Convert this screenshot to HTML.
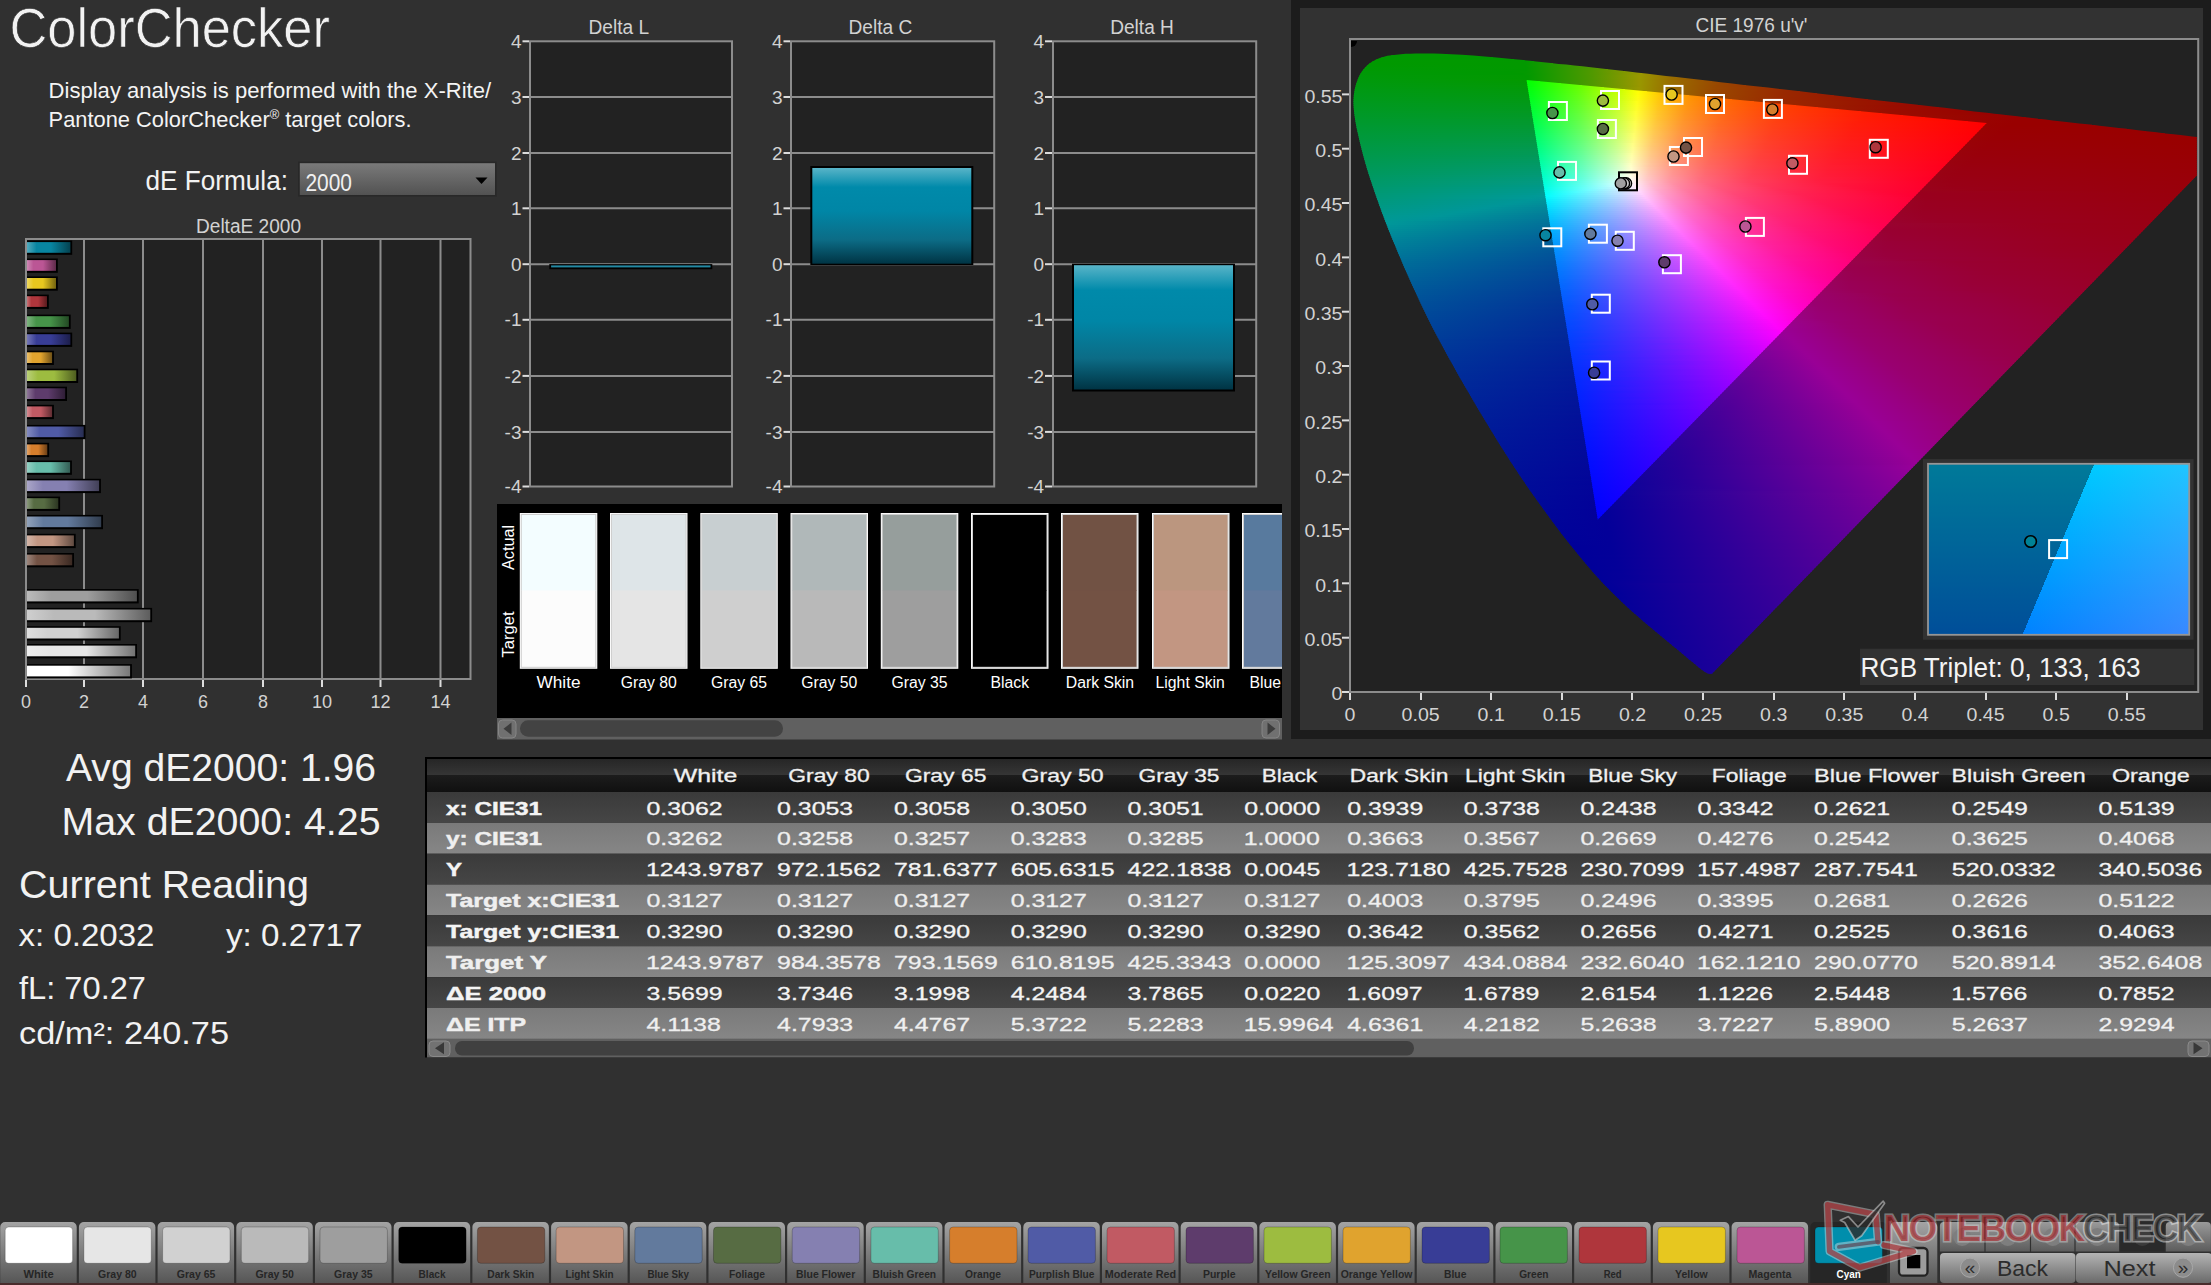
<!DOCTYPE html>
<html lang="en"><head><meta charset="utf-8"><title>ColorChecker</title>
<style>
html,body{margin:0;padding:0;background:#303030;overflow:hidden}
svg{display:block;font-family:"Liberation Sans",sans-serif}
text{white-space:pre}
</style></head><body>
<svg width="2211" height="1285" viewBox="0 0 2211 1285">
<defs>
<linearGradient id="cb" x1="0" y1="0" x2="0" y2="1"><stop offset="0" stop-color="#7a7a7a"/><stop offset="1" stop-color="#525252"/></linearGradient>
<linearGradient id="db0"><stop offset="0" stop-color="#52aabd"/><stop offset="0.22" stop-color="#0885a1"/><stop offset="0.55" stop-color="#0885a1"/><stop offset="1" stop-color="#044250"/></linearGradient>
<linearGradient id="db1"><stop offset="0" stop-color="#cf89b5"/><stop offset="0.22" stop-color="#bb5695"/><stop offset="0.55" stop-color="#bb5695"/><stop offset="1" stop-color="#5e2b4a"/></linearGradient>
<linearGradient id="db2"><stop offset="0" stop-color="#eed862"/><stop offset="0.22" stop-color="#e7c71f"/><stop offset="0.55" stop-color="#e7c71f"/><stop offset="1" stop-color="#746410"/></linearGradient>
<linearGradient id="db3"><stop offset="0" stop-color="#c77276"/><stop offset="0.22" stop-color="#af363c"/><stop offset="0.55" stop-color="#af363c"/><stop offset="1" stop-color="#581b1e"/></linearGradient>
<linearGradient id="db4"><stop offset="0" stop-color="#7eb480"/><stop offset="0.22" stop-color="#469449"/><stop offset="0.55" stop-color="#469449"/><stop offset="1" stop-color="#234a24"/></linearGradient>
<linearGradient id="db5"><stop offset="0" stop-color="#7477b6"/><stop offset="0.22" stop-color="#383d96"/><stop offset="0.55" stop-color="#383d96"/><stop offset="1" stop-color="#1c1e4b"/></linearGradient>
<linearGradient id="db6"><stop offset="0" stop-color="#e9bf6d"/><stop offset="0.22" stop-color="#e0a32e"/><stop offset="0.55" stop-color="#e0a32e"/><stop offset="1" stop-color="#705217"/></linearGradient>
<linearGradient id="db7"><stop offset="0" stop-color="#bad079"/><stop offset="0.22" stop-color="#9dbc40"/><stop offset="0.55" stop-color="#9dbc40"/><stop offset="1" stop-color="#4e5e20"/></linearGradient>
<linearGradient id="db8"><stop offset="0" stop-color="#8e7698"/><stop offset="0.22" stop-color="#5e3c6c"/><stop offset="0.55" stop-color="#5e3c6c"/><stop offset="1" stop-color="#2f1e36"/></linearGradient>
<linearGradient id="db9"><stop offset="0" stop-color="#d48c92"/><stop offset="0.22" stop-color="#c15a63"/><stop offset="0.55" stop-color="#c15a63"/><stop offset="1" stop-color="#602d32"/></linearGradient>
<linearGradient id="db10"><stop offset="0" stop-color="#848cc1"/><stop offset="0.22" stop-color="#505ba6"/><stop offset="0.55" stop-color="#505ba6"/><stop offset="1" stop-color="#282e53"/></linearGradient>
<linearGradient id="db11"><stop offset="0" stop-color="#e2a56b"/><stop offset="0.22" stop-color="#d67e2c"/><stop offset="0.55" stop-color="#d67e2c"/><stop offset="1" stop-color="#6b3f16"/></linearGradient>
<linearGradient id="db12"><stop offset="0" stop-color="#95d1c4"/><stop offset="0.22" stop-color="#67bdaa"/><stop offset="0.55" stop-color="#67bdaa"/><stop offset="1" stop-color="#345e55"/></linearGradient>
<linearGradient id="db13"><stop offset="0" stop-color="#aaa6c8"/><stop offset="0.22" stop-color="#8580b1"/><stop offset="0.55" stop-color="#8580b1"/><stop offset="1" stop-color="#424058"/></linearGradient>
<linearGradient id="db14"><stop offset="0" stop-color="#89987b"/><stop offset="0.22" stop-color="#576c43"/><stop offset="0.55" stop-color="#576c43"/><stop offset="1" stop-color="#2c3622"/></linearGradient>
<linearGradient id="db15"><stop offset="0" stop-color="#91a2ba"/><stop offset="0.22" stop-color="#627a9d"/><stop offset="0.55" stop-color="#627a9d"/><stop offset="1" stop-color="#313d4e"/></linearGradient>
<linearGradient id="db16"><stop offset="0" stop-color="#d4b6a8"/><stop offset="0.22" stop-color="#c29682"/><stop offset="0.55" stop-color="#c29682"/><stop offset="1" stop-color="#614b41"/></linearGradient>
<linearGradient id="db17"><stop offset="0" stop-color="#9d867c"/><stop offset="0.22" stop-color="#735244"/><stop offset="0.55" stop-color="#735244"/><stop offset="1" stop-color="#3a2922"/></linearGradient>
<linearGradient id="db19"><stop offset="0" stop-color="#bbbbbb"/><stop offset="0.22" stop-color="#9e9e9e"/><stop offset="0.55" stop-color="#9e9e9e"/><stop offset="1" stop-color="#4f4f4f"/></linearGradient>
<linearGradient id="db20"><stop offset="0" stop-color="#cfcfcf"/><stop offset="0.22" stop-color="#bababa"/><stop offset="0.55" stop-color="#bababa"/><stop offset="1" stop-color="#5d5d5d"/></linearGradient>
<linearGradient id="db21"><stop offset="0" stop-color="#dfdfdf"/><stop offset="0.22" stop-color="#d1d1d1"/><stop offset="0.55" stop-color="#d1d1d1"/><stop offset="1" stop-color="#686868"/></linearGradient>
<linearGradient id="db22"><stop offset="0" stop-color="#eeeeee"/><stop offset="0.22" stop-color="#e6e6e6"/><stop offset="0.55" stop-color="#e6e6e6"/><stop offset="1" stop-color="#737373"/></linearGradient>
<linearGradient id="db23"><stop offset="0" stop-color="#ffffff"/><stop offset="0.4" stop-color="#ffffff"/><stop offset="1" stop-color="#787878"/></linearGradient>
<linearGradient id="cy" x1="0" y1="0" x2="0" y2="1"><stop offset="0" stop-color="#58b4c8"/><stop offset=".2" stop-color="#008aaa"/><stop offset=".45" stop-color="#0086a6"/><stop offset=".75" stop-color="#0c6c86"/><stop offset="1" stop-color="#003444"/></linearGradient>
<clipPath id="swc"><rect x="497" y="504" width="785" height="236"/></clipPath>
<linearGradient id="inV" x1="0" y1="0" x2="0" y2="1"><stop offset="0" stop-color="#00cbff"/><stop offset="1" stop-color="#0082ff"/></linearGradient>
<linearGradient id="inS" gradientUnits="userSpaceOnUse" x1="1874.1" y1="471.6" x2="2242.9" y2="626.4"><stop offset="0" stop-color="#000" stop-opacity=".4"/><stop offset=".5" stop-color="#000" stop-opacity=".4"/><stop offset=".5" stop-color="#ffa0ff" stop-opacity="0"/><stop offset="1" stop-color="#ffa0ff" stop-opacity=".29"/></linearGradient>
<linearGradient id="th" x1="0" y1="0" x2="0" y2="1"><stop offset="0" stop-color="#262626"/><stop offset=".5" stop-color="#363636"/><stop offset=".5" stop-color="#1c1c1c"/><stop offset="1" stop-color="#101010"/></linearGradient>
<linearGradient id="rd" x1="0" y1="0" x2="0" y2="1"><stop offset="0" stop-color="#3a3a3a"/><stop offset="1" stop-color="#464646"/></linearGradient>
<linearGradient id="rl" x1="0" y1="0" x2="0" y2="1"><stop offset="0" stop-color="#7a7a7a"/><stop offset="1" stop-color="#868686"/></linearGradient>
<clipPath id="tbc"><rect x="427" y="759" width="1784" height="300"/></clipPath>
<linearGradient id="bt" x1="0" y1="0" x2="0" y2="1"><stop offset="0" stop-color="#a4a4a4"/><stop offset="1" stop-color="#565656"/></linearGradient>
<linearGradient id="nv" x1="0" y1="0" x2="0" y2="1"><stop offset="0" stop-color="#b4b4b4"/><stop offset="1" stop-color="#6a6a6a"/></linearGradient>
<linearGradient id="sm" x1="0" y1="0" x2="0" y2="1"><stop offset="0" stop-color="#9a9a9a"/><stop offset="1" stop-color="#5c5c5c"/></linearGradient>
</defs>
<rect width="2211" height="1285" fill="#303030"/>
<text x="9.4" y="46.5" font-size="56" fill="#f2f2f2" textLength="320.5" lengthAdjust="spacingAndGlyphs" stroke="#303030" stroke-width=".7">ColorChecker</text>
<text x="48.6" y="98.0" font-size="21.2" fill="#f4f4f4" textLength="442.5" lengthAdjust="spacingAndGlyphs">Display analysis is performed with the X-Rite/</text>
<text x="48.6" y="126.9" font-size="21.2" fill="#f4f4f4" textLength="363" lengthAdjust="spacingAndGlyphs">Pantone ColorChecker<tspan font-size="12.5" dy="-7.5">®</tspan><tspan dy="7.5"> target colors.</tspan></text>
<text x="145.5" y="190.0" font-size="28" fill="#f2f2f2" textLength="142.5" lengthAdjust="spacingAndGlyphs">dE Formula:</text>
<rect x="298" y="161.6" width="198.7" height="35" fill="#282828"/>
<rect x="299.8" y="163.2" width="195.2" height="31.8" fill="url(#cb)"/>
<text x="305.5" y="190.6" font-size="23.5" fill="#f0f0f0" textLength="46.5" lengthAdjust="spacingAndGlyphs">2000</text>
<path d="M475.5 177.5h12l-6 6.5z" fill="#000"/>
<text x="196.0" y="233.0" font-size="19.5" fill="#d2d2d2" textLength="105.0" lengthAdjust="spacingAndGlyphs">DeltaE 2000</text>
<rect x="26" y="239" width="444.5" height="440" fill="#222222" stroke="#8c8c8c" stroke-width="2"/>
<line x1="84" y1="240" x2="84" y2="678" stroke="#8c8c8c" stroke-width="2"/>
<line x1="143" y1="240" x2="143" y2="678" stroke="#8c8c8c" stroke-width="2"/>
<line x1="203" y1="240" x2="203" y2="678" stroke="#8c8c8c" stroke-width="2"/>
<line x1="263" y1="240" x2="263" y2="678" stroke="#8c8c8c" stroke-width="2"/>
<line x1="322" y1="240" x2="322" y2="678" stroke="#8c8c8c" stroke-width="2"/>
<line x1="380.5" y1="240" x2="380.5" y2="678" stroke="#8c8c8c" stroke-width="2"/>
<line x1="440.5" y1="240" x2="440.5" y2="678" stroke="#8c8c8c" stroke-width="2"/>
<line x1="26" y1="680" x2="26" y2="687" stroke="#dcdcdc" stroke-width="2"/>
<text x="21.0" y="708.0" font-size="19" fill="#d2d2d2" textLength="10.0" lengthAdjust="spacingAndGlyphs">0</text>
<line x1="84" y1="680" x2="84" y2="687" stroke="#dcdcdc" stroke-width="2"/>
<text x="79.0" y="708.0" font-size="19" fill="#d2d2d2" textLength="10.0" lengthAdjust="spacingAndGlyphs">2</text>
<line x1="143" y1="680" x2="143" y2="687" stroke="#dcdcdc" stroke-width="2"/>
<text x="138.0" y="708.0" font-size="19" fill="#d2d2d2" textLength="10.0" lengthAdjust="spacingAndGlyphs">4</text>
<line x1="203" y1="680" x2="203" y2="687" stroke="#dcdcdc" stroke-width="2"/>
<text x="198.0" y="708.0" font-size="19" fill="#d2d2d2" textLength="10.0" lengthAdjust="spacingAndGlyphs">6</text>
<line x1="263" y1="680" x2="263" y2="687" stroke="#dcdcdc" stroke-width="2"/>
<text x="258.0" y="708.0" font-size="19" fill="#d2d2d2" textLength="10.0" lengthAdjust="spacingAndGlyphs">8</text>
<line x1="322" y1="680" x2="322" y2="687" stroke="#dcdcdc" stroke-width="2"/>
<text x="312.0" y="708.0" font-size="19" fill="#d2d2d2" textLength="20.1" lengthAdjust="spacingAndGlyphs">10</text>
<line x1="380.5" y1="680" x2="380.5" y2="687" stroke="#dcdcdc" stroke-width="2"/>
<text x="370.5" y="708.0" font-size="19" fill="#d2d2d2" textLength="20.1" lengthAdjust="spacingAndGlyphs">12</text>
<line x1="440.5" y1="680" x2="440.5" y2="687" stroke="#dcdcdc" stroke-width="2"/>
<text x="430.5" y="708.0" font-size="19" fill="#d2d2d2" textLength="20.1" lengthAdjust="spacingAndGlyphs">14</text>
<rect x="27" y="240.5" width="45.2" height="14.3" fill="#000"/>
<rect x="27" y="242.1" width="43.4" height="10.7" fill="url(#db0)"/>
<rect x="27" y="258.5" width="30.8" height="14.3" fill="#000"/>
<rect x="27" y="260.1" width="29" height="10.7" fill="url(#db1)"/>
<rect x="27" y="276.4" width="30.8" height="14.3" fill="#000"/>
<rect x="27" y="278" width="29" height="10.7" fill="url(#db2)"/>
<rect x="27" y="294.6" width="21.8" height="14.3" fill="#000"/>
<rect x="27" y="296.2" width="20" height="10.7" fill="url(#db3)"/>
<rect x="27" y="314.6" width="43.7" height="14.3" fill="#000"/>
<rect x="27" y="316.2" width="41.9" height="10.7" fill="url(#db4)"/>
<rect x="27" y="332.6" width="45.2" height="14.3" fill="#000"/>
<rect x="27" y="334.2" width="43.4" height="10.7" fill="url(#db5)"/>
<rect x="27" y="350.7" width="26.9" height="14.3" fill="#000"/>
<rect x="27" y="352.3" width="25.1" height="10.7" fill="url(#db6)"/>
<rect x="27" y="368.7" width="51.1" height="14.3" fill="#000"/>
<rect x="27" y="370.3" width="49.3" height="10.7" fill="url(#db7)"/>
<rect x="27" y="386.7" width="40" height="14.3" fill="#000"/>
<rect x="27" y="388.3" width="38.2" height="10.7" fill="url(#db8)"/>
<rect x="27" y="404.8" width="26.9" height="14.3" fill="#000"/>
<rect x="27" y="406.4" width="25.1" height="10.7" fill="url(#db9)"/>
<rect x="27" y="424.9" width="58.5" height="14.3" fill="#000"/>
<rect x="27" y="426.5" width="56.7" height="10.7" fill="url(#db10)"/>
<rect x="27" y="442.8" width="22.1" height="14.3" fill="#000"/>
<rect x="27" y="444.4" width="20.3" height="10.7" fill="url(#db11)"/>
<rect x="27" y="460.5" width="44.9" height="14.3" fill="#000"/>
<rect x="27" y="462.1" width="43.1" height="10.7" fill="url(#db12)"/>
<rect x="27" y="478.8" width="73.9" height="14.3" fill="#000"/>
<rect x="27" y="480.4" width="72.1" height="10.7" fill="url(#db13)"/>
<rect x="27" y="496.6" width="33.1" height="14.3" fill="#000"/>
<rect x="27" y="498.2" width="31.3" height="10.7" fill="url(#db14)"/>
<rect x="27" y="514.9" width="76" height="14.3" fill="#000"/>
<rect x="27" y="516.5" width="74.2" height="10.7" fill="url(#db15)"/>
<rect x="27" y="533.8" width="48.7" height="14.3" fill="#000"/>
<rect x="27" y="535.4" width="46.9" height="10.7" fill="url(#db16)"/>
<rect x="27" y="553" width="47" height="14.3" fill="#000"/>
<rect x="27" y="554.6" width="45.2" height="10.7" fill="url(#db17)"/>
<rect x="27" y="589.1" width="111.7" height="14.3" fill="#000"/>
<rect x="27" y="590.7" width="109.9" height="10.7" fill="url(#db19)"/>
<rect x="27" y="607.9" width="125.1" height="14.3" fill="#000"/>
<rect x="27" y="609.5" width="123.3" height="10.7" fill="url(#db20)"/>
<rect x="27" y="626.2" width="93.7" height="14.3" fill="#000"/>
<rect x="27" y="627.8" width="91.9" height="10.7" fill="url(#db21)"/>
<rect x="27" y="644" width="110" height="14.3" fill="#000"/>
<rect x="27" y="645.6" width="108.2" height="10.7" fill="url(#db22)"/>
<rect x="27" y="664.1" width="104.9" height="14.3" fill="#000"/>
<rect x="27" y="665.7" width="103.1" height="10.7" fill="url(#db23)"/>
<text x="66.0" y="780.6" font-size="38" fill="#f2f2f2" textLength="310.0" lengthAdjust="spacingAndGlyphs">Avg dE2000: 1.96</text>
<text x="61.5" y="835.0" font-size="38" fill="#f2f2f2" textLength="319.0" lengthAdjust="spacingAndGlyphs">Max dE2000: 4.25</text>
<text x="19.0" y="898.0" font-size="38" fill="#f2f2f2" textLength="290.0" lengthAdjust="spacingAndGlyphs">Current Reading</text>
<text x="18.5" y="945.5" font-size="31" fill="#f2f2f2" textLength="136.0" lengthAdjust="spacingAndGlyphs">x: 0.2032</text>
<text x="226.0" y="945.5" font-size="31" fill="#f2f2f2" textLength="136.5" lengthAdjust="spacingAndGlyphs">y: 0.2717</text>
<text x="19.0" y="999.4" font-size="31" fill="#f2f2f2" textLength="127.0" lengthAdjust="spacingAndGlyphs">fL: 70.27</text>
<text x="19.0" y="1044.4" font-size="31" fill="#f2f2f2" textLength="210.0" lengthAdjust="spacingAndGlyphs">cd/m²: 240.75</text>
<text x="588.5" y="33.8" font-size="19.5" fill="#d2d2d2" textLength="60.6" lengthAdjust="spacingAndGlyphs">Delta L</text>
<rect x="530" y="41.3" width="202" height="445.2" fill="#222222" stroke="#8c8c8c" stroke-width="2"/>
<line x1="522.5" y1="41.3" x2="529" y2="41.3" stroke="#dcdcdc" stroke-width="2"/>
<text x="510.9" y="47.9" font-size="19" fill="#d2d2d2">4</text>
<line x1="530" y1="97" x2="732" y2="97" stroke="#8c8c8c" stroke-width="2"/>
<line x1="522.5" y1="97" x2="529" y2="97" stroke="#dcdcdc" stroke-width="2"/>
<text x="510.9" y="103.6" font-size="19" fill="#d2d2d2">3</text>
<line x1="530" y1="153" x2="732" y2="153" stroke="#8c8c8c" stroke-width="2"/>
<line x1="522.5" y1="153" x2="529" y2="153" stroke="#dcdcdc" stroke-width="2"/>
<text x="510.9" y="159.6" font-size="19" fill="#d2d2d2">2</text>
<line x1="530" y1="208.3" x2="732" y2="208.3" stroke="#8c8c8c" stroke-width="2"/>
<line x1="522.5" y1="208.3" x2="529" y2="208.3" stroke="#dcdcdc" stroke-width="2"/>
<text x="510.9" y="214.9" font-size="19" fill="#d2d2d2">1</text>
<line x1="530" y1="264.2" x2="732" y2="264.2" stroke="#8c8c8c" stroke-width="2"/>
<line x1="522.5" y1="264.2" x2="529" y2="264.2" stroke="#dcdcdc" stroke-width="2"/>
<text x="510.9" y="270.8" font-size="19" fill="#d2d2d2">0</text>
<line x1="530" y1="319.8" x2="732" y2="319.8" stroke="#8c8c8c" stroke-width="2"/>
<line x1="522.5" y1="319.8" x2="529" y2="319.8" stroke="#dcdcdc" stroke-width="2"/>
<text x="504.6" y="326.4" font-size="19" fill="#d2d2d2">-1</text>
<line x1="530" y1="375.9" x2="732" y2="375.9" stroke="#8c8c8c" stroke-width="2"/>
<line x1="522.5" y1="375.9" x2="529" y2="375.9" stroke="#dcdcdc" stroke-width="2"/>
<text x="504.6" y="382.5" font-size="19" fill="#d2d2d2">-2</text>
<line x1="530" y1="431.9" x2="732" y2="431.9" stroke="#8c8c8c" stroke-width="2"/>
<line x1="522.5" y1="431.9" x2="529" y2="431.9" stroke="#dcdcdc" stroke-width="2"/>
<text x="504.6" y="438.5" font-size="19" fill="#d2d2d2">-3</text>
<line x1="522.5" y1="486.5" x2="529" y2="486.5" stroke="#dcdcdc" stroke-width="2"/>
<text x="504.6" y="493.1" font-size="19" fill="#d2d2d2">-4</text>
<rect x="549.3" y="264.1" width="163" height="5.1" fill="#000"/>
<rect x="551.1" y="265.4" width="159.4" height="2" fill="#2389a3"/>
<text x="848.5" y="33.8" font-size="19.5" fill="#d2d2d2" textLength="63.7" lengthAdjust="spacingAndGlyphs">Delta C</text>
<rect x="791" y="41.3" width="203.2" height="445.2" fill="#222222" stroke="#8c8c8c" stroke-width="2"/>
<line x1="783.5" y1="41.3" x2="790" y2="41.3" stroke="#dcdcdc" stroke-width="2"/>
<text x="771.9" y="47.9" font-size="19" fill="#d2d2d2">4</text>
<line x1="791" y1="97" x2="994.2" y2="97" stroke="#8c8c8c" stroke-width="2"/>
<line x1="783.5" y1="97" x2="790" y2="97" stroke="#dcdcdc" stroke-width="2"/>
<text x="771.9" y="103.6" font-size="19" fill="#d2d2d2">3</text>
<line x1="791" y1="153" x2="994.2" y2="153" stroke="#8c8c8c" stroke-width="2"/>
<line x1="783.5" y1="153" x2="790" y2="153" stroke="#dcdcdc" stroke-width="2"/>
<text x="771.9" y="159.6" font-size="19" fill="#d2d2d2">2</text>
<line x1="791" y1="208.3" x2="994.2" y2="208.3" stroke="#8c8c8c" stroke-width="2"/>
<line x1="783.5" y1="208.3" x2="790" y2="208.3" stroke="#dcdcdc" stroke-width="2"/>
<text x="771.9" y="214.9" font-size="19" fill="#d2d2d2">1</text>
<line x1="791" y1="264.2" x2="994.2" y2="264.2" stroke="#8c8c8c" stroke-width="2"/>
<line x1="783.5" y1="264.2" x2="790" y2="264.2" stroke="#dcdcdc" stroke-width="2"/>
<text x="771.9" y="270.8" font-size="19" fill="#d2d2d2">0</text>
<line x1="791" y1="319.8" x2="994.2" y2="319.8" stroke="#8c8c8c" stroke-width="2"/>
<line x1="783.5" y1="319.8" x2="790" y2="319.8" stroke="#dcdcdc" stroke-width="2"/>
<text x="765.6" y="326.4" font-size="19" fill="#d2d2d2">-1</text>
<line x1="791" y1="375.9" x2="994.2" y2="375.9" stroke="#8c8c8c" stroke-width="2"/>
<line x1="783.5" y1="375.9" x2="790" y2="375.9" stroke="#dcdcdc" stroke-width="2"/>
<text x="765.6" y="382.5" font-size="19" fill="#d2d2d2">-2</text>
<line x1="791" y1="431.9" x2="994.2" y2="431.9" stroke="#8c8c8c" stroke-width="2"/>
<line x1="783.5" y1="431.9" x2="790" y2="431.9" stroke="#dcdcdc" stroke-width="2"/>
<text x="765.6" y="438.5" font-size="19" fill="#d2d2d2">-3</text>
<line x1="783.5" y1="486.5" x2="790" y2="486.5" stroke="#dcdcdc" stroke-width="2"/>
<text x="765.6" y="493.1" font-size="19" fill="#d2d2d2">-4</text>
<rect x="810.3" y="166" width="163" height="99" fill="#000"/>
<rect x="812.3" y="168" width="159" height="95.7" fill="url(#cy)"/>
<text x="1110.2" y="33.8" font-size="19.5" fill="#d2d2d2" textLength="63.7" lengthAdjust="spacingAndGlyphs">Delta H</text>
<rect x="1053" y="41.3" width="203.2" height="445.2" fill="#222222" stroke="#8c8c8c" stroke-width="2"/>
<line x1="1045" y1="41.3" x2="1052" y2="41.3" stroke="#dcdcdc" stroke-width="2"/>
<text x="1033.6" y="47.9" font-size="19" fill="#d2d2d2">4</text>
<line x1="1053" y1="97" x2="1256" y2="97" stroke="#8c8c8c" stroke-width="2"/>
<line x1="1045" y1="97" x2="1052" y2="97" stroke="#dcdcdc" stroke-width="2"/>
<text x="1033.6" y="103.6" font-size="19" fill="#d2d2d2">3</text>
<line x1="1053" y1="153" x2="1256" y2="153" stroke="#8c8c8c" stroke-width="2"/>
<line x1="1045" y1="153" x2="1052" y2="153" stroke="#dcdcdc" stroke-width="2"/>
<text x="1033.6" y="159.6" font-size="19" fill="#d2d2d2">2</text>
<line x1="1053" y1="208.3" x2="1256" y2="208.3" stroke="#8c8c8c" stroke-width="2"/>
<line x1="1045" y1="208.3" x2="1052" y2="208.3" stroke="#dcdcdc" stroke-width="2"/>
<text x="1033.6" y="214.9" font-size="19" fill="#d2d2d2">1</text>
<line x1="1053" y1="264.2" x2="1256" y2="264.2" stroke="#8c8c8c" stroke-width="2"/>
<line x1="1045" y1="264.2" x2="1052" y2="264.2" stroke="#dcdcdc" stroke-width="2"/>
<text x="1033.6" y="270.8" font-size="19" fill="#d2d2d2">0</text>
<line x1="1053" y1="319.8" x2="1256" y2="319.8" stroke="#8c8c8c" stroke-width="2"/>
<line x1="1045" y1="319.8" x2="1052" y2="319.8" stroke="#dcdcdc" stroke-width="2"/>
<text x="1027.3" y="326.4" font-size="19" fill="#d2d2d2">-1</text>
<line x1="1053" y1="375.9" x2="1256" y2="375.9" stroke="#8c8c8c" stroke-width="2"/>
<line x1="1045" y1="375.9" x2="1052" y2="375.9" stroke="#dcdcdc" stroke-width="2"/>
<text x="1027.3" y="382.5" font-size="19" fill="#d2d2d2">-2</text>
<line x1="1053" y1="431.9" x2="1256" y2="431.9" stroke="#8c8c8c" stroke-width="2"/>
<line x1="1045" y1="431.9" x2="1052" y2="431.9" stroke="#dcdcdc" stroke-width="2"/>
<text x="1027.3" y="438.5" font-size="19" fill="#d2d2d2">-3</text>
<line x1="1045" y1="486.5" x2="1052" y2="486.5" stroke="#dcdcdc" stroke-width="2"/>
<text x="1027.3" y="493.1" font-size="19" fill="#d2d2d2">-4</text>
<rect x="1072" y="263.7" width="163" height="127.8" fill="#000"/>
<rect x="1074" y="265.2" width="159" height="124.3" fill="url(#cy)"/>
<rect x="497" y="504" width="785" height="214" fill="#000"/>
<g clip-path="url(#swc)"><rect x="519.8" y="513" width="77.5" height="155.8" fill="#fafafa"/><rect x="520.8" y="514" width="75.5" height="153.8" fill="#cfcfcf"/><rect x="521.8" y="515" width="73.5" height="76" fill="#f3fdff"/><rect x="521.8" y="590.4" width="73.5" height="76.4" fill="#fcfcfc"/><text x="536.5" y="687.6" font-size="16" fill="#fff" textLength="44.0" lengthAdjust="spacingAndGlyphs">White</text><rect x="610" y="513" width="77.5" height="155.8" fill="#fafafa"/><rect x="611" y="514" width="75.5" height="153.8" fill="#cfcfcf"/><rect x="612" y="515" width="73.5" height="76" fill="#dee5e8"/><rect x="612" y="590.4" width="73.5" height="76.4" fill="#e5e5e5"/><text x="620.7" y="687.6" font-size="16" fill="#fff" textLength="56.1" lengthAdjust="spacingAndGlyphs">Gray 80</text><rect x="700.3" y="513" width="77.5" height="155.8" fill="#fafafa"/><rect x="701.3" y="514" width="75.5" height="153.8" fill="#cfcfcf"/><rect x="702.3" y="515" width="73.5" height="76" fill="#c8cfd1"/><rect x="702.3" y="590.4" width="73.5" height="76.4" fill="#cfcfcf"/><text x="711.0" y="687.6" font-size="16" fill="#fff" textLength="56.1" lengthAdjust="spacingAndGlyphs">Gray 65</text><rect x="790.5" y="513" width="77.5" height="155.8" fill="#fafafa"/><rect x="791.5" y="514" width="75.5" height="153.8" fill="#cfcfcf"/><rect x="792.5" y="515" width="73.5" height="76" fill="#b0b8b9"/><rect x="792.5" y="590.4" width="73.5" height="76.4" fill="#b9b9b9"/><text x="801.2" y="687.6" font-size="16" fill="#fff" textLength="56.1" lengthAdjust="spacingAndGlyphs">Gray 50</text><rect x="880.8" y="513" width="77.5" height="155.8" fill="#fafafa"/><rect x="881.8" y="514" width="75.5" height="153.8" fill="#cfcfcf"/><rect x="882.8" y="515" width="73.5" height="76" fill="#969e9c"/><rect x="882.8" y="590.4" width="73.5" height="76.4" fill="#9e9e9e"/><text x="891.5" y="687.6" font-size="16" fill="#fff" textLength="56.1" lengthAdjust="spacingAndGlyphs">Gray 35</text><rect x="971" y="513" width="77.5" height="155.8" fill="#fafafa"/><rect x="972" y="514" width="75.5" height="153.8" fill="#cfcfcf"/><rect x="973" y="515" width="73.5" height="76" fill="#000000"/><rect x="973" y="590.4" width="73.5" height="76.4" fill="#000000"/><text x="990.5" y="687.6" font-size="16" fill="#fff" textLength="38.5" lengthAdjust="spacingAndGlyphs">Black</text><rect x="1061" y="513" width="77.5" height="155.8" fill="#fafafa"/><rect x="1062" y="514" width="75.5" height="153.8" fill="#cfcfcf"/><rect x="1063" y="515" width="73.5" height="76" fill="#715244"/><rect x="1063" y="590.4" width="73.5" height="76.4" fill="#735244"/><text x="1065.8" y="687.6" font-size="16" fill="#fff" textLength="68.3" lengthAdjust="spacingAndGlyphs">Dark Skin</text><rect x="1152" y="513" width="77.5" height="155.8" fill="#fafafa"/><rect x="1153" y="514" width="75.5" height="153.8" fill="#cfcfcf"/><rect x="1154" y="515" width="73.5" height="76" fill="#bb967f"/><rect x="1154" y="590.4" width="73.5" height="76.4" fill="#c29682"/><text x="1155.6" y="687.6" font-size="16" fill="#fff" textLength="69.2" lengthAdjust="spacingAndGlyphs">Light Skin</text><rect x="1242" y="513" width="77.5" height="155.8" fill="#fafafa"/><rect x="1243" y="514" width="75.5" height="153.8" fill="#cfcfcf"/><rect x="1244" y="515" width="73.5" height="76" fill="#587a9e"/><rect x="1244" y="590.4" width="73.5" height="76.4" fill="#627a9d"/><text x="1249.4" y="687.6" font-size="16" fill="#fff" textLength="62.2" lengthAdjust="spacingAndGlyphs">Blue Sky</text></g>
<text transform="translate(514.3,570) rotate(-90)" font-size="16" fill="#fff" textLength="45" lengthAdjust="spacingAndGlyphs">Actual</text>
<text transform="translate(514.3,657.5) rotate(-90)" font-size="16" fill="#fff" textLength="46" lengthAdjust="spacingAndGlyphs">Target</text>
<rect x="497" y="718" width="785" height="21.5" fill="#606060"/>
<rect x="520" y="720.3" width="263" height="16.4" fill="#434343" rx="8"/>
<rect x="498.5" y="720" width="17.5" height="18" fill="#707070" rx="4" stroke="#858585" stroke-width="1"/>
<path d="M511.5 722.5v12.5l-8-6.2z" fill="#3c3c3c"/>
<rect x="1262" y="720" width="17.5" height="18" fill="#707070" rx="4" stroke="#858585" stroke-width="1"/>
<path d="M1267.5 722.5v12.5l8-6.2z" fill="#3c3c3c"/>
<rect x="1291" y="0" width="920" height="739" fill="#1c1c1c"/>
<rect x="1300" y="8" width="903" height="722" fill="#323232"/>
<text x="1695.5" y="32.2" font-size="19.5" fill="#d2d2d2" textLength="112.0" lengthAdjust="spacingAndGlyphs">CIE 1976 u'v'</text>
<rect x="1350" y="40" width="848" height="652" fill="#222222"/>
<defs>
<clipPath id="cpl"><rect x="1351" y="41" width="845.8" height="650"/></clipPath>
<clipPath id="clo" clip-path="url(#cpl)"><path d="M1712.7 673.0C1712.5 673.1 1712.3 673.7 1711.2 673.7C1710.1 673.6 1708.5 673.9 1706.2 672.7C1704.0 671.4 1700.3 668.4 1697.6 666.4C1695.0 664.4 1693.2 662.9 1690.5 660.6C1687.8 658.4 1684.9 655.8 1681.5 653.0C1678.1 650.1 1674.5 647.2 1670.1 643.5C1665.7 639.9 1660.6 635.9 1655.2 631.3C1649.8 626.8 1644.2 622.1 1637.7 616.3C1631.2 610.5 1624.0 604.2 1616.2 596.4C1608.3 588.5 1600.6 581.0 1590.7 569.4C1580.7 557.8 1569.0 543.7 1556.5 527.0C1544.0 510.2 1529.8 490.7 1515.5 469.0C1501.2 447.3 1485.5 421.8 1471.0 396.8C1456.4 371.7 1440.9 344.2 1428.1 318.7C1415.4 293.2 1403.8 266.8 1394.3 243.8C1384.7 220.8 1376.9 199.0 1370.8 180.6C1364.7 162.2 1360.8 146.9 1357.9 133.6C1355.0 120.4 1353.5 110.1 1353.5 100.9C1353.6 91.8 1355.6 84.6 1358.1 78.5C1360.5 72.4 1364.2 67.8 1368.4 64.2C1372.5 60.6 1377.7 58.6 1383.2 56.9C1388.6 55.3 1394.6 54.8 1400.9 54.3C1407.1 53.7 1414.0 53.7 1420.7 53.6C1427.4 53.5 1434.0 53.6 1440.9 53.8C1447.7 54.0 1454.6 54.4 1461.9 54.8C1469.2 55.3 1476.7 55.8 1484.6 56.5C1492.4 57.1 1500.6 57.9 1509.2 58.7C1517.8 59.5 1526.7 60.4 1536.2 61.4C1545.8 62.4 1555.7 63.5 1566.3 64.6C1576.8 65.8 1587.8 67.0 1599.4 68.3C1611.1 69.6 1623.3 71.0 1636.2 72.5C1649.0 73.9 1662.5 75.5 1676.5 77.1C1690.6 78.7 1705.3 80.4 1720.6 82.2C1735.8 83.9 1751.8 85.8 1768.0 87.6C1784.3 89.5 1801.3 91.4 1818.3 93.4C1835.3 95.3 1852.9 97.4 1869.9 99.4C1886.8 101.3 1903.5 103.2 1919.9 105.1C1936.4 107.0 1953.1 108.9 1968.6 110.7C1984.1 112.5 1993.3 113.5 2012.7 115.7C2032.1 117.9 2064.3 121.7 2084.9 124.0C2105.4 126.4 2121.3 128.2 2136.1 129.9C2150.8 131.6 2163.2 133.1 2173.5 134.2C2183.9 135.4 2191.6 136.3 2198.2 137.1C2204.8 137.8 2207.5 138.1 2212.9 138.7C2218.3 139.4 2227.6 140.4 2230.5 140.8Z"/></clipPath>
<clipPath id="ctr"><path d="M1986.6 123.0L1526.6 79.9L1597.8 519.5Z"/></clipPath>
<linearGradient id="a0" gradientUnits="userSpaceOnUse" x1="1391" x2="1466"><stop offset="0" stop-color="#090"/><stop offset="1" stop-color="#090"/></linearGradient>
<linearGradient id="a1" gradientUnits="userSpaceOnUse" x1="1381" x2="1493"><stop offset="0" stop-color="#090"/><stop offset="1" stop-color="#090"/></linearGradient>
<linearGradient id="a2" gradientUnits="userSpaceOnUse" x1="1375" x2="1514"><stop offset="0" stop-color="#090"/><stop offset="1" stop-color="#090"/></linearGradient>
<linearGradient id="a3" gradientUnits="userSpaceOnUse" x1="1372" x2="1534"><stop offset="0" stop-color="#090"/><stop offset=".944" stop-color="#029900"/><stop offset="1" stop-color="#0b9900"/></linearGradient>
<linearGradient id="a4" gradientUnits="userSpaceOnUse" x1="1368" x2="1553"><stop offset="0" stop-color="#090"/><stop offset=".854" stop-color="#029900"/><stop offset="1" stop-color="#209900"/></linearGradient>
<linearGradient id="a5" gradientUnits="userSpaceOnUse" x1="1366" x2="1571"><stop offset="0" stop-color="#090"/><stop offset=".78" stop-color="#029900"/><stop offset="1" stop-color="#359900"/></linearGradient>
<linearGradient id="a6" gradientUnits="userSpaceOnUse" x1="1364" x2="1588"><stop offset="0" stop-color="#009901"/><stop offset=".723" stop-color="#029900"/><stop offset="1" stop-color="#4a9900"/></linearGradient>
<linearGradient id="a7" gradientUnits="userSpaceOnUse" x1="1362" x2="1608"><stop offset="0" stop-color="#009903"/><stop offset=".671" stop-color="#029900"/><stop offset=".931" stop-color="#4e9900"/><stop offset="1" stop-color="#690"/></linearGradient>
<linearGradient id="a8" gradientUnits="userSpaceOnUse" x1="1360" x2="1623"><stop offset="0" stop-color="#009904"/><stop offset=".631" stop-color="#019900"/><stop offset=".875" stop-color="#4d9900"/><stop offset="1" stop-color="#7d9900"/></linearGradient>
<linearGradient id="a9" gradientUnits="userSpaceOnUse" x1="1358" x2="1642"><stop offset="0" stop-color="#009906"/><stop offset=".542" stop-color="#090"/><stop offset=".599" stop-color="#039900"/><stop offset=".824" stop-color="#509900"/><stop offset=".996" stop-color="#999700"/><stop offset="1" stop-color="#999500"/></linearGradient>
<linearGradient id="a10" gradientUnits="userSpaceOnUse" x1="1358" x2="1658"><stop offset="0" stop-color="#009907"/><stop offset=".547" stop-color="#090"/><stop offset=".587" stop-color="#099900"/><stop offset=".793" stop-color="#590"/><stop offset=".943" stop-color="#999700"/><stop offset="1" stop-color="#997e00"/></linearGradient>
<linearGradient id="a11" gradientUnits="userSpaceOnUse" x1="1356" x2="1676"><stop offset="0" stop-color="#009909"/><stop offset=".537" stop-color="#029900"/><stop offset=".734" stop-color="#4e9900"/><stop offset=".887" stop-color="#999800"/><stop offset=".984" stop-color="#996e00"/><stop offset="1" stop-color="#996900"/></linearGradient>
<linearGradient id="a12" gradientUnits="userSpaceOnUse" x1="1356" x2="1693"><stop offset="0" stop-color="#00990a"/><stop offset=".51" stop-color="#029900"/><stop offset=".697" stop-color="#4e9900"/><stop offset=".843" stop-color="#999800"/><stop offset=".935" stop-color="#996e00"/><stop offset="1" stop-color="#995900"/></linearGradient>
<linearGradient id="a13" gradientUnits="userSpaceOnUse" x1="1355" x2="1712"><stop offset="0" stop-color="#00990c"/><stop offset=".487" stop-color="#039900"/><stop offset=".664" stop-color="#4f9900"/><stop offset=".798" stop-color="#999700"/><stop offset=".885" stop-color="#996d00"/><stop offset="1" stop-color="#994b00"/></linearGradient>
<linearGradient id="a14" gradientUnits="userSpaceOnUse" x1="1354" x2="1727"><stop offset="0" stop-color="#00990d"/><stop offset=".469" stop-color="#029902"/><stop offset=".635" stop-color="#4e9900"/><stop offset=".767" stop-color="#999700"/><stop offset=".85" stop-color="#996d00"/><stop offset=".973" stop-color="#994800"/><stop offset="1" stop-color="#994200"/></linearGradient>
<linearGradient id="a15" gradientUnits="userSpaceOnUse" x1="1353" x2="1746"><stop offset="0" stop-color="#00990f"/><stop offset=".448" stop-color="#029904"/><stop offset=".606" stop-color="#4e9900"/><stop offset=".73" stop-color="#999700"/><stop offset=".809" stop-color="#996d00"/><stop offset=".926" stop-color="#994800"/><stop offset="1" stop-color="#993800"/></linearGradient>
<linearGradient id="a16" gradientUnits="userSpaceOnUse" x1="1353" x2="1762"><stop offset="0" stop-color="#009910"/><stop offset=".433" stop-color="#039906"/><stop offset=".584" stop-color="#4f9900"/><stop offset=".702" stop-color="#999600"/><stop offset=".778" stop-color="#996c00"/><stop offset=".89" stop-color="#994700"/><stop offset="1" stop-color="#993100"/></linearGradient>
<linearGradient id="a17" gradientUnits="userSpaceOnUse" x1="1352" x2="1779"><stop offset="0" stop-color="#009912"/><stop offset=".417" stop-color="#029908"/><stop offset=".562" stop-color="#4f9902"/><stop offset=".672" stop-color="#999800"/><stop offset=".742" stop-color="#996e00"/><stop offset=".848" stop-color="#994900"/><stop offset="1" stop-color="#992b00"/></linearGradient>
<linearGradient id="a18" gradientUnits="userSpaceOnUse" x1="1352" x2="1800"><stop offset="0" stop-color="#009914"/><stop offset=".397" stop-color="#02990a"/><stop offset=".533" stop-color="#4e9905"/><stop offset=".641" stop-color="#999700"/><stop offset=".708" stop-color="#996e00"/><stop offset=".808" stop-color="#994800"/><stop offset=".964" stop-color="#992900"/><stop offset="1" stop-color="#992400"/></linearGradient>
<linearGradient id="a19" gradientUnits="userSpaceOnUse" x1="1352" x2="1817"><stop offset="0" stop-color="#009915"/><stop offset=".383" stop-color="#02990c"/><stop offset=".514" stop-color="#4e9907"/><stop offset=".617" stop-color="#999702"/><stop offset=".682" stop-color="#996d00"/><stop offset=".778" stop-color="#994800"/><stop offset=".929" stop-color="#992800"/><stop offset="1" stop-color="#991f00"/></linearGradient>
<linearGradient id="a20" gradientUnits="userSpaceOnUse" x1="1351" x2="1834"><stop offset="0" stop-color="#009917"/><stop offset=".373" stop-color="#02990e"/><stop offset=".499" stop-color="#4f9909"/><stop offset=".596" stop-color="#999705"/><stop offset=".658" stop-color="#996d01"/><stop offset=".752" stop-color="#994800"/><stop offset=".896" stop-color="#992800"/><stop offset="1" stop-color="#991a00"/></linearGradient>
<linearGradient id="a21" gradientUnits="userSpaceOnUse" x1="1351" x2="1851"><stop offset="0" stop-color="#009918"/><stop offset=".36" stop-color="#029910"/><stop offset=".48" stop-color="#4e990c"/><stop offset=".576" stop-color="#999607"/><stop offset=".636" stop-color="#996d03"/><stop offset=".726" stop-color="#994700"/><stop offset=".866" stop-color="#992800"/><stop offset="1" stop-color="#991600"/></linearGradient>
<linearGradient id="a22" gradientUnits="userSpaceOnUse" x1="1351" x2="1868"><stop offset="0" stop-color="#00991a"/><stop offset=".348" stop-color="#029912"/><stop offset=".464" stop-color="#4e990e"/><stop offset=".555" stop-color="#99980a"/><stop offset=".613" stop-color="#996d05"/><stop offset=".698" stop-color="#994801"/><stop offset=".832" stop-color="#992800"/><stop offset="1" stop-color="#991300"/></linearGradient>
<linearGradient id="a23" gradientUnits="userSpaceOnUse" x1="1351" x2="1885"><stop offset="0" stop-color="#00991b"/><stop offset=".339" stop-color="#029914"/><stop offset=".451" stop-color="#4f9911"/><stop offset=".537" stop-color="#99970d"/><stop offset=".594" stop-color="#996d07"/><stop offset=".676" stop-color="#994802"/><stop offset=".805" stop-color="#992800"/><stop offset="1" stop-color="#990f00"/></linearGradient>
<linearGradient id="a24" gradientUnits="userSpaceOnUse" x1="1351" x2="1902"><stop offset="0" stop-color="#00991d"/><stop offset=".328" stop-color="#029916"/><stop offset=".437" stop-color="#4f9913"/><stop offset=".521" stop-color="#99970f"/><stop offset=".574" stop-color="#996e09"/><stop offset=".652" stop-color="#994904"/><stop offset=".775" stop-color="#992900"/><stop offset=".985" stop-color="#990e00"/><stop offset="1" stop-color="#990c00"/></linearGradient>
<linearGradient id="a25" gradientUnits="userSpaceOnUse" x1="1351" x2="1918"><stop offset="0" stop-color="#00991f"/><stop offset=".319" stop-color="#029919"/><stop offset=".423" stop-color="#4d9915"/><stop offset=".506" stop-color="#999712"/><stop offset=".557" stop-color="#996d0b"/><stop offset=".633" stop-color="#994905"/><stop offset=".753" stop-color="#992900"/><stop offset=".958" stop-color="#990e00"/><stop offset="1" stop-color="#990a00"/></linearGradient>
<linearGradient id="a26" gradientUnits="userSpaceOnUse" x1="1351" x2="1939"><stop offset="0" stop-color="#009920"/><stop offset=".31" stop-color="#02991b"/><stop offset=".41" stop-color="#4f9918"/><stop offset=".488" stop-color="#999615"/><stop offset=".537" stop-color="#996d0e"/><stop offset=".611" stop-color="#994807"/><stop offset=".726" stop-color="#992801"/><stop offset=".923" stop-color="#990d00"/><stop offset="1" stop-color="#990700"/></linearGradient>
<linearGradient id="a27" gradientUnits="userSpaceOnUse" x1="1351" x2="1955"><stop offset="0" stop-color="#092"/><stop offset=".301" stop-color="#02991d"/><stop offset=".399" stop-color="#4f991a"/><stop offset=".474" stop-color="#999818"/><stop offset=".522" stop-color="#996e10"/><stop offset=".593" stop-color="#994909"/><stop offset=".704" stop-color="#992903"/><stop offset=".894" stop-color="#990e00"/><stop offset="1" stop-color="#990500"/></linearGradient>
<linearGradient id="a28" gradientUnits="userSpaceOnUse" x1="1352" x2="1971"><stop offset="0" stop-color="#009923"/><stop offset=".292" stop-color="#02991f"/><stop offset=".386" stop-color="#4d991d"/><stop offset=".46" stop-color="#99981b"/><stop offset=".507" stop-color="#996d12"/><stop offset=".577" stop-color="#99480a"/><stop offset=".685" stop-color="#992804"/><stop offset=".871" stop-color="#990d00"/><stop offset="1" stop-color="#990300"/></linearGradient>
<linearGradient id="a29" gradientUnits="userSpaceOnUse" x1="1352" x2="1988"><stop offset="0" stop-color="#009925"/><stop offset=".286" stop-color="#039921"/><stop offset=".377" stop-color="#4f9920"/><stop offset=".448" stop-color="#99971d"/><stop offset=".494" stop-color="#996d14"/><stop offset=".561" stop-color="#99480c"/><stop offset=".667" stop-color="#992805"/><stop offset=".847" stop-color="#990d00"/><stop offset="1" stop-color="#990100"/></linearGradient>
<linearGradient id="a30" gradientUnits="userSpaceOnUse" x1="1352" x2="2006"><stop offset="0" stop-color="#009927"/><stop offset=".278" stop-color="#029924"/><stop offset=".367" stop-color="#4f9922"/><stop offset=".436" stop-color="#999720"/><stop offset=".48" stop-color="#996d16"/><stop offset=".546" stop-color="#99470e"/><stop offset=".648" stop-color="#992806"/><stop offset=".824" stop-color="#990d00"/><stop offset="1" stop-color="#900"/></linearGradient>
<linearGradient id="a31" gradientUnits="userSpaceOnUse" x1="1352" x2="2026"><stop offset="0" stop-color="#009928"/><stop offset=".27" stop-color="#029926"/><stop offset=".356" stop-color="#4f9925"/><stop offset=".423" stop-color="#999623"/><stop offset=".466" stop-color="#996c19"/><stop offset=".53" stop-color="#99470f"/><stop offset=".629" stop-color="#992707"/><stop offset=".8" stop-color="#990d01"/><stop offset=".99" stop-color="#900"/><stop offset="1" stop-color="#900"/></linearGradient>
<linearGradient id="a32" gradientUnits="userSpaceOnUse" x1="1353" x2="2038"><stop offset="0" stop-color="#00992a"/><stop offset=".266" stop-color="#039928"/><stop offset=".349" stop-color="#4f9927"/><stop offset=".413" stop-color="#999826"/><stop offset=".454" stop-color="#996e1b"/><stop offset=".515" stop-color="#994911"/><stop offset=".612" stop-color="#992909"/><stop offset=".775" stop-color="#990e02"/><stop offset=".968" stop-color="#900"/><stop offset="1" stop-color="#900"/></linearGradient>
<linearGradient id="a33" gradientUnits="userSpaceOnUse" x1="1353" x2="2057"><stop offset="0" stop-color="#00992c"/><stop offset=".259" stop-color="#02992b"/><stop offset=".339" stop-color="#4f992a"/><stop offset=".402" stop-color="#999829"/><stop offset=".442" stop-color="#996e1e"/><stop offset=".501" stop-color="#994813"/><stop offset=".595" stop-color="#99280a"/><stop offset=".754" stop-color="#990d03"/><stop offset=".939" stop-color="#900"/><stop offset="1" stop-color="#900"/></linearGradient>
<linearGradient id="a34" gradientUnits="userSpaceOnUse" x1="1353" x2="2076"><stop offset="0" stop-color="#00992d"/><stop offset=".252" stop-color="#02992d"/><stop offset=".331" stop-color="#4f992d"/><stop offset=".391" stop-color="#99972c"/><stop offset=".43" stop-color="#996d20"/><stop offset=".488" stop-color="#994815"/><stop offset=".58" stop-color="#99280b"/><stop offset=".734" stop-color="#990d04"/><stop offset=".913" stop-color="#900"/><stop offset="1" stop-color="#900"/></linearGradient>
<linearGradient id="a35" gradientUnits="userSpaceOnUse" x1="1354" x2="2092"><stop offset="0" stop-color="#00992f"/><stop offset=".245" stop-color="#02992f"/><stop offset=".321" stop-color="#4d9930"/><stop offset=".382" stop-color="#99972f"/><stop offset=".42" stop-color="#996d22"/><stop offset=".476" stop-color="#994817"/><stop offset=".564" stop-color="#99280d"/><stop offset=".714" stop-color="#990d04"/><stop offset=".889" stop-color="#900"/><stop offset="1" stop-color="#900"/></linearGradient>
<linearGradient id="a36" gradientUnits="userSpaceOnUse" x1="1354" x2="2111"><stop offset="0" stop-color="#009931"/><stop offset=".24" stop-color="#029932"/><stop offset=".314" stop-color="#4e9932"/><stop offset=".373" stop-color="#999732"/><stop offset=".41" stop-color="#996d24"/><stop offset=".464" stop-color="#994818"/><stop offset=".55" stop-color="#99280e"/><stop offset=".696" stop-color="#990d05"/><stop offset=".864" stop-color="#900"/><stop offset="1" stop-color="#900"/></linearGradient>
<linearGradient id="a37" gradientUnits="userSpaceOnUse" x1="1354" x2="2127"><stop offset="0" stop-color="#093"/><stop offset=".235" stop-color="#029934"/><stop offset=".308" stop-color="#4e9935"/><stop offset=".364" stop-color="#999836"/><stop offset=".398" stop-color="#996f28"/><stop offset=".45" stop-color="#994a1b"/><stop offset=".532" stop-color="#992910"/><stop offset=".67" stop-color="#990e07"/><stop offset=".841" stop-color="#990001"/><stop offset="1" stop-color="#900"/></linearGradient>
<linearGradient id="a38" gradientUnits="userSpaceOnUse" x1="1355" x2="2146"><stop offset="0" stop-color="#009934"/><stop offset=".229" stop-color="#029937"/><stop offset=".3" stop-color="#4e9938"/><stop offset=".354" stop-color="#999839"/><stop offset=".388" stop-color="#996e2a"/><stop offset=".439" stop-color="#99491d"/><stop offset=".518" stop-color="#992911"/><stop offset=".654" stop-color="#990e07"/><stop offset=".819" stop-color="#990002"/><stop offset="1" stop-color="#900"/></linearGradient>
<linearGradient id="a39" gradientUnits="userSpaceOnUse" x1="1355" x2="2165"><stop offset="0" stop-color="#009936"/><stop offset=".225" stop-color="#029939"/><stop offset=".293" stop-color="#4e993b"/><stop offset=".346" stop-color="#99973c"/><stop offset=".379" stop-color="#996e2c"/><stop offset=".428" stop-color="#99491e"/><stop offset=".506" stop-color="#992912"/><stop offset=".638" stop-color="#990e08"/><stop offset=".798" stop-color="#990002"/><stop offset="1" stop-color="#900"/></linearGradient>
<linearGradient id="a40" gradientUnits="userSpaceOnUse" x1="1355" x2="2181"><stop offset="0" stop-color="#009938"/><stop offset=".22" stop-color="#02993c"/><stop offset=".287" stop-color="#4e993e"/><stop offset=".339" stop-color="#99973f"/><stop offset=".372" stop-color="#996d2f"/><stop offset=".42" stop-color="#994920"/><stop offset=".496" stop-color="#992914"/><stop offset=".626" stop-color="#990e09"/><stop offset=".78" stop-color="#990003"/><stop offset="1" stop-color="#900"/></linearGradient>
<linearGradient id="a41" gradientUnits="userSpaceOnUse" x1="1356" x2="2198"><stop offset="0" stop-color="#00993a"/><stop offset=".215" stop-color="#02993e"/><stop offset=".28" stop-color="#4e9941"/><stop offset=".331" stop-color="#999742"/><stop offset=".363" stop-color="#996d31"/><stop offset=".411" stop-color="#994822"/><stop offset=".486" stop-color="#992815"/><stop offset=".614" stop-color="#990d0a"/><stop offset=".762" stop-color="#990004"/><stop offset="1" stop-color="#900"/></linearGradient>
<linearGradient id="a42" gradientUnits="userSpaceOnUse" x1="1356" x2="2198"><stop offset="0" stop-color="#00993b"/><stop offset=".216" stop-color="#029941"/><stop offset=".28" stop-color="#4e9944"/><stop offset=".33" stop-color="#999846"/><stop offset=".362" stop-color="#996e34"/><stop offset=".41" stop-color="#994824"/><stop offset=".485" stop-color="#992816"/><stop offset=".612" stop-color="#990d0b"/><stop offset=".76" stop-color="#990004"/><stop offset="1" stop-color="#900"/></linearGradient>
<linearGradient id="a43" gradientUnits="userSpaceOnUse" x1="1357" x2="2198"><stop offset="0" stop-color="#00993d"/><stop offset=".215" stop-color="#029943"/><stop offset=".279" stop-color="#4e9946"/><stop offset=".329" stop-color="#999849"/><stop offset=".361" stop-color="#996d36"/><stop offset=".409" stop-color="#994826"/><stop offset=".484" stop-color="#992818"/><stop offset=".611" stop-color="#990d0c"/><stop offset=".757" stop-color="#990005"/><stop offset="1" stop-color="#900"/></linearGradient>
<linearGradient id="a44" gradientUnits="userSpaceOnUse" x1="1357" x2="2198"><stop offset="0" stop-color="#00993f"/><stop offset=".215" stop-color="#029946"/><stop offset=".279" stop-color="#4e9949"/><stop offset=".329" stop-color="#99974c"/><stop offset=".361" stop-color="#996d39"/><stop offset=".409" stop-color="#994828"/><stop offset=".484" stop-color="#992819"/><stop offset=".611" stop-color="#990d0d"/><stop offset=".755" stop-color="#990006"/><stop offset="1" stop-color="#900"/></linearGradient>
<linearGradient id="a45" gradientUnits="userSpaceOnUse" x1="1358" x2="2198"><stop offset="0" stop-color="#009941"/><stop offset=".215" stop-color="#039949"/><stop offset=".279" stop-color="#4e994c"/><stop offset=".329" stop-color="#99974f"/><stop offset=".36" stop-color="#996e3c"/><stop offset=".406" stop-color="#99492a"/><stop offset=".479" stop-color="#99291b"/><stop offset=".602" stop-color="#990e0e"/><stop offset=".751" stop-color="#990007"/><stop offset="1" stop-color="#900"/></linearGradient>
<linearGradient id="a46" gradientUnits="userSpaceOnUse" x1="1359" x2="2198"><stop offset="0" stop-color="#009943"/><stop offset=".215" stop-color="#02994b"/><stop offset=".278" stop-color="#4e9950"/><stop offset=".328" stop-color="#999753"/><stop offset=".359" stop-color="#996d3e"/><stop offset=".405" stop-color="#99482c"/><stop offset=".478" stop-color="#99281c"/><stop offset=".602" stop-color="#990e0f"/><stop offset=".749" stop-color="#990007"/><stop offset="1" stop-color="#990001"/></linearGradient>
<linearGradient id="a47" gradientUnits="userSpaceOnUse" x1="1359" x2="2198"><stop offset="0" stop-color="#009945"/><stop offset=".215" stop-color="#02994e"/><stop offset=".278" stop-color="#4e9953"/><stop offset=".327" stop-color="#999857"/><stop offset=".358" stop-color="#996e41"/><stop offset=".403" stop-color="#99492f"/><stop offset=".474" stop-color="#99291e"/><stop offset=".596" stop-color="#990e10"/><stop offset=".745" stop-color="#990008"/><stop offset="1" stop-color="#990001"/></linearGradient>
<linearGradient id="a48" gradientUnits="userSpaceOnUse" x1="1360" x2="2198"><stop offset="0" stop-color="#009946"/><stop offset=".215" stop-color="#039951"/><stop offset=".278" stop-color="#509956"/><stop offset=".326" stop-color="#99985a"/><stop offset=".357" stop-color="#996e44"/><stop offset=".402" stop-color="#994930"/><stop offset=".474" stop-color="#992920"/><stop offset=".595" stop-color="#990e11"/><stop offset=".742" stop-color="#990009"/><stop offset="1" stop-color="#990002"/></linearGradient>
<linearGradient id="a49" gradientUnits="userSpaceOnUse" x1="1360" x2="2198"><stop offset="0" stop-color="#009948"/><stop offset=".215" stop-color="#029954"/><stop offset=".277" stop-color="#4e9959"/><stop offset=".326" stop-color="#99985d"/><stop offset=".357" stop-color="#996d46"/><stop offset=".402" stop-color="#994932"/><stop offset=".474" stop-color="#992921"/><stop offset=".595" stop-color="#990e12"/><stop offset=".741" stop-color="#99000a"/><stop offset="1" stop-color="#990002"/></linearGradient>
<linearGradient id="a50" gradientUnits="userSpaceOnUse" x1="1361" x2="2198"><stop offset="0" stop-color="#00994a"/><stop offset=".214" stop-color="#029956"/><stop offset=".276" stop-color="#4e995c"/><stop offset=".325" stop-color="#999761"/><stop offset=".356" stop-color="#996d49"/><stop offset=".401" stop-color="#994834"/><stop offset=".473" stop-color="#992822"/><stop offset=".595" stop-color="#990d13"/><stop offset=".738" stop-color="#99000a"/><stop offset="1" stop-color="#990002"/></linearGradient>
<linearGradient id="a51" gradientUnits="userSpaceOnUse" x1="1361" x2="2198"><stop offset="0" stop-color="#00994c"/><stop offset=".214" stop-color="#019959"/><stop offset=".276" stop-color="#4e995f"/><stop offset=".325" stop-color="#999764"/><stop offset=".356" stop-color="#996d4c"/><stop offset=".401" stop-color="#994836"/><stop offset=".473" stop-color="#992824"/><stop offset=".596" stop-color="#990d14"/><stop offset=".736" stop-color="#99000b"/><stop offset="1" stop-color="#990003"/></linearGradient>
<linearGradient id="a52" gradientUnits="userSpaceOnUse" x1="1362" x2="2198"><stop offset="0" stop-color="#00994e"/><stop offset=".214" stop-color="#02995c"/><stop offset=".275" stop-color="#4e9963"/><stop offset=".324" stop-color="#999667"/><stop offset=".355" stop-color="#996c4e"/><stop offset=".401" stop-color="#994738"/><stop offset=".472" stop-color="#992825"/><stop offset=".596" stop-color="#990d15"/><stop offset=".733" stop-color="#99000c"/><stop offset="1" stop-color="#990003"/></linearGradient>
<linearGradient id="a53" gradientUnits="userSpaceOnUse" x1="1362" x2="2198"><stop offset="0" stop-color="#009950"/><stop offset=".214" stop-color="#02995f"/><stop offset=".275" stop-color="#4e9966"/><stop offset=".323" stop-color="#99986c"/><stop offset=".353" stop-color="#996e52"/><stop offset=".397" stop-color="#99493b"/><stop offset=".467" stop-color="#992928"/><stop offset=".585" stop-color="#990e17"/><stop offset=".73" stop-color="#99000d"/><stop offset="1" stop-color="#990004"/></linearGradient>
<linearGradient id="a54" gradientUnits="userSpaceOnUse" x1="1363" x2="2198"><stop offset="0" stop-color="#009952"/><stop offset=".213" stop-color="#019962"/><stop offset=".274" stop-color="#4e9969"/><stop offset=".322" stop-color="#999870"/><stop offset=".352" stop-color="#996e55"/><stop offset=".396" stop-color="#99493d"/><stop offset=".466" stop-color="#992929"/><stop offset=".584" stop-color="#990e18"/><stop offset=".727" stop-color="#99000d"/><stop offset="1" stop-color="#990004"/></linearGradient>
<linearGradient id="a55" gradientUnits="userSpaceOnUse" x1="1363" x2="2198"><stop offset="0" stop-color="#009954"/><stop offset=".214" stop-color="#029965"/><stop offset=".275" stop-color="#4f996d"/><stop offset=".322" stop-color="#999773"/><stop offset=".352" stop-color="#996d58"/><stop offset=".396" stop-color="#99483f"/><stop offset=".466" stop-color="#99292a"/><stop offset=".584" stop-color="#990e19"/><stop offset=".725" stop-color="#99000e"/><stop offset="1" stop-color="#990005"/></linearGradient>
<linearGradient id="a56" gradientUnits="userSpaceOnUse" x1="1364" x2="2198"><stop offset="0" stop-color="#009956"/><stop offset=".213" stop-color="#029968"/><stop offset=".273" stop-color="#4d9970"/><stop offset=".321" stop-color="#999777"/><stop offset=".351" stop-color="#996d5a"/><stop offset=".396" stop-color="#994841"/><stop offset=".465" stop-color="#99282c"/><stop offset=".584" stop-color="#990d1a"/><stop offset=".722" stop-color="#99000f"/><stop offset="1" stop-color="#990005"/></linearGradient>
<linearGradient id="a57" gradientUnits="userSpaceOnUse" x1="1364" x2="2198"><stop offset="0" stop-color="#009958"/><stop offset=".213" stop-color="#02996b"/><stop offset=".273" stop-color="#4d9973"/><stop offset=".321" stop-color="#99967a"/><stop offset=".351" stop-color="#996d5d"/><stop offset=".396" stop-color="#994843"/><stop offset=".465" stop-color="#99282d"/><stop offset=".584" stop-color="#990d1b"/><stop offset=".721" stop-color="#990010"/><stop offset="1" stop-color="#990005"/></linearGradient>
<linearGradient id="a58" gradientUnits="userSpaceOnUse" x1="1365" x2="2198"><stop offset="0" stop-color="#00995a"/><stop offset=".214" stop-color="#02996e"/><stop offset=".274" stop-color="#4f9977"/><stop offset=".319" stop-color="#99987f"/><stop offset=".348" stop-color="#996f62"/><stop offset=".391" stop-color="#994a47"/><stop offset=".459" stop-color="#992a30"/><stop offset=".574" stop-color="#990e1d"/><stop offset=".715" stop-color="#901"/><stop offset="1" stop-color="#990006"/></linearGradient>
<linearGradient id="a59" gradientUnits="userSpaceOnUse" x1="1365" x2="2198"><stop offset="0" stop-color="#00995c"/><stop offset=".214" stop-color="#029971"/><stop offset=".273" stop-color="#4d997a"/><stop offset=".319" stop-color="#999883"/><stop offset=".348" stop-color="#996e64"/><stop offset=".391" stop-color="#994949"/><stop offset=".459" stop-color="#992932"/><stop offset=".574" stop-color="#990e1e"/><stop offset=".713" stop-color="#990012"/><stop offset="1" stop-color="#990006"/></linearGradient>
<linearGradient id="a60" gradientUnits="userSpaceOnUse" x1="1366" x2="2198"><stop offset="0" stop-color="#00995e"/><stop offset=".213" stop-color="#029974"/><stop offset=".272" stop-color="#4d997e"/><stop offset=".319" stop-color="#999787"/><stop offset=".347" stop-color="#996e67"/><stop offset=".391" stop-color="#99494b"/><stop offset=".458" stop-color="#992933"/><stop offset=".573" stop-color="#990e1e"/><stop offset=".71" stop-color="#990012"/><stop offset="1" stop-color="#990007"/></linearGradient>
<linearGradient id="a61" gradientUnits="userSpaceOnUse" x1="1367" x2="2198"><stop offset="0" stop-color="#009961"/><stop offset=".213" stop-color="#039977"/><stop offset=".272" stop-color="#4f9982"/><stop offset=".318" stop-color="#99978a"/><stop offset=".347" stop-color="#996d6a"/><stop offset=".39" stop-color="#99484d"/><stop offset=".457" stop-color="#992834"/><stop offset=".573" stop-color="#990d1f"/><stop offset=".709" stop-color="#990013"/><stop offset="1" stop-color="#990007"/></linearGradient>
<linearGradient id="a62" gradientUnits="userSpaceOnUse" x1="1367" x2="2197"><stop offset="0" stop-color="#009963"/><stop offset=".213" stop-color="#02997b"/><stop offset=".272" stop-color="#4f9986"/><stop offset=".318" stop-color="#99968e"/><stop offset=".347" stop-color="#996d6d"/><stop offset=".39" stop-color="#99484f"/><stop offset=".458" stop-color="#992836"/><stop offset=".573" stop-color="#990d20"/><stop offset=".707" stop-color="#990014"/><stop offset="1" stop-color="#990008"/></linearGradient>
<linearGradient id="a63" gradientUnits="userSpaceOnUse" x1="1368" x2="2195"><stop offset="0" stop-color="#009965"/><stop offset=".213" stop-color="#02997e"/><stop offset=".271" stop-color="#4d9989"/><stop offset=".317" stop-color="#999894"/><stop offset=".346" stop-color="#996e71"/><stop offset=".388" stop-color="#994953"/><stop offset=".455" stop-color="#992938"/><stop offset=".568" stop-color="#990e22"/><stop offset=".705" stop-color="#990015"/><stop offset="1" stop-color="#990008"/></linearGradient>
<linearGradient id="a64" gradientUnits="userSpaceOnUse" x1="1368" x2="2193"><stop offset="0" stop-color="#009967"/><stop offset=".215" stop-color="#039981"/><stop offset=".273" stop-color="#4f998d"/><stop offset=".318" stop-color="#999898"/><stop offset=".347" stop-color="#996d74"/><stop offset=".389" stop-color="#994955"/><stop offset=".456" stop-color="#99293a"/><stop offset=".57" stop-color="#990e23"/><stop offset=".704" stop-color="#990016"/><stop offset="1" stop-color="#990009"/></linearGradient>
<linearGradient id="a65" gradientUnits="userSpaceOnUse" x1="1369" x2="2191"><stop offset="0" stop-color="#009969"/><stop offset=".214" stop-color="#029984"/><stop offset=".273" stop-color="#4f9991"/><stop offset=".316" stop-color="#959599"/><stop offset=".325" stop-color="#998b90"/><stop offset=".356" stop-color="#99636e"/><stop offset=".404" stop-color="#993f4f"/><stop offset=".481" stop-color="#992135"/><stop offset=".614" stop-color="#99071f"/><stop offset=".715" stop-color="#990016"/><stop offset="1" stop-color="#990009"/></linearGradient>
<linearGradient id="a66" gradientUnits="userSpaceOnUse" x1="1370" x2="2189"><stop offset="0" stop-color="#00996b"/><stop offset=".211" stop-color="#009987"/><stop offset=".264" stop-color="#429992"/><stop offset=".304" stop-color="#7f9599"/><stop offset=".322" stop-color="#998e98"/><stop offset=".353" stop-color="#996674"/><stop offset=".399" stop-color="#994254"/><stop offset=".473" stop-color="#992338"/><stop offset=".601" stop-color="#990921"/><stop offset=".709" stop-color="#990017"/><stop offset="1" stop-color="#99000a"/></linearGradient>
<linearGradient id="a67" gradientUnits="userSpaceOnUse" x1="1370" x2="2187"><stop offset="0" stop-color="#00996e"/><stop offset=".208" stop-color="#00998a"/><stop offset=".217" stop-color="#04998b"/><stop offset=".274" stop-color="#509999"/><stop offset=".326" stop-color="#998a98"/><stop offset=".357" stop-color="#996273"/><stop offset=".405" stop-color="#993e53"/><stop offset=".482" stop-color="#992038"/><stop offset=".618" stop-color="#990620"/><stop offset=".716" stop-color="#990018"/><stop offset="1" stop-color="#99000a"/></linearGradient>
<linearGradient id="a68" gradientUnits="userSpaceOnUse" x1="1371" x2="2185"><stop offset="0" stop-color="#009970"/><stop offset=".205" stop-color="#00998d"/><stop offset=".216" stop-color="#04998f"/><stop offset=".273" stop-color="#4d9699"/><stop offset=".328" stop-color="#998598"/><stop offset=".361" stop-color="#995e73"/><stop offset=".412" stop-color="#993b52"/><stop offset=".493" stop-color="#991d37"/><stop offset=".638" stop-color="#99041f"/><stop offset=".748" stop-color="#990016"/><stop offset="1" stop-color="#99000b"/></linearGradient>
<linearGradient id="a69" gradientUnits="userSpaceOnUse" x1="1372" x2="2183"><stop offset="0" stop-color="#009972"/><stop offset=".202" stop-color="#00998f"/><stop offset=".216" stop-color="#039992"/><stop offset=".261" stop-color="#3c9599"/><stop offset=".33" stop-color="#998198"/><stop offset=".365" stop-color="#995a72"/><stop offset=".418" stop-color="#993751"/><stop offset=".504" stop-color="#991a35"/><stop offset=".66" stop-color="#99011e"/><stop offset=".995" stop-color="#99000b"/><stop offset="1" stop-color="#99000b"/></linearGradient>
<linearGradient id="a70" gradientUnits="userSpaceOnUse" x1="1373" x2="2181"><stop offset="0" stop-color="#009975"/><stop offset=".199" stop-color="#009992"/><stop offset=".215" stop-color="#039996"/><stop offset=".271" stop-color="#478f99"/><stop offset=".333" stop-color="#997d98"/><stop offset=".369" stop-color="#995672"/><stop offset=".423" stop-color="#993451"/><stop offset=".514" stop-color="#991735"/><stop offset=".675" stop-color="#99001e"/><stop offset="1" stop-color="#99000c"/></linearGradient>
<linearGradient id="a71" gradientUnits="userSpaceOnUse" x1="1373" x2="2179"><stop offset="0" stop-color="#097"/><stop offset=".196" stop-color="#009995"/><stop offset=".216" stop-color="#029999"/><stop offset=".325" stop-color="#8b7d99"/><stop offset=".337" stop-color="#997896"/><stop offset=".375" stop-color="#995270"/><stop offset=".433" stop-color="#99304f"/><stop offset=".53" stop-color="#991433"/><stop offset=".684" stop-color="#99001e"/><stop offset="1" stop-color="#99000c"/></linearGradient>
<linearGradient id="a72" gradientUnits="userSpaceOnUse" x1="1374" x2="2177"><stop offset="0" stop-color="#009979"/><stop offset=".193" stop-color="#009997"/><stop offset=".215" stop-color="#029599"/><stop offset=".328" stop-color="#8b7999"/><stop offset=".34" stop-color="#997496"/><stop offset=".379" stop-color="#994e70"/><stop offset=".438" stop-color="#992e4f"/><stop offset=".538" stop-color="#991232"/><stop offset=".686" stop-color="#99001e"/><stop offset="1" stop-color="#99000d"/></linearGradient>
<linearGradient id="a73" gradientUnits="userSpaceOnUse" x1="1375" x2="2176"><stop offset="0" stop-color="#00997c"/><stop offset=".196" stop-color="#009699"/><stop offset=".216" stop-color="#039299"/><stop offset=".33" stop-color="#8b7699"/><stop offset=".342" stop-color="#997096"/><stop offset=".381" stop-color="#994c70"/><stop offset=".441" stop-color="#992c4f"/><stop offset=".541" stop-color="#913"/><stop offset=".687" stop-color="#99001f"/><stop offset="1" stop-color="#99000d"/></linearGradient>
<linearGradient id="a74" gradientUnits="userSpaceOnUse" x1="1375" x2="2174"><stop offset="0" stop-color="#00997e"/><stop offset=".181" stop-color="#009699"/><stop offset=".217" stop-color="#028f99"/><stop offset=".333" stop-color="#8c7299"/><stop offset=".345" stop-color="#996d96"/><stop offset=".385" stop-color="#994970"/><stop offset=".447" stop-color="#992a4f"/><stop offset=".549" stop-color="#991033"/><stop offset=".69" stop-color="#990020"/><stop offset="1" stop-color="#99000e"/></linearGradient>
<linearGradient id="a75" gradientUnits="userSpaceOnUse" x1="1376" x2="2172"><stop offset="0" stop-color="#009980"/><stop offset=".167" stop-color="#009699"/><stop offset=".216" stop-color="#028c99"/><stop offset=".334" stop-color="#8a6f99"/><stop offset=".348" stop-color="#996a96"/><stop offset=".388" stop-color="#994771"/><stop offset=".451" stop-color="#99284f"/><stop offset=".555" stop-color="#990f33"/><stop offset=".69" stop-color="#990021"/><stop offset="1" stop-color="#99000f"/></linearGradient>
<linearGradient id="a76" gradientUnits="userSpaceOnUse" x1="1377" x2="2170"><stop offset="0" stop-color="#009983"/><stop offset=".151" stop-color="#009699"/><stop offset=".217" stop-color="#038899"/><stop offset=".338" stop-color="#8c6b99"/><stop offset=".351" stop-color="#996696"/><stop offset=".392" stop-color="#994470"/><stop offset=".456" stop-color="#99264f"/><stop offset=".564" stop-color="#990d33"/><stop offset=".691" stop-color="#990021"/><stop offset="1" stop-color="#99000f"/></linearGradient>
<linearGradient id="a77" gradientUnits="userSpaceOnUse" x1="1378" x2="2168"><stop offset="0" stop-color="#009985"/><stop offset=".135" stop-color="#009699"/><stop offset=".216" stop-color="#028599"/><stop offset=".339" stop-color="#8b6899"/><stop offset=".353" stop-color="#996397"/><stop offset=".395" stop-color="#994271"/><stop offset=".459" stop-color="#99254f"/><stop offset=".567" stop-color="#990c33"/><stop offset=".691" stop-color="#902"/><stop offset="1" stop-color="#990010"/></linearGradient>
<linearGradient id="a78" gradientUnits="userSpaceOnUse" x1="1379" x2="2166"><stop offset="0" stop-color="#098"/><stop offset=".121" stop-color="#009699"/><stop offset=".216" stop-color="#028399"/><stop offset=".342" stop-color="#8b6599"/><stop offset=".356" stop-color="#996097"/><stop offset=".399" stop-color="#993f70"/><stop offset=".465" stop-color="#99234f"/><stop offset=".576" stop-color="#990b33"/><stop offset=".691" stop-color="#990023"/><stop offset="1" stop-color="#990010"/></linearGradient>
<linearGradient id="a79" gradientUnits="userSpaceOnUse" x1="1379" x2="2164"><stop offset="0" stop-color="#00998a"/><stop offset=".106" stop-color="#009699"/><stop offset=".218" stop-color="#038099"/><stop offset=".345" stop-color="#8b6299"/><stop offset=".359" stop-color="#995d97"/><stop offset=".403" stop-color="#993d71"/><stop offset=".47" stop-color="#99214f"/><stop offset=".582" stop-color="#990a33"/><stop offset=".692" stop-color="#990024"/><stop offset="1" stop-color="#901"/></linearGradient>
<linearGradient id="a80" gradientUnits="userSpaceOnUse" x1="1380" x2="2162"><stop offset="0" stop-color="#00998d"/><stop offset=".091" stop-color="#009699"/><stop offset=".217" stop-color="#027d99"/><stop offset=".348" stop-color="#8b5f99"/><stop offset=".362" stop-color="#995a97"/><stop offset=".407" stop-color="#993b70"/><stop offset=".476" stop-color="#99204f"/><stop offset=".591" stop-color="#990833"/><stop offset=".693" stop-color="#990025"/><stop offset="1" stop-color="#901"/></linearGradient>
<linearGradient id="a81" gradientUnits="userSpaceOnUse" x1="1381" x2="2160"><stop offset="0" stop-color="#009990"/><stop offset=".077" stop-color="#009699"/><stop offset=".217" stop-color="#027a99"/><stop offset=".35" stop-color="#8b5c99"/><stop offset=".365" stop-color="#995797"/><stop offset=".409" stop-color="#993971"/><stop offset=".48" stop-color="#991e4f"/><stop offset=".597" stop-color="#990733"/><stop offset=".694" stop-color="#990026"/><stop offset="1" stop-color="#990012"/></linearGradient>
<linearGradient id="a82" gradientUnits="userSpaceOnUse" x1="1382" x2="2158"><stop offset="0" stop-color="#009992"/><stop offset=".064" stop-color="#009599"/><stop offset=".218" stop-color="#027899"/><stop offset=".353" stop-color="#8c5999"/><stop offset=".367" stop-color="#995597"/><stop offset=".414" stop-color="#993770"/><stop offset=".486" stop-color="#991c4f"/><stop offset=".606" stop-color="#990633"/><stop offset=".7" stop-color="#990026"/><stop offset="1" stop-color="#990012"/></linearGradient>
<linearGradient id="a83" gradientUnits="userSpaceOnUse" x1="1382" x2="2156"><stop offset="0" stop-color="#009995"/><stop offset=".062" stop-color="#009399"/><stop offset=".218" stop-color="#027599"/><stop offset=".357" stop-color="#8c5799"/><stop offset=".371" stop-color="#995297"/><stop offset=".417" stop-color="#993571"/><stop offset=".49" stop-color="#991b50"/><stop offset=".61" stop-color="#990533"/><stop offset=".703" stop-color="#990027"/><stop offset="1" stop-color="#990013"/></linearGradient>
<linearGradient id="a84" gradientUnits="userSpaceOnUse" x1="1383" x2="2154"><stop offset="0" stop-color="#009998"/><stop offset=".218" stop-color="#027399"/><stop offset=".358" stop-color="#8b5499"/><stop offset=".374" stop-color="#994f97"/><stop offset=".422" stop-color="#993371"/><stop offset=".495" stop-color="#991a4f"/><stop offset=".619" stop-color="#990433"/><stop offset=".72" stop-color="#990026"/><stop offset="1" stop-color="#990014"/></linearGradient>
<linearGradient id="a85" gradientUnits="userSpaceOnUse" x1="1384" x2="2152"><stop offset="0" stop-color="#009899"/><stop offset=".219" stop-color="#027099"/><stop offset=".362" stop-color="#8c5199"/><stop offset=".378" stop-color="#994c96"/><stop offset=".427" stop-color="#99306f"/><stop offset=".504" stop-color="#99174e"/><stop offset=".632" stop-color="#990332"/><stop offset=".868" stop-color="#99001b"/><stop offset="1" stop-color="#990014"/></linearGradient>
<linearGradient id="a86" gradientUnits="userSpaceOnUse" x1="1385" x2="2150"><stop offset="0" stop-color="#009599"/><stop offset=".218" stop-color="#026e99"/><stop offset=".363" stop-color="#8b4f99"/><stop offset=".379" stop-color="#994b97"/><stop offset=".429" stop-color="#992f71"/><stop offset=".506" stop-color="#99174f"/><stop offset=".634" stop-color="#990233"/><stop offset=".871" stop-color="#99001c"/><stop offset="1" stop-color="#990015"/></linearGradient>
<linearGradient id="a87" gradientUnits="userSpaceOnUse" x1="1385" x2="2148"><stop offset="0" stop-color="#009399"/><stop offset=".219" stop-color="#026c99"/><stop offset=".367" stop-color="#8b4d99"/><stop offset=".384" stop-color="#994796"/><stop offset=".435" stop-color="#992c70"/><stop offset=".514" stop-color="#99154e"/><stop offset=".645" stop-color="#990132"/><stop offset=".889" stop-color="#99001b"/><stop offset="1" stop-color="#990015"/></linearGradient>
<linearGradient id="a88" gradientUnits="userSpaceOnUse" x1="1386" x2="2146"><stop offset="0" stop-color="#009099"/><stop offset=".22" stop-color="#026a99"/><stop offset=".37" stop-color="#8b4a99"/><stop offset=".387" stop-color="#994596"/><stop offset=".439" stop-color="#992a6f"/><stop offset=".52" stop-color="#99134e"/><stop offset=".654" stop-color="#990032"/><stop offset=".904" stop-color="#99001b"/><stop offset="1" stop-color="#990016"/></linearGradient>
<linearGradient id="a89" gradientUnits="userSpaceOnUse" x1="1387" x2="2144"><stop offset="0" stop-color="#008d99"/><stop offset=".219" stop-color="#026899"/><stop offset=".373" stop-color="#8b4899"/><stop offset=".39" stop-color="#994396"/><stop offset=".443" stop-color="#992970"/><stop offset=".524" stop-color="#99124e"/><stop offset=".661" stop-color="#990032"/><stop offset=".913" stop-color="#99001b"/><stop offset="1" stop-color="#990017"/></linearGradient>
<linearGradient id="a90" gradientUnits="userSpaceOnUse" x1="1387" x2="2142"><stop offset="0" stop-color="#008b99"/><stop offset=".22" stop-color="#026699"/><stop offset=".375" stop-color="#8a4699"/><stop offset=".393" stop-color="#994196"/><stop offset=".448" stop-color="#99276f"/><stop offset=".531" stop-color="#99114e"/><stop offset=".668" stop-color="#990032"/><stop offset=".923" stop-color="#99001b"/><stop offset="1" stop-color="#990017"/></linearGradient>
<linearGradient id="a91" gradientUnits="userSpaceOnUse" x1="1388" x2="2140"><stop offset="0" stop-color="#008999"/><stop offset=".221" stop-color="#026399"/><stop offset=".379" stop-color="#8c4499"/><stop offset=".396" stop-color="#993e96"/><stop offset=".451" stop-color="#992670"/><stop offset=".536" stop-color="#99104e"/><stop offset=".668" stop-color="#903"/><stop offset=".92" stop-color="#99001c"/><stop offset="1" stop-color="#990018"/></linearGradient>
<linearGradient id="a92" gradientUnits="userSpaceOnUse" x1="1389" x2="2139"><stop offset="0" stop-color="#008699"/><stop offset=".22" stop-color="#026299"/><stop offset=".38" stop-color="#8b4299"/><stop offset=".399" stop-color="#993c96"/><stop offset=".455" stop-color="#99246f"/><stop offset=".541" stop-color="#990e4e"/><stop offset=".668" stop-color="#990034"/><stop offset=".919" stop-color="#99001d"/><stop offset="1" stop-color="#990018"/></linearGradient>
<linearGradient id="a93" gradientUnits="userSpaceOnUse" x1="1390" x2="2137"><stop offset="0" stop-color="#008499"/><stop offset=".221" stop-color="#035f99"/><stop offset=".384" stop-color="#8c3f99"/><stop offset=".402" stop-color="#993a96"/><stop offset=".458" stop-color="#992270"/><stop offset=".545" stop-color="#990e4f"/><stop offset=".668" stop-color="#990035"/><stop offset=".916" stop-color="#99001e"/><stop offset="1" stop-color="#990019"/></linearGradient>
<linearGradient id="a94" gradientUnits="userSpaceOnUse" x1="1391" x2="2135"><stop offset="0" stop-color="#008299"/><stop offset=".22" stop-color="#025e99"/><stop offset=".386" stop-color="#8b3e99"/><stop offset=".405" stop-color="#993896"/><stop offset=".462" stop-color="#992170"/><stop offset=".551" stop-color="#990c4e"/><stop offset=".668" stop-color="#990037"/><stop offset=".914" stop-color="#99001f"/><stop offset="1" stop-color="#99001a"/></linearGradient>
<linearGradient id="a95" gradientUnits="userSpaceOnUse" x1="1392" x2="2133"><stop offset="0" stop-color="#008099"/><stop offset=".22" stop-color="#025c99"/><stop offset=".389" stop-color="#8b3c99"/><stop offset=".408" stop-color="#993796"/><stop offset=".466" stop-color="#991f70"/><stop offset=".556" stop-color="#990b4e"/><stop offset=".668" stop-color="#990038"/><stop offset=".911" stop-color="#99001f"/><stop offset="1" stop-color="#99001a"/></linearGradient>
<linearGradient id="a96" gradientUnits="userSpaceOnUse" x1="1393" x2="2131"><stop offset="0" stop-color="#007e99"/><stop offset=".221" stop-color="#035a99"/><stop offset=".392" stop-color="#8b3a99"/><stop offset=".411" stop-color="#993596"/><stop offset=".47" stop-color="#991e70"/><stop offset=".562" stop-color="#990a4e"/><stop offset=".668" stop-color="#990039"/><stop offset=".908" stop-color="#990020"/><stop offset="1" stop-color="#99001b"/></linearGradient>
<linearGradient id="a97" gradientUnits="userSpaceOnUse" x1="1393" x2="2129"><stop offset="0" stop-color="#007c99"/><stop offset=".221" stop-color="#025899"/><stop offset=".395" stop-color="#8b3899"/><stop offset=".414" stop-color="#993396"/><stop offset=".474" stop-color="#991d70"/><stop offset=".567" stop-color="#99094f"/><stop offset=".667" stop-color="#99003a"/><stop offset=".904" stop-color="#990021"/><stop offset="1" stop-color="#99001c"/></linearGradient>
<linearGradient id="a98" gradientUnits="userSpaceOnUse" x1="1394" x2="2127"><stop offset="0" stop-color="#007a99"/><stop offset=".221" stop-color="#025799"/><stop offset=".398" stop-color="#8c3699"/><stop offset=".417" stop-color="#993196"/><stop offset=".479" stop-color="#991b70"/><stop offset=".573" stop-color="#99084f"/><stop offset=".668" stop-color="#99003b"/><stop offset=".903" stop-color="#902"/><stop offset="1" stop-color="#99001c"/></linearGradient>
<linearGradient id="a99" gradientUnits="userSpaceOnUse" x1="1395" x2="2125"><stop offset="0" stop-color="#007899"/><stop offset=".222" stop-color="#025599"/><stop offset=".401" stop-color="#8c3499"/><stop offset=".421" stop-color="#992f96"/><stop offset=".482" stop-color="#991a70"/><stop offset=".578" stop-color="#99074f"/><stop offset=".67" stop-color="#99003c"/><stop offset=".903" stop-color="#990023"/><stop offset="1" stop-color="#99001d"/></linearGradient>
<linearGradient id="a100" gradientUnits="userSpaceOnUse" x1="1396" x2="2123"><stop offset="0" stop-color="#007699"/><stop offset=".221" stop-color="#025399"/><stop offset=".404" stop-color="#8c3299"/><stop offset=".424" stop-color="#992e96"/><stop offset=".487" stop-color="#991870"/><stop offset=".585" stop-color="#99064e"/><stop offset=".673" stop-color="#99003d"/><stop offset=".905" stop-color="#990024"/><stop offset="1" stop-color="#99001e"/></linearGradient>
<linearGradient id="a101" gradientUnits="userSpaceOnUse" x1="1397" x2="2121"><stop offset="0" stop-color="#007499"/><stop offset=".221" stop-color="#025299"/><stop offset=".406" stop-color="#8b3199"/><stop offset=".427" stop-color="#992c96"/><stop offset=".49" stop-color="#991770"/><stop offset=".588" stop-color="#99054f"/><stop offset=".675" stop-color="#99003d"/><stop offset=".909" stop-color="#990024"/><stop offset="1" stop-color="#99001e"/></linearGradient>
<linearGradient id="a102" gradientUnits="userSpaceOnUse" x1="1398" x2="2119"><stop offset="0" stop-color="#007299"/><stop offset=".222" stop-color="#025099"/><stop offset=".411" stop-color="#8c2f99"/><stop offset=".43" stop-color="#992a96"/><stop offset=".495" stop-color="#991670"/><stop offset=".595" stop-color="#99044f"/><stop offset=".687" stop-color="#99003d"/><stop offset=".926" stop-color="#990024"/><stop offset="1" stop-color="#99001f"/></linearGradient>
<linearGradient id="a103" gradientUnits="userSpaceOnUse" x1="1398" x2="2117"><stop offset="0" stop-color="#007099"/><stop offset=".223" stop-color="#024f99"/><stop offset=".413" stop-color="#8b2d99"/><stop offset=".434" stop-color="#992996"/><stop offset=".499" stop-color="#991570"/><stop offset=".601" stop-color="#99044f"/><stop offset=".716" stop-color="#990039"/><stop offset=".979" stop-color="#990021"/><stop offset="1" stop-color="#990020"/></linearGradient>
<linearGradient id="a104" gradientUnits="userSpaceOnUse" x1="1399" x2="2115"><stop offset="0" stop-color="#006e99"/><stop offset=".222" stop-color="#024d99"/><stop offset=".416" stop-color="#8b2c99"/><stop offset=".437" stop-color="#992797"/><stop offset=".504" stop-color="#991470"/><stop offset=".608" stop-color="#99034f"/><stop offset=".779" stop-color="#990032"/><stop offset="1" stop-color="#990020"/></linearGradient>
<linearGradient id="a105" gradientUnits="userSpaceOnUse" x1="1400" x2="2113"><stop offset="0" stop-color="#006c99"/><stop offset=".223" stop-color="#024c99"/><stop offset=".419" stop-color="#8c2a99"/><stop offset=".44" stop-color="#992697"/><stop offset=".508" stop-color="#991370"/><stop offset=".612" stop-color="#99024f"/><stop offset=".785" stop-color="#903"/><stop offset="1" stop-color="#990021"/></linearGradient>
<linearGradient id="a106" gradientUnits="userSpaceOnUse" x1="1401" x2="2111"><stop offset="0" stop-color="#006b99"/><stop offset=".223" stop-color="#024a99"/><stop offset=".423" stop-color="#8c2999"/><stop offset=".445" stop-color="#992496"/><stop offset=".514" stop-color="#99116f"/><stop offset=".621" stop-color="#99014e"/><stop offset=".8" stop-color="#990032"/><stop offset="1" stop-color="#902"/></linearGradient>
<linearGradient id="a107" gradientUnits="userSpaceOnUse" x1="1402" x2="2109"><stop offset="0" stop-color="#006999"/><stop offset=".223" stop-color="#034999"/><stop offset=".426" stop-color="#8c2799"/><stop offset=".448" stop-color="#992296"/><stop offset=".519" stop-color="#99106f"/><stop offset=".628" stop-color="#99004e"/><stop offset=".81" stop-color="#990032"/><stop offset="1" stop-color="#902"/></linearGradient>
<linearGradient id="a108" gradientUnits="userSpaceOnUse" x1="1403" x2="2107"><stop offset="0" stop-color="#006799"/><stop offset=".223" stop-color="#024899"/><stop offset=".429" stop-color="#8c2699"/><stop offset=".452" stop-color="#992196"/><stop offset=".523" stop-color="#990f70"/><stop offset=".634" stop-color="#99004e"/><stop offset=".818" stop-color="#990032"/><stop offset="1" stop-color="#990023"/></linearGradient>
<linearGradient id="a109" gradientUnits="userSpaceOnUse" x1="1404" x2="2105"><stop offset="0" stop-color="#069"/><stop offset=".223" stop-color="#024699"/><stop offset=".431" stop-color="#8b2499"/><stop offset=".455" stop-color="#991f96"/><stop offset=".528" stop-color="#990e6f"/><stop offset=".641" stop-color="#99004e"/><stop offset=".829" stop-color="#990032"/><stop offset="1" stop-color="#990024"/></linearGradient>
<linearGradient id="a110" gradientUnits="userSpaceOnUse" x1="1405" x2="2103"><stop offset="0" stop-color="#006499"/><stop offset=".223" stop-color="#034599"/><stop offset=".436" stop-color="#8c2399"/><stop offset=".458" stop-color="#991e96"/><stop offset=".532" stop-color="#990d70"/><stop offset=".643" stop-color="#99004f"/><stop offset=".831" stop-color="#990032"/><stop offset="1" stop-color="#990025"/></linearGradient>
<linearGradient id="a111" gradientUnits="userSpaceOnUse" x1="1405" x2="2102"><stop offset="0" stop-color="#006399"/><stop offset=".224" stop-color="#024499"/><stop offset=".438" stop-color="#8b2299"/><stop offset=".462" stop-color="#991d96"/><stop offset=".537" stop-color="#990c6f"/><stop offset=".643" stop-color="#990050"/><stop offset=".828" stop-color="#990034"/><stop offset="1" stop-color="#990025"/></linearGradient>
<linearGradient id="a112" gradientUnits="userSpaceOnUse" x1="1406" x2="2100"><stop offset="0" stop-color="#006199"/><stop offset=".223" stop-color="#024399"/><stop offset=".441" stop-color="#8b2099"/><stop offset=".465" stop-color="#991b96"/><stop offset=".54" stop-color="#990b70"/><stop offset=".641" stop-color="#990052"/><stop offset=".824" stop-color="#990035"/><stop offset="1" stop-color="#990026"/></linearGradient>
<linearGradient id="a113" gradientUnits="userSpaceOnUse" x1="1407" x2="2098"><stop offset="0" stop-color="#006099"/><stop offset=".224" stop-color="#034199"/><stop offset=".444" stop-color="#8c1f99"/><stop offset=".469" stop-color="#991a96"/><stop offset=".546" stop-color="#990a6f"/><stop offset=".641" stop-color="#990053"/><stop offset=".822" stop-color="#990036"/><stop offset="1" stop-color="#990027"/></linearGradient>
<linearGradient id="a114" gradientUnits="userSpaceOnUse" x1="1408" x2="2096"><stop offset="0" stop-color="#005e99"/><stop offset=".224" stop-color="#024099"/><stop offset=".448" stop-color="#8c1d99"/><stop offset=".472" stop-color="#991996"/><stop offset=".549" stop-color="#990970"/><stop offset=".641" stop-color="#905"/><stop offset=".82" stop-color="#990037"/><stop offset="1" stop-color="#990028"/></linearGradient>
<linearGradient id="a115" gradientUnits="userSpaceOnUse" x1="1409" x2="2094"><stop offset="0" stop-color="#005d99"/><stop offset=".223" stop-color="#023f99"/><stop offset=".451" stop-color="#8c1c99"/><stop offset=".476" stop-color="#991896"/><stop offset=".555" stop-color="#990870"/><stop offset=".642" stop-color="#990056"/><stop offset=".82" stop-color="#990038"/><stop offset="1" stop-color="#990028"/></linearGradient>
<linearGradient id="a116" gradientUnits="userSpaceOnUse" x1="1410" x2="2092"><stop offset="0" stop-color="#005b99"/><stop offset=".224" stop-color="#023e99"/><stop offset=".455" stop-color="#8c1b99"/><stop offset=".479" stop-color="#991696"/><stop offset=".559" stop-color="#990770"/><stop offset=".644" stop-color="#990057"/><stop offset=".821" stop-color="#990039"/><stop offset="1" stop-color="#990029"/></linearGradient>
<linearGradient id="a117" gradientUnits="userSpaceOnUse" x1="1410" x2="2090"><stop offset="0" stop-color="#005a99"/><stop offset=".225" stop-color="#023d99"/><stop offset=".459" stop-color="#8c1a99"/><stop offset=".484" stop-color="#991596"/><stop offset=".565" stop-color="#990670"/><stop offset=".647" stop-color="#990057"/><stop offset=".825" stop-color="#99003a"/><stop offset="1" stop-color="#99002a"/></linearGradient>
<linearGradient id="a118" gradientUnits="userSpaceOnUse" x1="1411" x2="2088"><stop offset="0" stop-color="#005899"/><stop offset=".225" stop-color="#023c99"/><stop offset=".461" stop-color="#8b1999"/><stop offset=".487" stop-color="#991496"/><stop offset=".569" stop-color="#990570"/><stop offset=".65" stop-color="#990058"/><stop offset=".829" stop-color="#99003a"/><stop offset="1" stop-color="#99002b"/></linearGradient>
<linearGradient id="a119" gradientUnits="userSpaceOnUse" x1="1412" x2="2086"><stop offset="0" stop-color="#005799"/><stop offset=".226" stop-color="#023a99"/><stop offset=".466" stop-color="#8c1799"/><stop offset=".491" stop-color="#991396"/><stop offset=".574" stop-color="#990470"/><stop offset=".665" stop-color="#990056"/><stop offset=".852" stop-color="#990039"/><stop offset="1" stop-color="#99002b"/></linearGradient>
<linearGradient id="a120" gradientUnits="userSpaceOnUse" x1="1413" x2="2084"><stop offset="0" stop-color="#005699"/><stop offset=".225" stop-color="#023999"/><stop offset=".468" stop-color="#8b1699"/><stop offset=".495" stop-color="#991296"/><stop offset=".578" stop-color="#990370"/><stop offset=".705" stop-color="#99004f"/><stop offset=".918" stop-color="#903"/><stop offset="1" stop-color="#99002c"/></linearGradient>
<linearGradient id="a121" gradientUnits="userSpaceOnUse" x1="1414" x2="2082"><stop offset="0" stop-color="#005499"/><stop offset=".226" stop-color="#033899"/><stop offset=".473" stop-color="#8c1599"/><stop offset=".499" stop-color="#991196"/><stop offset=".584" stop-color="#990270"/><stop offset=".716" stop-color="#99004e"/><stop offset=".936" stop-color="#990032"/><stop offset="1" stop-color="#99002d"/></linearGradient>
<linearGradient id="a122" gradientUnits="userSpaceOnUse" x1="1415" x2="2080"><stop offset="0" stop-color="#005399"/><stop offset=".226" stop-color="#023799"/><stop offset=".475" stop-color="#8c1499"/><stop offset=".502" stop-color="#991096"/><stop offset=".588" stop-color="#990270"/><stop offset=".722" stop-color="#99004f"/><stop offset=".944" stop-color="#990032"/><stop offset="1" stop-color="#99002e"/></linearGradient>
<linearGradient id="a123" gradientUnits="userSpaceOnUse" x1="1416" x2="2078"><stop offset="0" stop-color="#005299"/><stop offset=".225" stop-color="#023699"/><stop offset=".479" stop-color="#8c1399"/><stop offset=".506" stop-color="#990f96"/><stop offset=".594" stop-color="#990170"/><stop offset=".73" stop-color="#99004e"/><stop offset=".956" stop-color="#990032"/><stop offset="1" stop-color="#99002f"/></linearGradient>
<linearGradient id="a124" gradientUnits="userSpaceOnUse" x1="1417" x2="2076"><stop offset="0" stop-color="#005099"/><stop offset=".226" stop-color="#033599"/><stop offset=".483" stop-color="#8c1299"/><stop offset=".51" stop-color="#990d96"/><stop offset=".598" stop-color="#990070"/><stop offset=".734" stop-color="#99004f"/><stop offset=".962" stop-color="#990032"/><stop offset="1" stop-color="#99002f"/></linearGradient>
<linearGradient id="a125" gradientUnits="userSpaceOnUse" x1="1418" x2="2074"><stop offset="0" stop-color="#004f99"/><stop offset=".226" stop-color="#023499"/><stop offset=".486" stop-color="#8c1199"/><stop offset=".514" stop-color="#990c96"/><stop offset=".604" stop-color="#990070"/><stop offset=".742" stop-color="#99004f"/><stop offset=".974" stop-color="#990032"/><stop offset="1" stop-color="#990030"/></linearGradient>
<linearGradient id="a126" gradientUnits="userSpaceOnUse" x1="1419" x2="2072"><stop offset="0" stop-color="#004e99"/><stop offset=".225" stop-color="#023399"/><stop offset=".489" stop-color="#8b1099"/><stop offset=".518" stop-color="#990b96"/><stop offset=".608" stop-color="#990070"/><stop offset=".749" stop-color="#99004f"/><stop offset=".983" stop-color="#990032"/><stop offset="1" stop-color="#990031"/></linearGradient>
<linearGradient id="a127" gradientUnits="userSpaceOnUse" x1="1420" x2="2070"><stop offset="0" stop-color="#004d99"/><stop offset=".226" stop-color="#033299"/><stop offset=".494" stop-color="#8c0f99"/><stop offset=".522" stop-color="#990a96"/><stop offset=".614" stop-color="#990070"/><stop offset=".757" stop-color="#99004f"/><stop offset=".995" stop-color="#990032"/><stop offset="1" stop-color="#990032"/></linearGradient>
<linearGradient id="a128" gradientUnits="userSpaceOnUse" x1="1421" x2="2068"><stop offset="0" stop-color="#004c99"/><stop offset=".226" stop-color="#023199"/><stop offset=".496" stop-color="#8b0e99"/><stop offset=".526" stop-color="#990996"/><stop offset=".615" stop-color="#990071"/><stop offset=".757" stop-color="#990050"/><stop offset=".994" stop-color="#903"/><stop offset="1" stop-color="#903"/></linearGradient>
<linearGradient id="a129" gradientUnits="userSpaceOnUse" x1="1422" x2="2066"><stop offset="0" stop-color="#004a99"/><stop offset=".225" stop-color="#023199"/><stop offset=".5" stop-color="#8c0d99"/><stop offset=".53" stop-color="#990896"/><stop offset=".615" stop-color="#990073"/><stop offset=".756" stop-color="#990051"/><stop offset=".989" stop-color="#990034"/><stop offset="1" stop-color="#990034"/></linearGradient>
<linearGradient id="a130" gradientUnits="userSpaceOnUse" x1="1423" x2="2065"><stop offset="0" stop-color="#004999"/><stop offset=".226" stop-color="#023099"/><stop offset=".503" stop-color="#8c0c99"/><stop offset=".533" stop-color="#990896"/><stop offset=".614" stop-color="#990075"/><stop offset=".752" stop-color="#990053"/><stop offset=".981" stop-color="#990036"/><stop offset="1" stop-color="#990034"/></linearGradient>
<linearGradient id="a131" gradientUnits="userSpaceOnUse" x1="1424" x2="2063"><stop offset="0" stop-color="#004899"/><stop offset=".225" stop-color="#022f99"/><stop offset=".507" stop-color="#8c0b99"/><stop offset=".537" stop-color="#990797"/><stop offset=".615" stop-color="#990076"/><stop offset=".754" stop-color="#990054"/><stop offset=".983" stop-color="#990037"/><stop offset="1" stop-color="#990035"/></linearGradient>
<linearGradient id="a132" gradientUnits="userSpaceOnUse" x1="1425" x2="2061"><stop offset="0" stop-color="#004799"/><stop offset=".225" stop-color="#022e99"/><stop offset=".509" stop-color="#8b0a99"/><stop offset=".541" stop-color="#990697"/><stop offset=".616" stop-color="#907"/><stop offset=".755" stop-color="#905"/><stop offset=".981" stop-color="#990038"/><stop offset="1" stop-color="#990036"/></linearGradient>
<linearGradient id="a133" gradientUnits="userSpaceOnUse" x1="1426" x2="2059"><stop offset="0" stop-color="#004699"/><stop offset=".226" stop-color="#022d99"/><stop offset=".515" stop-color="#8c0999"/><stop offset=".547" stop-color="#990596"/><stop offset=".626" stop-color="#990076"/><stop offset=".768" stop-color="#990054"/><stop offset="1" stop-color="#990037"/></linearGradient>
<linearGradient id="a134" gradientUnits="userSpaceOnUse" x1="1427" x2="2057"><stop offset="0" stop-color="#004599"/><stop offset=".225" stop-color="#022c99"/><stop offset=".519" stop-color="#8c0899"/><stop offset=".551" stop-color="#990496"/><stop offset=".646" stop-color="#990071"/><stop offset=".8" stop-color="#990050"/><stop offset="1" stop-color="#990038"/></linearGradient>
<linearGradient id="a135" gradientUnits="userSpaceOnUse" x1="1428" x2="2055"><stop offset="0" stop-color="#049"/><stop offset=".226" stop-color="#032b99"/><stop offset=".523" stop-color="#8c0799"/><stop offset=".555" stop-color="#990396"/><stop offset=".659" stop-color="#99006f"/><stop offset=".818" stop-color="#99004e"/><stop offset="1" stop-color="#990039"/></linearGradient>
<linearGradient id="a136" gradientUnits="userSpaceOnUse" x1="1429" x2="2053"><stop offset="0" stop-color="#004399"/><stop offset=".226" stop-color="#022b99"/><stop offset=".527" stop-color="#8c0699"/><stop offset=".559" stop-color="#990296"/><stop offset=".663" stop-color="#990070"/><stop offset=".825" stop-color="#99004e"/><stop offset="1" stop-color="#99003a"/></linearGradient>
<linearGradient id="a137" gradientUnits="userSpaceOnUse" x1="1430" x2="2051"><stop offset="0" stop-color="#004299"/><stop offset=".225" stop-color="#022a99"/><stop offset=".53" stop-color="#8c0699"/><stop offset=".564" stop-color="#990196"/><stop offset=".67" stop-color="#99006f"/><stop offset=".834" stop-color="#99004e"/><stop offset="1" stop-color="#99003b"/></linearGradient>
<linearGradient id="a138" gradientUnits="userSpaceOnUse" x1="1431" x2="2049"><stop offset="0" stop-color="#004199"/><stop offset=".227" stop-color="#032999"/><stop offset=".536" stop-color="#8c0499"/><stop offset=".568" stop-color="#990096"/><stop offset=".675" stop-color="#990070"/><stop offset=".84" stop-color="#99004e"/><stop offset="1" stop-color="#99003b"/></linearGradient>
<linearGradient id="a139" gradientUnits="userSpaceOnUse" x1="1432" x2="2047"><stop offset="0" stop-color="#004099"/><stop offset=".226" stop-color="#022899"/><stop offset=".538" stop-color="#8c0499"/><stop offset=".572" stop-color="#990096"/><stop offset=".681" stop-color="#99006f"/><stop offset=".849" stop-color="#99004e"/><stop offset="1" stop-color="#99003c"/></linearGradient>
<linearGradient id="a140" gradientUnits="userSpaceOnUse" x1="1433" x2="2045"><stop offset="0" stop-color="#003f99"/><stop offset=".225" stop-color="#022899"/><stop offset=".542" stop-color="#8c0399"/><stop offset=".577" stop-color="#990096"/><stop offset=".686" stop-color="#990070"/><stop offset=".856" stop-color="#99004e"/><stop offset="1" stop-color="#99003d"/></linearGradient>
<linearGradient id="a141" gradientUnits="userSpaceOnUse" x1="1434" x2="2043"><stop offset="0" stop-color="#003e99"/><stop offset=".227" stop-color="#032799"/><stop offset=".547" stop-color="#8c0299"/><stop offset=".581" stop-color="#990096"/><stop offset=".693" stop-color="#99006f"/><stop offset=".865" stop-color="#99004e"/><stop offset="1" stop-color="#99003e"/></linearGradient>
<linearGradient id="a142" gradientUnits="userSpaceOnUse" x1="1435" x2="2041"><stop offset="0" stop-color="#003d99"/><stop offset=".226" stop-color="#022699"/><stop offset=".551" stop-color="#8c0199"/><stop offset=".586" stop-color="#990096"/><stop offset=".698" stop-color="#990070"/><stop offset=".871" stop-color="#99004e"/><stop offset="1" stop-color="#99003f"/></linearGradient>
<linearGradient id="a143" gradientUnits="userSpaceOnUse" x1="1437" x2="2039"><stop offset="0" stop-color="#003b99"/><stop offset=".224" stop-color="#022599"/><stop offset=".553" stop-color="#8b0199"/><stop offset=".59" stop-color="#990096"/><stop offset=".704" stop-color="#990070"/><stop offset=".88" stop-color="#99004e"/><stop offset="1" stop-color="#990040"/></linearGradient>
<linearGradient id="a144" gradientUnits="userSpaceOnUse" x1="1438" x2="2037"><stop offset="0" stop-color="#003b99"/><stop offset=".225" stop-color="#032599"/><stop offset=".559" stop-color="#8c0099"/><stop offset=".594" stop-color="#990096"/><stop offset=".71" stop-color="#990070"/><stop offset=".888" stop-color="#99004e"/><stop offset="1" stop-color="#990041"/></linearGradient>
<linearGradient id="a145" gradientUnits="userSpaceOnUse" x1="1439" x2="2035"><stop offset="0" stop-color="#003a99"/><stop offset=".225" stop-color="#022499"/><stop offset=".562" stop-color="#8c0099"/><stop offset=".599" stop-color="#990096"/><stop offset=".716" stop-color="#990070"/><stop offset=".898" stop-color="#99004e"/><stop offset="1" stop-color="#990042"/></linearGradient>
<linearGradient id="a146" gradientUnits="userSpaceOnUse" x1="1440" x2="2033"><stop offset="0" stop-color="#003999"/><stop offset=".224" stop-color="#022399"/><stop offset=".567" stop-color="#8c0099"/><stop offset=".604" stop-color="#990096"/><stop offset=".722" stop-color="#990070"/><stop offset=".904" stop-color="#99004f"/><stop offset="1" stop-color="#990043"/></linearGradient>
<linearGradient id="a147" gradientUnits="userSpaceOnUse" x1="1441" x2="2031"><stop offset="0" stop-color="#003899"/><stop offset=".225" stop-color="#022399"/><stop offset=".571" stop-color="#8c0099"/><stop offset=".608" stop-color="#990096"/><stop offset=".729" stop-color="#990070"/><stop offset=".915" stop-color="#99004e"/><stop offset="1" stop-color="#904"/></linearGradient>
<linearGradient id="a148" gradientUnits="userSpaceOnUse" x1="1442" x2="2029"><stop offset="0" stop-color="#003799"/><stop offset=".225" stop-color="#022299"/><stop offset=".574" stop-color="#8b0099"/><stop offset=".613" stop-color="#990096"/><stop offset=".734" stop-color="#990070"/><stop offset=".922" stop-color="#99004f"/><stop offset="1" stop-color="#990045"/></linearGradient>
<linearGradient id="a149" gradientUnits="userSpaceOnUse" x1="1443" x2="2028"><stop offset="0" stop-color="#003699"/><stop offset=".226" stop-color="#032199"/><stop offset=".571" stop-color="#809"/><stop offset=".617" stop-color="#990096"/><stop offset=".74" stop-color="#990070"/><stop offset=".93" stop-color="#99004e"/><stop offset="1" stop-color="#990046"/></linearGradient>
<linearGradient id="a150" gradientUnits="userSpaceOnUse" x1="1444" x2="2026"><stop offset="0" stop-color="#003599"/><stop offset=".225" stop-color="#022199"/><stop offset=".57" stop-color="#860099"/><stop offset=".622" stop-color="#990096"/><stop offset=".746" stop-color="#990070"/><stop offset=".938" stop-color="#99004e"/><stop offset="1" stop-color="#990047"/></linearGradient>
<linearGradient id="a151" gradientUnits="userSpaceOnUse" x1="1445" x2="2024"><stop offset="0" stop-color="#003499"/><stop offset=".225" stop-color="#022099"/><stop offset=".568" stop-color="#840099"/><stop offset=".627" stop-color="#990096"/><stop offset=".753" stop-color="#990070"/><stop offset=".948" stop-color="#99004e"/><stop offset="1" stop-color="#990048"/></linearGradient>
<linearGradient id="a152" gradientUnits="userSpaceOnUse" x1="1446" x2="2022"><stop offset="0" stop-color="#039"/><stop offset=".226" stop-color="#031f99"/><stop offset=".566" stop-color="#810099"/><stop offset=".632" stop-color="#990096"/><stop offset=".759" stop-color="#990070"/><stop offset=".955" stop-color="#99004f"/><stop offset="1" stop-color="#990049"/></linearGradient>
<linearGradient id="a153" gradientUnits="userSpaceOnUse" x1="1447" x2="2020"><stop offset="0" stop-color="#039"/><stop offset=".225" stop-color="#021f99"/><stop offset=".564" stop-color="#7e0099"/><stop offset=".637" stop-color="#990096"/><stop offset=".766" stop-color="#990070"/><stop offset=".965" stop-color="#99004e"/><stop offset="1" stop-color="#99004a"/></linearGradient>
<linearGradient id="a154" gradientUnits="userSpaceOnUse" x1="1448" x2="2018"><stop offset="0" stop-color="#003299"/><stop offset=".225" stop-color="#021e99"/><stop offset=".561" stop-color="#7c0099"/><stop offset=".642" stop-color="#990096"/><stop offset=".772" stop-color="#990070"/><stop offset=".974" stop-color="#99004f"/><stop offset="1" stop-color="#99004b"/></linearGradient>
<linearGradient id="a155" gradientUnits="userSpaceOnUse" x1="1449" x2="2016"><stop offset="0" stop-color="#003199"/><stop offset=".226" stop-color="#031d99"/><stop offset=".561" stop-color="#7a0099"/><stop offset=".647" stop-color="#990096"/><stop offset=".78" stop-color="#990070"/><stop offset=".984" stop-color="#99004e"/><stop offset="1" stop-color="#99004d"/></linearGradient>
<linearGradient id="a156" gradientUnits="userSpaceOnUse" x1="1451" x2="2014"><stop offset="0" stop-color="#003099"/><stop offset=".224" stop-color="#021d99"/><stop offset=".558" stop-color="#780099"/><stop offset=".652" stop-color="#990096"/><stop offset=".785" stop-color="#990070"/><stop offset=".991" stop-color="#99004f"/><stop offset="1" stop-color="#99004e"/></linearGradient>
<linearGradient id="a157" gradientUnits="userSpaceOnUse" x1="1452" x2="2012"><stop offset="0" stop-color="#002f99"/><stop offset=".223" stop-color="#021c99"/><stop offset=".555" stop-color="#750099"/><stop offset=".657" stop-color="#990097"/><stop offset=".793" stop-color="#990070"/><stop offset="1" stop-color="#99004f"/></linearGradient>
<linearGradient id="a158" gradientUnits="userSpaceOnUse" x1="1453" x2="2010"><stop offset="0" stop-color="#002f99"/><stop offset=".224" stop-color="#031c99"/><stop offset=".553" stop-color="#730099"/><stop offset=".662" stop-color="#990097"/><stop offset=".799" stop-color="#990070"/><stop offset="1" stop-color="#990050"/></linearGradient>
<linearGradient id="a159" gradientUnits="userSpaceOnUse" x1="1454" x2="2008"><stop offset="0" stop-color="#002e99"/><stop offset=".224" stop-color="#021b99"/><stop offset=".551" stop-color="#700099"/><stop offset=".668" stop-color="#990097"/><stop offset=".807" stop-color="#990070"/><stop offset="1" stop-color="#990051"/></linearGradient>
<linearGradient id="a160" gradientUnits="userSpaceOnUse" x1="1455" x2="2006"><stop offset="0" stop-color="#002d99"/><stop offset=".223" stop-color="#021b99"/><stop offset=".55" stop-color="#6f0099"/><stop offset=".673" stop-color="#990097"/><stop offset=".813" stop-color="#990070"/><stop offset="1" stop-color="#990052"/></linearGradient>
<linearGradient id="a161" gradientUnits="userSpaceOnUse" x1="1456" x2="2004"><stop offset="0" stop-color="#002c99"/><stop offset=".224" stop-color="#031a99"/><stop offset=".547" stop-color="#6d0099"/><stop offset=".679" stop-color="#990097"/><stop offset=".821" stop-color="#990070"/><stop offset="1" stop-color="#990053"/></linearGradient>
<linearGradient id="a162" gradientUnits="userSpaceOnUse" x1="1457" x2="2002"><stop offset="0" stop-color="#002c99"/><stop offset=".224" stop-color="#021999"/><stop offset=".545" stop-color="#6a0099"/><stop offset=".684" stop-color="#990097"/><stop offset=".828" stop-color="#990070"/><stop offset="1" stop-color="#905"/></linearGradient>
<linearGradient id="a163" gradientUnits="userSpaceOnUse" x1="1458" x2="2000"><stop offset="0" stop-color="#002b99"/><stop offset=".225" stop-color="#031999"/><stop offset=".542" stop-color="#680099"/><stop offset=".69" stop-color="#990097"/><stop offset=".836" stop-color="#990070"/><stop offset="1" stop-color="#990056"/></linearGradient>
<linearGradient id="a164" gradientUnits="userSpaceOnUse" x1="1459" x2="1998"><stop offset="0" stop-color="#002a99"/><stop offset=".224" stop-color="#021899"/><stop offset=".54" stop-color="#609"/><stop offset=".696" stop-color="#990097"/><stop offset=".842" stop-color="#990070"/><stop offset="1" stop-color="#990057"/></linearGradient>
<linearGradient id="a165" gradientUnits="userSpaceOnUse" x1="1460" x2="1996"><stop offset="0" stop-color="#002999"/><stop offset=".224" stop-color="#021899"/><stop offset=".539" stop-color="#640099"/><stop offset=".701" stop-color="#990097"/><stop offset=".851" stop-color="#990070"/><stop offset="1" stop-color="#990058"/></linearGradient>
<linearGradient id="a166" gradientUnits="userSpaceOnUse" x1="1462" x2="1994"><stop offset="0" stop-color="#002999"/><stop offset=".224" stop-color="#031799"/><stop offset=".536" stop-color="#620099"/><stop offset=".707" stop-color="#990097"/><stop offset=".857" stop-color="#990070"/><stop offset="1" stop-color="#990059"/></linearGradient>
<linearGradient id="a167" gradientUnits="userSpaceOnUse" x1="1463" x2="1992"><stop offset="0" stop-color="#002899"/><stop offset=".223" stop-color="#021799"/><stop offset=".533" stop-color="#600099"/><stop offset=".713" stop-color="#990097"/><stop offset=".866" stop-color="#990070"/><stop offset="1" stop-color="#99005b"/></linearGradient>
<linearGradient id="a168" gradientUnits="userSpaceOnUse" x1="1464" x2="1991"><stop offset="0" stop-color="#002799"/><stop offset=".222" stop-color="#021699"/><stop offset=".529" stop-color="#5e0099"/><stop offset=".717" stop-color="#990097"/><stop offset=".871" stop-color="#990070"/><stop offset="1" stop-color="#99005c"/></linearGradient>
<linearGradient id="a169" gradientUnits="userSpaceOnUse" x1="1466" x2="1989"><stop offset="0" stop-color="#002699"/><stop offset=".222" stop-color="#031699"/><stop offset=".528" stop-color="#5d0099"/><stop offset=".723" stop-color="#990097"/><stop offset=".88" stop-color="#990070"/><stop offset="1" stop-color="#99005d"/></linearGradient>
<linearGradient id="a170" gradientUnits="userSpaceOnUse" x1="1467" x2="1987"><stop offset="0" stop-color="#002699"/><stop offset=".221" stop-color="#021599"/><stop offset=".525" stop-color="#5b0099"/><stop offset=".729" stop-color="#990097"/><stop offset=".887" stop-color="#990070"/><stop offset="1" stop-color="#99005e"/></linearGradient>
<linearGradient id="a171" gradientUnits="userSpaceOnUse" x1="1468" x2="1985"><stop offset="0" stop-color="#002599"/><stop offset=".221" stop-color="#021599"/><stop offset=".522" stop-color="#590099"/><stop offset=".735" stop-color="#990097"/><stop offset=".896" stop-color="#990070"/><stop offset="1" stop-color="#990060"/></linearGradient>
<linearGradient id="a172" gradientUnits="userSpaceOnUse" x1="1469" x2="1983"><stop offset="0" stop-color="#002499"/><stop offset=".222" stop-color="#031499"/><stop offset=".519" stop-color="#570099"/><stop offset=".741" stop-color="#990097"/><stop offset=".903" stop-color="#990070"/><stop offset="1" stop-color="#990061"/></linearGradient>
<linearGradient id="a173" gradientUnits="userSpaceOnUse" x1="1470" x2="1981"><stop offset="0" stop-color="#002499"/><stop offset=".221" stop-color="#021499"/><stop offset=".517" stop-color="#509"/><stop offset=".748" stop-color="#990097"/><stop offset=".912" stop-color="#990070"/><stop offset="1" stop-color="#990062"/></linearGradient>
<linearGradient id="a174" gradientUnits="userSpaceOnUse" x1="1471" x2="1979"><stop offset="0" stop-color="#002399"/><stop offset=".222" stop-color="#031399"/><stop offset=".516" stop-color="#540099"/><stop offset=".754" stop-color="#990097"/><stop offset=".919" stop-color="#990070"/><stop offset="1" stop-color="#990064"/></linearGradient>
<linearGradient id="a175" gradientUnits="userSpaceOnUse" x1="1472" x2="1977"><stop offset="0" stop-color="#029"/><stop offset=".222" stop-color="#031399"/><stop offset=".513" stop-color="#520099"/><stop offset=".762" stop-color="#990096"/><stop offset=".931" stop-color="#990070"/><stop offset="1" stop-color="#990065"/></linearGradient>
<linearGradient id="a176" gradientUnits="userSpaceOnUse" x1="1473" x2="1975"><stop offset="0" stop-color="#029"/><stop offset=".221" stop-color="#021299"/><stop offset=".51" stop-color="#500099"/><stop offset=".769" stop-color="#990096"/><stop offset=".94" stop-color="#990070"/><stop offset="1" stop-color="#906"/></linearGradient>
<linearGradient id="a177" gradientUnits="userSpaceOnUse" x1="1475" x2="1973"><stop offset="0" stop-color="#002199"/><stop offset=".221" stop-color="#031299"/><stop offset=".506" stop-color="#4e0099"/><stop offset=".775" stop-color="#990096"/><stop offset=".948" stop-color="#990070"/><stop offset="1" stop-color="#990068"/></linearGradient>
<linearGradient id="a178" gradientUnits="userSpaceOnUse" x1="1476" x2="1971"><stop offset="0" stop-color="#002099"/><stop offset=".22" stop-color="#021299"/><stop offset=".505" stop-color="#4d0099"/><stop offset=".782" stop-color="#990096"/><stop offset=".958" stop-color="#990070"/><stop offset="1" stop-color="#990069"/></linearGradient>
<linearGradient id="a179" gradientUnits="userSpaceOnUse" x1="1477" x2="1969"><stop offset="0" stop-color="#002099"/><stop offset=".22" stop-color="#021199"/><stop offset=".502" stop-color="#4b0099"/><stop offset=".789" stop-color="#990096"/><stop offset=".965" stop-color="#990070"/><stop offset="1" stop-color="#99006b"/></linearGradient>
<linearGradient id="a180" gradientUnits="userSpaceOnUse" x1="1479" x2="1967"><stop offset="0" stop-color="#001f99"/><stop offset=".219" stop-color="#031199"/><stop offset=".498" stop-color="#4a0099"/><stop offset=".795" stop-color="#990096"/><stop offset=".975" stop-color="#990070"/><stop offset="1" stop-color="#99006c"/></linearGradient>
<linearGradient id="a181" gradientUnits="userSpaceOnUse" x1="1480" x2="1965"><stop offset="0" stop-color="#001f99"/><stop offset=".219" stop-color="#021099"/><stop offset=".495" stop-color="#480099"/><stop offset=".802" stop-color="#990096"/><stop offset=".986" stop-color="#990070"/><stop offset="1" stop-color="#99006d"/></linearGradient>
<linearGradient id="a182" gradientUnits="userSpaceOnUse" x1="1481" x2="1963"><stop offset="0" stop-color="#001e99"/><stop offset=".218" stop-color="#021099"/><stop offset=".494" stop-color="#470099"/><stop offset=".809" stop-color="#990096"/><stop offset=".994" stop-color="#990070"/><stop offset="1" stop-color="#99006f"/></linearGradient>
<linearGradient id="a183" gradientUnits="userSpaceOnUse" x1="1482" x2="1961"><stop offset="0" stop-color="#001d99"/><stop offset=".219" stop-color="#030f99"/><stop offset=".491" stop-color="#450099"/><stop offset=".816" stop-color="#990096"/><stop offset="1" stop-color="#990070"/></linearGradient>
<linearGradient id="a184" gradientUnits="userSpaceOnUse" x1="1483" x2="1959"><stop offset="0" stop-color="#001d99"/><stop offset=".218" stop-color="#020f99"/><stop offset=".487" stop-color="#430099"/><stop offset=".824" stop-color="#990097"/><stop offset="1" stop-color="#990072"/></linearGradient>
<linearGradient id="a185" gradientUnits="userSpaceOnUse" x1="1484" x2="1957"><stop offset="0" stop-color="#001c99"/><stop offset=".22" stop-color="#030e99"/><stop offset=".486" stop-color="#420099"/><stop offset=".831" stop-color="#990097"/><stop offset="1" stop-color="#990074"/></linearGradient>
<linearGradient id="a186" gradientUnits="userSpaceOnUse" x1="1485" x2="1955"><stop offset="0" stop-color="#001c99"/><stop offset=".219" stop-color="#030e99"/><stop offset=".483" stop-color="#410099"/><stop offset=".838" stop-color="#990097"/><stop offset="1" stop-color="#990075"/></linearGradient>
<linearGradient id="a187" gradientUnits="userSpaceOnUse" x1="1486" x2="1954"><stop offset="0" stop-color="#001b99"/><stop offset=".218" stop-color="#020e99"/><stop offset=".479" stop-color="#3f0099"/><stop offset=".844" stop-color="#990097"/><stop offset="1" stop-color="#990076"/></linearGradient>
<linearGradient id="a188" gradientUnits="userSpaceOnUse" x1="1488" x2="1952"><stop offset="0" stop-color="#001a99"/><stop offset=".218" stop-color="#030d99"/><stop offset=".476" stop-color="#3e0099"/><stop offset=".851" stop-color="#990097"/><stop offset="1" stop-color="#990078"/></linearGradient>
<linearGradient id="a189" gradientUnits="userSpaceOnUse" x1="1489" x2="1950"><stop offset="0" stop-color="#001a99"/><stop offset=".217" stop-color="#030d99"/><stop offset=".473" stop-color="#3c0099"/><stop offset=".859" stop-color="#990097"/><stop offset="1" stop-color="#99007a"/></linearGradient>
<linearGradient id="a190" gradientUnits="userSpaceOnUse" x1="1490" x2="1948"><stop offset="0" stop-color="#001999"/><stop offset=".216" stop-color="#020d99"/><stop offset=".469" stop-color="#3b0099"/><stop offset=".867" stop-color="#990097"/><stop offset="1" stop-color="#99007b"/></linearGradient>
<linearGradient id="a191" gradientUnits="userSpaceOnUse" x1="1492" x2="1946"><stop offset="0" stop-color="#001999"/><stop offset=".216" stop-color="#030c99"/><stop offset=".467" stop-color="#3a0099"/><stop offset=".874" stop-color="#990097"/><stop offset="1" stop-color="#99007d"/></linearGradient>
<linearGradient id="a192" gradientUnits="userSpaceOnUse" x1="1493" x2="1944"><stop offset="0" stop-color="#001899"/><stop offset=".215" stop-color="#030c99"/><stop offset=".463" stop-color="#380099"/><stop offset=".882" stop-color="#990097"/><stop offset="1" stop-color="#99007e"/></linearGradient>
<linearGradient id="a193" gradientUnits="userSpaceOnUse" x1="1494" x2="1942"><stop offset="0" stop-color="#001899"/><stop offset=".214" stop-color="#020b99"/><stop offset=".462" stop-color="#370099"/><stop offset=".891" stop-color="#990097"/><stop offset="1" stop-color="#990080"/></linearGradient>
<linearGradient id="a194" gradientUnits="userSpaceOnUse" x1="1496" x2="1940"><stop offset="0" stop-color="#001799"/><stop offset=".214" stop-color="#030b99"/><stop offset=".457" stop-color="#360099"/><stop offset=".899" stop-color="#990097"/><stop offset="1" stop-color="#990082"/></linearGradient>
<linearGradient id="a195" gradientUnits="userSpaceOnUse" x1="1497" x2="1938"><stop offset="0" stop-color="#001799"/><stop offset=".213" stop-color="#020b99"/><stop offset=".454" stop-color="#350099"/><stop offset=".907" stop-color="#990097"/><stop offset="1" stop-color="#990084"/></linearGradient>
<linearGradient id="a196" gradientUnits="userSpaceOnUse" x1="1498" x2="1936"><stop offset="0" stop-color="#001699"/><stop offset=".215" stop-color="#030a99"/><stop offset=".452" stop-color="#340099"/><stop offset=".916" stop-color="#990097"/><stop offset="1" stop-color="#990085"/></linearGradient>
<linearGradient id="a197" gradientUnits="userSpaceOnUse" x1="1499" x2="1934"><stop offset="0" stop-color="#001699"/><stop offset=".214" stop-color="#030a99"/><stop offset=".448" stop-color="#320099"/><stop offset=".924" stop-color="#990097"/><stop offset="1" stop-color="#990087"/></linearGradient>
<linearGradient id="a198" gradientUnits="userSpaceOnUse" x1="1500" x2="1932"><stop offset="0" stop-color="#001599"/><stop offset=".213" stop-color="#020a99"/><stop offset=".447" stop-color="#310099"/><stop offset=".933" stop-color="#990097"/><stop offset="1" stop-color="#990089"/></linearGradient>
<linearGradient id="a199" gradientUnits="userSpaceOnUse" x1="1501" x2="1930"><stop offset="0" stop-color="#001599"/><stop offset=".214" stop-color="#030999"/><stop offset=".443" stop-color="#300099"/><stop offset=".942" stop-color="#990097"/><stop offset="1" stop-color="#99008b"/></linearGradient>
<linearGradient id="a200" gradientUnits="userSpaceOnUse" x1="1503" x2="1928"><stop offset="0" stop-color="#001499"/><stop offset=".212" stop-color="#030999"/><stop offset=".44" stop-color="#2f0099"/><stop offset=".951" stop-color="#990097"/><stop offset="1" stop-color="#99008d"/></linearGradient>
<linearGradient id="a201" gradientUnits="userSpaceOnUse" x1="1504" x2="1926"><stop offset="0" stop-color="#001499"/><stop offset=".211" stop-color="#020999"/><stop offset=".438" stop-color="#2e0099"/><stop offset=".96" stop-color="#990097"/><stop offset="1" stop-color="#99008f"/></linearGradient>
<linearGradient id="a202" gradientUnits="userSpaceOnUse" x1="1506" x2="1924"><stop offset="0" stop-color="#001399"/><stop offset=".211" stop-color="#030899"/><stop offset=".435" stop-color="#2d0099"/><stop offset=".971" stop-color="#990096"/><stop offset="1" stop-color="#990090"/></linearGradient>
<linearGradient id="a203" gradientUnits="userSpaceOnUse" x1="1507" x2="1922"><stop offset="0" stop-color="#001399"/><stop offset=".21" stop-color="#030899"/><stop offset=".431" stop-color="#2c0099"/><stop offset=".981" stop-color="#990096"/><stop offset="1" stop-color="#990092"/></linearGradient>
<linearGradient id="a204" gradientUnits="userSpaceOnUse" x1="1508" x2="1920"><stop offset="0" stop-color="#001299"/><stop offset=".209" stop-color="#020899"/><stop offset=".43" stop-color="#2b0099"/><stop offset=".99" stop-color="#990096"/><stop offset="1" stop-color="#990094"/></linearGradient>
<linearGradient id="a205" gradientUnits="userSpaceOnUse" x1="1509" x2="1918"><stop offset="0" stop-color="#001299"/><stop offset=".21" stop-color="#030799"/><stop offset=".428" stop-color="#2a0099"/><stop offset="1" stop-color="#990096"/></linearGradient>
<linearGradient id="a206" gradientUnits="userSpaceOnUse" x1="1511" x2="1917"><stop offset="0" stop-color="#019"/><stop offset=".207" stop-color="#030799"/><stop offset=".424" stop-color="#2a0099"/><stop offset="1" stop-color="#990098"/></linearGradient>
<linearGradient id="a207" gradientUnits="userSpaceOnUse" x1="1512" x2="1915"><stop offset="0" stop-color="#019"/><stop offset=".208" stop-color="#030699"/><stop offset=".424" stop-color="#290099"/><stop offset="1" stop-color="#980099"/></linearGradient>
<linearGradient id="a208" gradientUnits="userSpaceOnUse" x1="1514" x2="1913"><stop offset="0" stop-color="#001099"/><stop offset=".206" stop-color="#030699"/><stop offset=".421" stop-color="#280099"/><stop offset="1" stop-color="#960099"/></linearGradient>
<linearGradient id="a209" gradientUnits="userSpaceOnUse" x1="1515" x2="1911"><stop offset="0" stop-color="#001099"/><stop offset=".205" stop-color="#030699"/><stop offset=".422" stop-color="#280099"/><stop offset="1" stop-color="#940099"/></linearGradient>
<linearGradient id="a210" gradientUnits="userSpaceOnUse" x1="1516" x2="1909"><stop offset="0" stop-color="#000f99"/><stop offset=".206" stop-color="#030699"/><stop offset=".425" stop-color="#280099"/><stop offset="1" stop-color="#920099"/></linearGradient>
<linearGradient id="a211" gradientUnits="userSpaceOnUse" x1="1518" x2="1907"><stop offset="0" stop-color="#000f99"/><stop offset=".203" stop-color="#030599"/><stop offset=".424" stop-color="#280099"/><stop offset="1" stop-color="#900099"/></linearGradient>
<linearGradient id="a212" gradientUnits="userSpaceOnUse" x1="1519" x2="1905"><stop offset="0" stop-color="#000e99"/><stop offset=".202" stop-color="#020599"/><stop offset=".427" stop-color="#280099"/><stop offset="1" stop-color="#8e0099"/></linearGradient>
<linearGradient id="a213" gradientUnits="userSpaceOnUse" x1="1520" x2="1903"><stop offset="0" stop-color="#000e99"/><stop offset=".204" stop-color="#030599"/><stop offset=".433" stop-color="#280099"/><stop offset="1" stop-color="#8c0099"/></linearGradient>
<linearGradient id="a214" gradientUnits="userSpaceOnUse" x1="1522" x2="1901"><stop offset="0" stop-color="#000d99"/><stop offset=".201" stop-color="#030499"/><stop offset=".438" stop-color="#290099"/><stop offset="1" stop-color="#8a0099"/></linearGradient>
<linearGradient id="a215" gradientUnits="userSpaceOnUse" x1="1523" x2="1899"><stop offset="0" stop-color="#000d99"/><stop offset=".199" stop-color="#020499"/><stop offset=".449" stop-color="#2a0099"/><stop offset="1" stop-color="#890099"/></linearGradient>
<linearGradient id="a216" gradientUnits="userSpaceOnUse" x1="1525" x2="1897"><stop offset="0" stop-color="#000c99"/><stop offset=".199" stop-color="#030499"/><stop offset=".476" stop-color="#2e0099"/><stop offset="1" stop-color="#870099"/></linearGradient>
<linearGradient id="a217" gradientUnits="userSpaceOnUse" x1="1526" x2="1895"><stop offset="0" stop-color="#000c99"/><stop offset=".198" stop-color="#030499"/><stop offset=".512" stop-color="#309"/><stop offset="1" stop-color="#850099"/></linearGradient>
<linearGradient id="a218" gradientUnits="userSpaceOnUse" x1="1527" x2="1893"><stop offset="0" stop-color="#000c99"/><stop offset=".199" stop-color="#030399"/><stop offset=".626" stop-color="#450099"/><stop offset="1" stop-color="#830099"/></linearGradient>
<linearGradient id="a219" gradientUnits="userSpaceOnUse" x1="1529" x2="1891"><stop offset="0" stop-color="#000b99"/><stop offset=".196" stop-color="#030399"/><stop offset=".87" stop-color="#6c0099"/><stop offset="1" stop-color="#810099"/></linearGradient>
<linearGradient id="a220" gradientUnits="userSpaceOnUse" x1="1530" x2="1889"><stop offset="0" stop-color="#000b99"/><stop offset=".195" stop-color="#030399"/><stop offset="1" stop-color="#800099"/></linearGradient>
<linearGradient id="a221" gradientUnits="userSpaceOnUse" x1="1532" x2="1887"><stop offset="0" stop-color="#000a99"/><stop offset=".194" stop-color="#030299"/><stop offset="1" stop-color="#7e0099"/></linearGradient>
<linearGradient id="a222" gradientUnits="userSpaceOnUse" x1="1533" x2="1885"><stop offset="0" stop-color="#000a99"/><stop offset=".193" stop-color="#030299"/><stop offset="1" stop-color="#7c0099"/></linearGradient>
<linearGradient id="a223" gradientUnits="userSpaceOnUse" x1="1534" x2="1883"><stop offset="0" stop-color="#000999"/><stop offset=".195" stop-color="#030299"/><stop offset="1" stop-color="#7a0099"/></linearGradient>
<linearGradient id="a224" gradientUnits="userSpaceOnUse" x1="1536" x2="1881"><stop offset="0" stop-color="#000999"/><stop offset=".191" stop-color="#030199"/><stop offset="1" stop-color="#790099"/></linearGradient>
<linearGradient id="a225" gradientUnits="userSpaceOnUse" x1="1537" x2="1880"><stop offset="0" stop-color="#000999"/><stop offset=".19" stop-color="#030199"/><stop offset="1" stop-color="#780099"/></linearGradient>
<linearGradient id="a226" gradientUnits="userSpaceOnUse" x1="1539" x2="1878"><stop offset="0" stop-color="#000899"/><stop offset=".189" stop-color="#030199"/><stop offset="1" stop-color="#760099"/></linearGradient>
<linearGradient id="a227" gradientUnits="userSpaceOnUse" x1="1540" x2="1876"><stop offset="0" stop-color="#000899"/><stop offset=".188" stop-color="#030199"/><stop offset="1" stop-color="#740099"/></linearGradient>
<linearGradient id="a228" gradientUnits="userSpaceOnUse" x1="1541" x2="1874"><stop offset="0" stop-color="#000799"/><stop offset=".186" stop-color="#030099"/><stop offset="1" stop-color="#730099"/></linearGradient>
<linearGradient id="a229" gradientUnits="userSpaceOnUse" x1="1543" x2="1872"><stop offset="0" stop-color="#000799"/><stop offset=".185" stop-color="#030099"/><stop offset="1" stop-color="#710099"/></linearGradient>
<linearGradient id="a230" gradientUnits="userSpaceOnUse" x1="1544" x2="1870"><stop offset="0" stop-color="#000699"/><stop offset=".184" stop-color="#030099"/><stop offset="1" stop-color="#700099"/></linearGradient>
<linearGradient id="a231" gradientUnits="userSpaceOnUse" x1="1546" x2="1868"><stop offset="0" stop-color="#000699"/><stop offset=".183" stop-color="#030099"/><stop offset="1" stop-color="#6e0099"/></linearGradient>
<linearGradient id="a232" gradientUnits="userSpaceOnUse" x1="1547" x2="1866"><stop offset="0" stop-color="#000699"/><stop offset=".182" stop-color="#030099"/><stop offset="1" stop-color="#6d0099"/></linearGradient>
<linearGradient id="a233" gradientUnits="userSpaceOnUse" x1="1549" x2="1864"><stop offset="0" stop-color="#000599"/><stop offset=".178" stop-color="#030099"/><stop offset="1" stop-color="#6b0099"/></linearGradient>
<linearGradient id="a234" gradientUnits="userSpaceOnUse" x1="1550" x2="1862"><stop offset="0" stop-color="#000599"/><stop offset=".179" stop-color="#030099"/><stop offset="1" stop-color="#6a0099"/></linearGradient>
<linearGradient id="a235" gradientUnits="userSpaceOnUse" x1="1552" x2="1860"><stop offset="0" stop-color="#000499"/><stop offset=".175" stop-color="#030099"/><stop offset="1" stop-color="#680099"/></linearGradient>
<linearGradient id="a236" gradientUnits="userSpaceOnUse" x1="1553" x2="1858"><stop offset="0" stop-color="#000499"/><stop offset=".177" stop-color="#030099"/><stop offset="1" stop-color="#670099"/></linearGradient>
<linearGradient id="a237" gradientUnits="userSpaceOnUse" x1="1555" x2="1856"><stop offset="0" stop-color="#000499"/><stop offset=".173" stop-color="#030099"/><stop offset="1" stop-color="#650099"/></linearGradient>
<linearGradient id="a238" gradientUnits="userSpaceOnUse" x1="1556" x2="1854"><stop offset="0" stop-color="#000399"/><stop offset=".171" stop-color="#030099"/><stop offset="1" stop-color="#640099"/></linearGradient>
<linearGradient id="a239" gradientUnits="userSpaceOnUse" x1="1557" x2="1852"><stop offset="0" stop-color="#000399"/><stop offset=".173" stop-color="#030099"/><stop offset="1" stop-color="#620099"/></linearGradient>
<linearGradient id="a240" gradientUnits="userSpaceOnUse" x1="1559" x2="1850"><stop offset="0" stop-color="#000399"/><stop offset=".168" stop-color="#030099"/><stop offset="1" stop-color="#610099"/></linearGradient>
<linearGradient id="a241" gradientUnits="userSpaceOnUse" x1="1560" x2="1848"><stop offset="0" stop-color="#000299"/><stop offset=".17" stop-color="#030099"/><stop offset="1" stop-color="#5f0099"/></linearGradient>
<linearGradient id="a242" gradientUnits="userSpaceOnUse" x1="1562" x2="1846"><stop offset="0" stop-color="#000299"/><stop offset=".165" stop-color="#030099"/><stop offset="1" stop-color="#5e0099"/></linearGradient>
<linearGradient id="a243" gradientUnits="userSpaceOnUse" x1="1563" x2="1844"><stop offset="0" stop-color="#000299"/><stop offset=".164" stop-color="#030099"/><stop offset="1" stop-color="#5d0099"/></linearGradient>
<linearGradient id="a244" gradientUnits="userSpaceOnUse" x1="1565" x2="1843"><stop offset="0" stop-color="#000199"/><stop offset=".162" stop-color="#030099"/><stop offset="1" stop-color="#5c0099"/></linearGradient>
<linearGradient id="a245" gradientUnits="userSpaceOnUse" x1="1567" x2="1841"><stop offset="0" stop-color="#000199"/><stop offset=".161" stop-color="#030099"/><stop offset="1" stop-color="#5a0099"/></linearGradient>
<linearGradient id="a246" gradientUnits="userSpaceOnUse" x1="1568" x2="1839"><stop offset="0" stop-color="#009"/><stop offset=".159" stop-color="#030099"/><stop offset="1" stop-color="#590099"/></linearGradient>
<linearGradient id="a247" gradientUnits="userSpaceOnUse" x1="1570" x2="1837"><stop offset="0" stop-color="#009"/><stop offset=".154" stop-color="#030099"/><stop offset="1" stop-color="#580099"/></linearGradient>
<linearGradient id="a248" gradientUnits="userSpaceOnUse" x1="1571" x2="1835"><stop offset="0" stop-color="#009"/><stop offset=".155" stop-color="#030099"/><stop offset="1" stop-color="#560099"/></linearGradient>
<linearGradient id="a249" gradientUnits="userSpaceOnUse" x1="1573" x2="1833"><stop offset="0" stop-color="#009"/><stop offset=".15" stop-color="#030099"/><stop offset="1" stop-color="#509"/></linearGradient>
<linearGradient id="a250" gradientUnits="userSpaceOnUse" x1="1575" x2="1831"><stop offset="0" stop-color="#009"/><stop offset=".148" stop-color="#030099"/><stop offset="1" stop-color="#540099"/></linearGradient>
<linearGradient id="a251" gradientUnits="userSpaceOnUse" x1="1577" x2="1829"><stop offset="0" stop-color="#009"/><stop offset=".147" stop-color="#040099"/><stop offset="1" stop-color="#530099"/></linearGradient>
<linearGradient id="a252" gradientUnits="userSpaceOnUse" x1="1579" x2="1827"><stop offset="0" stop-color="#009"/><stop offset=".141" stop-color="#030099"/><stop offset="1" stop-color="#510099"/></linearGradient>
<linearGradient id="a253" gradientUnits="userSpaceOnUse" x1="1580" x2="1825"><stop offset="0" stop-color="#009"/><stop offset=".143" stop-color="#040099"/><stop offset="1" stop-color="#500099"/></linearGradient>
<linearGradient id="a254" gradientUnits="userSpaceOnUse" x1="1581" x2="1823"><stop offset="0" stop-color="#009"/><stop offset=".145" stop-color="#040099"/><stop offset="1" stop-color="#4f0099"/></linearGradient>
<linearGradient id="a255" gradientUnits="userSpaceOnUse" x1="1583" x2="1821"><stop offset="0" stop-color="#009"/><stop offset=".139" stop-color="#040099"/><stop offset="1" stop-color="#4e0099"/></linearGradient>
<linearGradient id="a256" gradientUnits="userSpaceOnUse" x1="1585" x2="1819"><stop offset="0" stop-color="#009"/><stop offset=".137" stop-color="#040099"/><stop offset="1" stop-color="#4d0099"/></linearGradient>
<linearGradient id="a257" gradientUnits="userSpaceOnUse" x1="1587" x2="1817"><stop offset="0" stop-color="#009"/><stop offset=".139" stop-color="#050099"/><stop offset="1" stop-color="#4b0099"/></linearGradient>
<linearGradient id="a258" gradientUnits="userSpaceOnUse" x1="1588" x2="1815"><stop offset="0" stop-color="#009"/><stop offset=".137" stop-color="#040099"/><stop offset="1" stop-color="#4a0099"/></linearGradient>
<linearGradient id="a259" gradientUnits="userSpaceOnUse" x1="1590" x2="1813"><stop offset="0" stop-color="#009"/><stop offset=".139" stop-color="#050099"/><stop offset="1" stop-color="#490099"/></linearGradient>
<linearGradient id="a260" gradientUnits="userSpaceOnUse" x1="1592" x2="1811"><stop offset="0" stop-color="#009"/><stop offset=".142" stop-color="#060099"/><stop offset="1" stop-color="#480099"/></linearGradient>
<linearGradient id="a261" gradientUnits="userSpaceOnUse" x1="1594" x2="1809"><stop offset="0" stop-color="#009"/><stop offset=".149" stop-color="#060099"/><stop offset="1" stop-color="#470099"/></linearGradient>
<linearGradient id="a262" gradientUnits="userSpaceOnUse" x1="1595" x2="1807"><stop offset="0" stop-color="#009"/><stop offset=".16" stop-color="#070099"/><stop offset="1" stop-color="#460099"/></linearGradient>
<linearGradient id="a263" gradientUnits="userSpaceOnUse" x1="1597" x2="1806"><stop offset="0" stop-color="#009"/><stop offset=".191" stop-color="#0a0099"/><stop offset="1" stop-color="#450099"/></linearGradient>
<linearGradient id="a264" gradientUnits="userSpaceOnUse" x1="1599" x2="1804"><stop offset="0" stop-color="#009"/><stop offset=".322" stop-color="#130099"/><stop offset="1" stop-color="#409"/></linearGradient>
<linearGradient id="a265" gradientUnits="userSpaceOnUse" x1="1601" x2="1802"><stop offset="0" stop-color="#009"/><stop offset="1" stop-color="#430099"/></linearGradient>
<linearGradient id="a266" gradientUnits="userSpaceOnUse" x1="1603" x2="1800"><stop offset="0" stop-color="#009"/><stop offset="1" stop-color="#410099"/></linearGradient>
<linearGradient id="a267" gradientUnits="userSpaceOnUse" x1="1605" x2="1798"><stop offset="0" stop-color="#009"/><stop offset="1" stop-color="#400099"/></linearGradient>
<linearGradient id="a268" gradientUnits="userSpaceOnUse" x1="1607" x2="1796"><stop offset="0" stop-color="#009"/><stop offset="1" stop-color="#3f0099"/></linearGradient>
<linearGradient id="a269" gradientUnits="userSpaceOnUse" x1="1609" x2="1794"><stop offset="0" stop-color="#009"/><stop offset="1" stop-color="#3e0099"/></linearGradient>
<linearGradient id="a270" gradientUnits="userSpaceOnUse" x1="1611" x2="1792"><stop offset="0" stop-color="#009"/><stop offset="1" stop-color="#3d0099"/></linearGradient>
<linearGradient id="a271" gradientUnits="userSpaceOnUse" x1="1613" x2="1790"><stop offset="0" stop-color="#010099"/><stop offset="1" stop-color="#3c0099"/></linearGradient>
<linearGradient id="a272" gradientUnits="userSpaceOnUse" x1="1615" x2="1788"><stop offset="0" stop-color="#010099"/><stop offset="1" stop-color="#3b0099"/></linearGradient>
<linearGradient id="a273" gradientUnits="userSpaceOnUse" x1="1617" x2="1786"><stop offset="0" stop-color="#020099"/><stop offset="1" stop-color="#3a0099"/></linearGradient>
<linearGradient id="a274" gradientUnits="userSpaceOnUse" x1="1619" x2="1784"><stop offset="0" stop-color="#030099"/><stop offset="1" stop-color="#390099"/></linearGradient>
<linearGradient id="a275" gradientUnits="userSpaceOnUse" x1="1621" x2="1782"><stop offset="0" stop-color="#030099"/><stop offset="1" stop-color="#380099"/></linearGradient>
<linearGradient id="a276" gradientUnits="userSpaceOnUse" x1="1623" x2="1780"><stop offset="0" stop-color="#040099"/><stop offset="1" stop-color="#370099"/></linearGradient>
<linearGradient id="a277" gradientUnits="userSpaceOnUse" x1="1625" x2="1778"><stop offset="0" stop-color="#040099"/><stop offset="1" stop-color="#360099"/></linearGradient>
<linearGradient id="a278" gradientUnits="userSpaceOnUse" x1="1628" x2="1776"><stop offset="0" stop-color="#050099"/><stop offset="1" stop-color="#350099"/></linearGradient>
<linearGradient id="a279" gradientUnits="userSpaceOnUse" x1="1630" x2="1774"><stop offset="0" stop-color="#050099"/><stop offset="1" stop-color="#340099"/></linearGradient>
<linearGradient id="a280" gradientUnits="userSpaceOnUse" x1="1632" x2="1772"><stop offset="0" stop-color="#060099"/><stop offset="1" stop-color="#309"/></linearGradient>
<linearGradient id="a281" gradientUnits="userSpaceOnUse" x1="1635" x2="1770"><stop offset="0" stop-color="#070099"/><stop offset="1" stop-color="#320099"/></linearGradient>
<linearGradient id="a282" gradientUnits="userSpaceOnUse" x1="1637" x2="1769"><stop offset="0" stop-color="#070099"/><stop offset="1" stop-color="#310099"/></linearGradient>
<linearGradient id="a283" gradientUnits="userSpaceOnUse" x1="1638" x2="1767"><stop offset="0" stop-color="#070099"/><stop offset="1" stop-color="#310099"/></linearGradient>
<linearGradient id="a284" gradientUnits="userSpaceOnUse" x1="1641" x2="1765"><stop offset="0" stop-color="#080099"/><stop offset="1" stop-color="#300099"/></linearGradient>
<linearGradient id="a285" gradientUnits="userSpaceOnUse" x1="1643" x2="1763"><stop offset="0" stop-color="#090099"/><stop offset="1" stop-color="#2f0099"/></linearGradient>
<linearGradient id="a286" gradientUnits="userSpaceOnUse" x1="1646" x2="1761"><stop offset="0" stop-color="#090099"/><stop offset="1" stop-color="#2e0099"/></linearGradient>
<linearGradient id="a287" gradientUnits="userSpaceOnUse" x1="1649" x2="1759"><stop offset="0" stop-color="#0a0099"/><stop offset="1" stop-color="#2d0099"/></linearGradient>
<linearGradient id="a288" gradientUnits="userSpaceOnUse" x1="1650" x2="1757"><stop offset="0" stop-color="#0a0099"/><stop offset="1" stop-color="#2c0099"/></linearGradient>
<linearGradient id="a289" gradientUnits="userSpaceOnUse" x1="1653" x2="1755"><stop offset="0" stop-color="#0b0099"/><stop offset="1" stop-color="#2b0099"/></linearGradient>
<linearGradient id="a290" gradientUnits="userSpaceOnUse" x1="1655" x2="1753"><stop offset="0" stop-color="#0c0099"/><stop offset="1" stop-color="#2a0099"/></linearGradient>
<linearGradient id="a291" gradientUnits="userSpaceOnUse" x1="1658" x2="1751"><stop offset="0" stop-color="#0c0099"/><stop offset="1" stop-color="#290099"/></linearGradient>
<linearGradient id="a292" gradientUnits="userSpaceOnUse" x1="1661" x2="1749"><stop offset="0" stop-color="#0d0099"/><stop offset="1" stop-color="#280099"/></linearGradient>
<linearGradient id="a293" gradientUnits="userSpaceOnUse" x1="1663" x2="1747"><stop offset="0" stop-color="#0e0099"/><stop offset="1" stop-color="#270099"/></linearGradient>
<linearGradient id="a294" gradientUnits="userSpaceOnUse" x1="1665" x2="1745"><stop offset="0" stop-color="#0e0099"/><stop offset="1" stop-color="#270099"/></linearGradient>
<linearGradient id="a295" gradientUnits="userSpaceOnUse" x1="1668" x2="1743"><stop offset="0" stop-color="#0f0099"/><stop offset="1" stop-color="#260099"/></linearGradient>
<linearGradient id="a296" gradientUnits="userSpaceOnUse" x1="1670" x2="1741"><stop offset="0" stop-color="#0f0099"/><stop offset="1" stop-color="#250099"/></linearGradient>
<linearGradient id="a297" gradientUnits="userSpaceOnUse" x1="1673" x2="1739"><stop offset="0" stop-color="#100099"/><stop offset="1" stop-color="#240099"/></linearGradient>
<linearGradient id="a298" gradientUnits="userSpaceOnUse" x1="1675" x2="1737"><stop offset="0" stop-color="#109"/><stop offset="1" stop-color="#230099"/></linearGradient>
<linearGradient id="a299" gradientUnits="userSpaceOnUse" x1="1677" x2="1735"><stop offset="0" stop-color="#109"/><stop offset="1" stop-color="#209"/></linearGradient>
<linearGradient id="a300" gradientUnits="userSpaceOnUse" x1="1680" x2="1733"><stop offset="0" stop-color="#120099"/><stop offset="1" stop-color="#209"/></linearGradient>
<linearGradient id="a301" gradientUnits="userSpaceOnUse" x1="1681" x2="1732"><stop offset="0" stop-color="#120099"/><stop offset="1" stop-color="#210099"/></linearGradient>
<linearGradient id="a302" gradientUnits="userSpaceOnUse" x1="1684" x2="1730"><stop offset="0" stop-color="#130099"/><stop offset="1" stop-color="#200099"/></linearGradient>
<linearGradient id="a303" gradientUnits="userSpaceOnUse" x1="1687" x2="1728"><stop offset="0" stop-color="#130099"/><stop offset="1" stop-color="#1f0099"/></linearGradient>
<linearGradient id="a304" gradientUnits="userSpaceOnUse" x1="1689" x2="1726"><stop offset="0" stop-color="#140099"/><stop offset="1" stop-color="#1f0099"/></linearGradient>
<linearGradient id="a305" gradientUnits="userSpaceOnUse" x1="1691" x2="1724"><stop offset="0" stop-color="#140099"/><stop offset="1" stop-color="#1e0099"/></linearGradient>
<linearGradient id="a306" gradientUnits="userSpaceOnUse" x1="1694" x2="1722"><stop offset="0" stop-color="#150099"/><stop offset="1" stop-color="#1d0099"/></linearGradient>
<linearGradient id="a307" gradientUnits="userSpaceOnUse" x1="1697" x2="1720"><stop offset="0" stop-color="#160099"/><stop offset="1" stop-color="#1c0099"/></linearGradient>
<linearGradient id="a308" gradientUnits="userSpaceOnUse" x1="1699" x2="1718"><stop offset="0" stop-color="#160099"/><stop offset="1" stop-color="#1c0099"/></linearGradient>
<linearGradient id="a309" gradientUnits="userSpaceOnUse" x1="1702" x2="1716"><stop offset="0" stop-color="#170099"/><stop offset="1" stop-color="#1b0099"/></linearGradient>
<linearGradient id="a310" gradientUnits="userSpaceOnUse" x1="1705" x2="1715"><stop offset="0" stop-color="#170099"/><stop offset="1" stop-color="#1a0099"/></linearGradient>
<linearGradient id="b0" gradientUnits="userSpaceOnUse" x1="1524" x2="1540"><stop offset="0" stop-color="#0f0"/><stop offset=".375" stop-color="#06ff00"/><stop offset="1" stop-color="#18ff00"/></linearGradient>
<linearGradient id="b1" gradientUnits="userSpaceOnUse" x1="1524" x2="1561"><stop offset="0" stop-color="#00ff04"/><stop offset=".162" stop-color="#06ff03"/><stop offset="1" stop-color="#41ff00"/></linearGradient>
<linearGradient id="b2" gradientUnits="userSpaceOnUse" x1="1525" x2="1582"><stop offset="0" stop-color="#00ff07"/><stop offset=".14" stop-color="#0aff06"/><stop offset="1" stop-color="#6dff00"/></linearGradient>
<linearGradient id="b3" gradientUnits="userSpaceOnUse" x1="1525" x2="1604"><stop offset="0" stop-color="#00ff0a"/><stop offset=".076" stop-color="#06ff09"/><stop offset=".696" stop-color="#69ff02"/><stop offset="1" stop-color="#a1ff00"/></linearGradient>
<linearGradient id="b4" gradientUnits="userSpaceOnUse" x1="1525" x2="1625"><stop offset="0" stop-color="#00ff0e"/><stop offset=".06" stop-color="#06ff0d"/><stop offset=".54" stop-color="#66ff06"/><stop offset=".96" stop-color="#ceff00"/><stop offset="1" stop-color="#d9ff00"/></linearGradient>
<linearGradient id="b5" gradientUnits="userSpaceOnUse" x1="1526" x2="1647"><stop offset="0" stop-color="#0f1"/><stop offset=".058" stop-color="#09ff10"/><stop offset=".455" stop-color="#6bff09"/><stop offset=".793" stop-color="#d1ff02"/><stop offset=".934" stop-color="#fffc00"/><stop offset="1" stop-color="#ffe600"/></linearGradient>
<linearGradient id="b6" gradientUnits="userSpaceOnUse" x1="1526" x2="1668"><stop offset="0" stop-color="#00ff14"/><stop offset=".042" stop-color="#06ff14"/><stop offset=".38" stop-color="#68ff0d"/><stop offset=".669" stop-color="#ceff07"/><stop offset=".789" stop-color="#ffff04"/><stop offset=".944" stop-color="#ffc800"/><stop offset="1" stop-color="#ffb800"/></linearGradient>
<linearGradient id="b7" gradientUnits="userSpaceOnUse" x1="1526" x2="1689"><stop offset="0" stop-color="#00ff18"/><stop offset=".031" stop-color="#04ff17"/><stop offset=".325" stop-color="#6f1"/><stop offset=".577" stop-color="#ccff0b"/><stop offset=".687" stop-color="#fffe08"/><stop offset=".822" stop-color="#ffc703"/><stop offset="1" stop-color="#ff9600"/></linearGradient>
<linearGradient id="b8" gradientUnits="userSpaceOnUse" x1="1527" x2="1711"><stop offset="0" stop-color="#00ff1b"/><stop offset=".038" stop-color="#09ff1a"/><stop offset=".293" stop-color="#6aff15"/><stop offset=".516" stop-color="#d2ff0f"/><stop offset=".603" stop-color="#fffe0c"/><stop offset=".723" stop-color="#ffc707"/><stop offset=".88" stop-color="#ff9501"/><stop offset="1" stop-color="#ff7a00"/></linearGradient>
<linearGradient id="b9" gradientUnits="userSpaceOnUse" x1="1527" x2="1732"><stop offset="0" stop-color="#00ff1f"/><stop offset=".029" stop-color="#06ff1e"/><stop offset=".259" stop-color="#68ff19"/><stop offset=".459" stop-color="#cfff13"/><stop offset=".541" stop-color="#fffd11"/><stop offset=".649" stop-color="#ffc60a"/><stop offset=".79" stop-color="#ff9504"/><stop offset=".99" stop-color="#ff6700"/><stop offset="1" stop-color="#ff6500"/></linearGradient>
<linearGradient id="b10" gradientUnits="userSpaceOnUse" x1="1527" x2="1754"><stop offset="0" stop-color="#0f2"/><stop offset=".022" stop-color="#04ff22"/><stop offset=".229" stop-color="#65ff1d"/><stop offset=".41" stop-color="#cdff18"/><stop offset=".489" stop-color="#fffc15"/><stop offset=".586" stop-color="#ffc50e"/><stop offset=".714" stop-color="#ff9407"/><stop offset=".894" stop-color="#ff6701"/><stop offset="1" stop-color="#ff5400"/></linearGradient>
<linearGradient id="b11" gradientUnits="userSpaceOnUse" x1="1528" x2="1775"><stop offset="0" stop-color="#00ff26"/><stop offset=".028" stop-color="#09ff25"/><stop offset=".219" stop-color="#6cff21"/><stop offset=".381" stop-color="#d3ff1c"/><stop offset=".441" stop-color="#ffff1a"/><stop offset=".526" stop-color="#ffc912"/><stop offset=".644" stop-color="#ff960b"/><stop offset=".806" stop-color="#ff6904"/><stop offset="1" stop-color="#ff4600"/></linearGradient>
<linearGradient id="b12" gradientUnits="userSpaceOnUse" x1="1528" x2="1796"><stop offset="0" stop-color="#00ff29"/><stop offset=".022" stop-color="#07ff29"/><stop offset=".198" stop-color="#69ff25"/><stop offset=".347" stop-color="#d0ff21"/><stop offset=".407" stop-color="#fffe1f"/><stop offset=".485" stop-color="#ffc816"/><stop offset=".593" stop-color="#ff960e"/><stop offset=".743" stop-color="#ff6806"/><stop offset=".955" stop-color="#ff4000"/><stop offset="1" stop-color="#ff3a00"/></linearGradient>
<linearGradient id="b13" gradientUnits="userSpaceOnUse" x1="1528" x2="1818"><stop offset="0" stop-color="#00ff2d"/><stop offset=".017" stop-color="#04ff2d"/><stop offset=".179" stop-color="#67ff29"/><stop offset=".317" stop-color="#ceff25"/><stop offset=".376" stop-color="#fffe23"/><stop offset=".448" stop-color="#ffc81a"/><stop offset=".545" stop-color="#ff9611"/><stop offset=".679" stop-color="#ff6909"/><stop offset=".872" stop-color="#ff4102"/><stop offset="1" stop-color="#ff2f00"/></linearGradient>
<linearGradient id="b14" gradientUnits="userSpaceOnUse" x1="1529" x2="1839"><stop offset="0" stop-color="#00ff30"/><stop offset=".019" stop-color="#07ff30"/><stop offset=".168" stop-color="#69ff2d"/><stop offset=".297" stop-color="#d1ff2a"/><stop offset=".348" stop-color="#fffd28"/><stop offset=".416" stop-color="#ffc71e"/><stop offset=".506" stop-color="#ff9614"/><stop offset=".632" stop-color="#ff690c"/><stop offset=".813" stop-color="#ff4104"/><stop offset="1" stop-color="#ff2700"/></linearGradient>
<linearGradient id="b15" gradientUnits="userSpaceOnUse" x1="1529" x2="1861"><stop offset="0" stop-color="#00ff34"/><stop offset=".018" stop-color="#07ff34"/><stop offset=".157" stop-color="#69ff31"/><stop offset=".274" stop-color="#ceff2e"/><stop offset=".325" stop-color="#fffd2c"/><stop offset=".389" stop-color="#ffc621"/><stop offset=".473" stop-color="#ff9517"/><stop offset=".59" stop-color="#ff680e"/><stop offset=".759" stop-color="#ff4006"/><stop offset="1" stop-color="#ff1f00"/></linearGradient>
<linearGradient id="b16" gradientUnits="userSpaceOnUse" x1="1529" x2="1882"><stop offset="0" stop-color="#00ff38"/><stop offset=".014" stop-color="#04ff38"/><stop offset=".144" stop-color="#66ff35"/><stop offset=".255" stop-color="#cf3"/><stop offset=".303" stop-color="#ffff32"/><stop offset=".363" stop-color="#ffc826"/><stop offset=".442" stop-color="#ff961b"/><stop offset=".552" stop-color="#ff6911"/><stop offset=".711" stop-color="#ff4008"/><stop offset=".952" stop-color="#ff1d00"/><stop offset="1" stop-color="#ff1800"/></linearGradient>
<linearGradient id="b17" gradientUnits="userSpaceOnUse" x1="1529" x2="1903"><stop offset="0" stop-color="#00ff3c"/><stop offset=".013" stop-color="#04ff3c"/><stop offset=".136" stop-color="#66ff3a"/><stop offset=".241" stop-color="#ccff38"/><stop offset=".286" stop-color="#ffff36"/><stop offset=".342" stop-color="#ffc72a"/><stop offset=".417" stop-color="#ff951e"/><stop offset=".521" stop-color="#ff6813"/><stop offset=".671" stop-color="#ff400a"/><stop offset=".898" stop-color="#ff1d02"/><stop offset="1" stop-color="#ff1200"/></linearGradient>
<linearGradient id="b18" gradientUnits="userSpaceOnUse" x1="1530" x2="1925"><stop offset="0" stop-color="#00ff3f"/><stop offset=".015" stop-color="#07ff3f"/><stop offset=".129" stop-color="#68ff3e"/><stop offset=".228" stop-color="#cfff3c"/><stop offset=".268" stop-color="#fffe3b"/><stop offset=".322" stop-color="#ffc72d"/><stop offset=".392" stop-color="#ff9521"/><stop offset=".491" stop-color="#ff6716"/><stop offset=".633" stop-color="#ff3f0c"/><stop offset=".848" stop-color="#ff1c03"/><stop offset="1" stop-color="#ff0d00"/></linearGradient>
<linearGradient id="b19" gradientUnits="userSpaceOnUse" x1="1530" x2="1946"><stop offset="0" stop-color="#00ff43"/><stop offset=".012" stop-color="#04ff43"/><stop offset=".12" stop-color="#65ff42"/><stop offset=".214" stop-color="#cdff41"/><stop offset=".255" stop-color="#fffd40"/><stop offset=".305" stop-color="#ffc631"/><stop offset=".373" stop-color="#ff9424"/><stop offset=".466" stop-color="#ff6718"/><stop offset=".601" stop-color="#ff3f0e"/><stop offset=".805" stop-color="#ff1c05"/><stop offset="1" stop-color="#ff0800"/></linearGradient>
<linearGradient id="b20" gradientUnits="userSpaceOnUse" x1="1530" x2="1968"><stop offset="0" stop-color="#00ff47"/><stop offset=".011" stop-color="#04ff47"/><stop offset=".114" stop-color="#65ff46"/><stop offset=".203" stop-color="#cdff46"/><stop offset=".242" stop-color="#fffd45"/><stop offset=".29" stop-color="#ffc535"/><stop offset=".354" stop-color="#ff9327"/><stop offset=".443" stop-color="#ff661b"/><stop offset=".571" stop-color="#ff3e10"/><stop offset=".765" stop-color="#ff1c06"/><stop offset="1" stop-color="#ff0400"/></linearGradient>
<linearGradient id="b21" gradientUnits="userSpaceOnUse" x1="1531" x2="1989"><stop offset="0" stop-color="#00ff4b"/><stop offset=".013" stop-color="#07ff4b"/><stop offset=".111" stop-color="#6aff4b"/><stop offset=".194" stop-color="#d0ff4b"/><stop offset=".227" stop-color="#ffff4b"/><stop offset=".273" stop-color="#ffc73a"/><stop offset=".332" stop-color="#ff962c"/><stop offset=".415" stop-color="#ff691e"/><stop offset=".535" stop-color="#ff4012"/><stop offset=".716" stop-color="#ff1d08"/><stop offset="1" stop-color="#f00"/></linearGradient>
<linearGradient id="b22" gradientUnits="userSpaceOnUse" x1="1531" x2="1988"><stop offset="0" stop-color="#00ff4f"/><stop offset=".011" stop-color="#05ff4f"/><stop offset=".107" stop-color="#65ff4f"/><stop offset=".19" stop-color="#cbff4f"/><stop offset=".228" stop-color="#ffff50"/><stop offset=".271" stop-color="#ffc93f"/><stop offset=".33" stop-color="#ff972f"/><stop offset=".411" stop-color="#ff6a21"/><stop offset=".53" stop-color="#ff4115"/><stop offset=".707" stop-color="#ff1e0a"/><stop offset=".993" stop-color="#ff0001"/><stop offset="1" stop-color="#f00"/></linearGradient>
<linearGradient id="b23" gradientUnits="userSpaceOnUse" x1="1531" x2="1986"><stop offset="0" stop-color="#00ff53"/><stop offset=".011" stop-color="#04ff53"/><stop offset=".108" stop-color="#65ff54"/><stop offset=".191" stop-color="#cbff54"/><stop offset=".229" stop-color="#fffe54"/><stop offset=".273" stop-color="#ffc843"/><stop offset=".332" stop-color="#ff9633"/><stop offset=".413" stop-color="#ff6924"/><stop offset=".532" stop-color="#ff4117"/><stop offset=".71" stop-color="#ff1e0b"/><stop offset=".996" stop-color="#ff0002"/><stop offset="1" stop-color="#ff0002"/></linearGradient>
<linearGradient id="b24" gradientUnits="userSpaceOnUse" x1="1532" x2="1984"><stop offset="0" stop-color="#00ff57"/><stop offset=".013" stop-color="#07ff57"/><stop offset=".111" stop-color="#69ff58"/><stop offset=".195" stop-color="#d1ff59"/><stop offset=".228" stop-color="#fffd59"/><stop offset=".272" stop-color="#ffc747"/><stop offset=".332" stop-color="#ff9536"/><stop offset=".414" stop-color="#ff6927"/><stop offset=".533" stop-color="#ff4019"/><stop offset=".712" stop-color="#ff1d0d"/><stop offset=".996" stop-color="#ff0003"/><stop offset="1" stop-color="#ff0003"/></linearGradient>
<linearGradient id="b25" gradientUnits="userSpaceOnUse" x1="1532" x2="1982"><stop offset="0" stop-color="#00ff5b"/><stop offset=".011" stop-color="#05ff5b"/><stop offset=".109" stop-color="#67ff5d"/><stop offset=".193" stop-color="#cfff5e"/><stop offset=".229" stop-color="#fffd5e"/><stop offset=".273" stop-color="#ffc74b"/><stop offset=".333" stop-color="#ff9539"/><stop offset=".416" stop-color="#ff6829"/><stop offset=".536" stop-color="#ff401b"/><stop offset=".718" stop-color="#ff1d0e"/><stop offset="1" stop-color="#ff0004"/></linearGradient>
<linearGradient id="b26" gradientUnits="userSpaceOnUse" x1="1532" x2="1980"><stop offset="0" stop-color="#00ff5f"/><stop offset=".011" stop-color="#04ff5f"/><stop offset=".109" stop-color="#66ff61"/><stop offset=".192" stop-color="#ccff64"/><stop offset=".23" stop-color="#fffc64"/><stop offset=".275" stop-color="#ffc64f"/><stop offset=".335" stop-color="#ff943d"/><stop offset=".417" stop-color="#ff672c"/><stop offset=".538" stop-color="#ff3f1d"/><stop offset=".721" stop-color="#ff1c10"/><stop offset="1" stop-color="#ff0005"/></linearGradient>
<linearGradient id="b27" gradientUnits="userSpaceOnUse" x1="1533" x2="1978"><stop offset="0" stop-color="#00ff63"/><stop offset=".013" stop-color="#07ff64"/><stop offset=".11" stop-color="#69ff66"/><stop offset=".193" stop-color="#cfff69"/><stop offset=".227" stop-color="#ffff6a"/><stop offset=".272" stop-color="#ffc854"/><stop offset=".333" stop-color="#ff9541"/><stop offset=".416" stop-color="#ff682f"/><stop offset=".535" stop-color="#ff401f"/><stop offset=".717" stop-color="#ff1d12"/><stop offset=".998" stop-color="#ff0006"/><stop offset="1" stop-color="#ff0006"/></linearGradient>
<linearGradient id="b28" gradientUnits="userSpaceOnUse" x1="1533" x2="1976"><stop offset="0" stop-color="#00ff68"/><stop offset=".011" stop-color="#05ff68"/><stop offset=".108" stop-color="#66ff6b"/><stop offset=".192" stop-color="#ccff6e"/><stop offset=".228" stop-color="#fffe6f"/><stop offset=".273" stop-color="#ffc759"/><stop offset=".334" stop-color="#ff9444"/><stop offset=".418" stop-color="#ff6732"/><stop offset=".537" stop-color="#ff3f22"/><stop offset=".72" stop-color="#ff1c13"/><stop offset="1" stop-color="#ff0008"/></linearGradient>
<linearGradient id="b29" gradientUnits="userSpaceOnUse" x1="1533" x2="1974"><stop offset="0" stop-color="#00ff6c"/><stop offset=".011" stop-color="#04ff6c"/><stop offset=".109" stop-color="#66ff70"/><stop offset=".193" stop-color="#cdff73"/><stop offset=".229" stop-color="#fffe74"/><stop offset=".274" stop-color="#ffc65d"/><stop offset=".333" stop-color="#ff9548"/><stop offset=".417" stop-color="#ff6835"/><stop offset=".537" stop-color="#ff3f24"/><stop offset=".719" stop-color="#ff1d15"/><stop offset="1" stop-color="#ff0009"/></linearGradient>
<linearGradient id="b30" gradientUnits="userSpaceOnUse" x1="1534" x2="1972"><stop offset="0" stop-color="#00ff70"/><stop offset=".014" stop-color="#08ff71"/><stop offset=".11" stop-color="#68ff74"/><stop offset=".192" stop-color="#cdff78"/><stop offset=".228" stop-color="#fffd7a"/><stop offset=".274" stop-color="#ffc661"/><stop offset=".333" stop-color="#ff944c"/><stop offset=".418" stop-color="#ff6738"/><stop offset=".539" stop-color="#ff3f26"/><stop offset=".721" stop-color="#ff1c17"/><stop offset="1" stop-color="#ff000a"/></linearGradient>
<linearGradient id="b31" gradientUnits="userSpaceOnUse" x1="1534" x2="1970"><stop offset="0" stop-color="#00ff74"/><stop offset=".011" stop-color="#05ff75"/><stop offset=".108" stop-color="#65ff79"/><stop offset=".19" stop-color="#caff7e"/><stop offset=".229" stop-color="#fffc7f"/><stop offset=".275" stop-color="#ffc565"/><stop offset=".335" stop-color="#ff944f"/><stop offset=".417" stop-color="#ff673b"/><stop offset=".537" stop-color="#ff4029"/><stop offset=".718" stop-color="#ff1d19"/><stop offset="1" stop-color="#ff000b"/></linearGradient>
<linearGradient id="b32" gradientUnits="userSpaceOnUse" x1="1534" x2="1968"><stop offset="0" stop-color="#00ff79"/><stop offset=".012" stop-color="#04ff79"/><stop offset=".108" stop-color="#65ff7e"/><stop offset=".191" stop-color="#cbff83"/><stop offset=".228" stop-color="#ffff86"/><stop offset=".272" stop-color="#ffc96c"/><stop offset=".332" stop-color="#ff9654"/><stop offset=".415" stop-color="#ff693e"/><stop offset=".532" stop-color="#ff412b"/><stop offset=".712" stop-color="#ff1e1b"/><stop offset=".995" stop-color="#ff000d"/><stop offset="1" stop-color="#ff000d"/></linearGradient>
<linearGradient id="b33" gradientUnits="userSpaceOnUse" x1="1535" x2="1966"><stop offset="0" stop-color="#00ff7d"/><stop offset=".014" stop-color="#08ff7e"/><stop offset=".111" stop-color="#6aff83"/><stop offset=".195" stop-color="#d1ff89"/><stop offset=".227" stop-color="#fffe8b"/><stop offset=".271" stop-color="#ffc870"/><stop offset=".332" stop-color="#ff9658"/><stop offset=".415" stop-color="#ff6841"/><stop offset=".534" stop-color="#ff402e"/><stop offset=".715" stop-color="#ff1d1c"/><stop offset=".998" stop-color="#ff000e"/><stop offset="1" stop-color="#ff000e"/></linearGradient>
<linearGradient id="b34" gradientUnits="userSpaceOnUse" x1="1535" x2="1965"><stop offset="0" stop-color="#00ff82"/><stop offset=".012" stop-color="#05ff82"/><stop offset=".109" stop-color="#67ff88"/><stop offset=".193" stop-color="#ceff8e"/><stop offset=".228" stop-color="#fffe91"/><stop offset=".272" stop-color="#ffc775"/><stop offset=".333" stop-color="#ff955b"/><stop offset=".416" stop-color="#ff6744"/><stop offset=".537" stop-color="#ff3f2f"/><stop offset=".719" stop-color="#ff1c1e"/><stop offset=".998" stop-color="#ff000f"/><stop offset="1" stop-color="#ff000f"/></linearGradient>
<linearGradient id="b35" gradientUnits="userSpaceOnUse" x1="1535" x2="1963"><stop offset="0" stop-color="#00ff86"/><stop offset=".012" stop-color="#04ff87"/><stop offset=".11" stop-color="#67ff8d"/><stop offset=".194" stop-color="#cfff94"/><stop offset=".229" stop-color="#fffd96"/><stop offset=".273" stop-color="#ffc779"/><stop offset=".334" stop-color="#ff945f"/><stop offset=".418" stop-color="#ff6747"/><stop offset=".54" stop-color="#ff3f32"/><stop offset=".722" stop-color="#ff1c1f"/><stop offset="1" stop-color="#ff0010"/></linearGradient>
<linearGradient id="b36" gradientUnits="userSpaceOnUse" x1="1536" x2="1961"><stop offset="0" stop-color="#00ff8b"/><stop offset=".012" stop-color="#06ff8b"/><stop offset=".108" stop-color="#67ff92"/><stop offset=".191" stop-color="#cf9"/><stop offset=".228" stop-color="#fffd9c"/><stop offset=".273" stop-color="#ffc67e"/><stop offset=".334" stop-color="#ff9462"/><stop offset=".419" stop-color="#ff664a"/><stop offset=".541" stop-color="#ff3e34"/><stop offset=".727" stop-color="#ff1b21"/><stop offset="1" stop-color="#ff0012"/></linearGradient>
<linearGradient id="b37" gradientUnits="userSpaceOnUse" x1="1536" x2="1959"><stop offset="0" stop-color="#00ff8f"/><stop offset=".012" stop-color="#05ff90"/><stop offset=".109" stop-color="#67ff97"/><stop offset=".191" stop-color="#ccff9f"/><stop offset=".227" stop-color="#ffffa3"/><stop offset=".272" stop-color="#ffc884"/><stop offset=".331" stop-color="#ff9668"/><stop offset=".414" stop-color="#ff694e"/><stop offset=".532" stop-color="#ff4138"/><stop offset=".712" stop-color="#ff1d24"/><stop offset=".995" stop-color="#ff0013"/><stop offset="1" stop-color="#ff0013"/></linearGradient>
<linearGradient id="b38" gradientUnits="userSpaceOnUse" x1="1536" x2="1957"><stop offset="0" stop-color="#00ff94"/><stop offset=".012" stop-color="#05ff95"/><stop offset=".109" stop-color="#66ff9d"/><stop offset=".192" stop-color="#cdffa5"/><stop offset=".228" stop-color="#ffffa9"/><stop offset=".273" stop-color="#ffc788"/><stop offset=".333" stop-color="#ff956c"/><stop offset=".416" stop-color="#ff6851"/><stop offset=".534" stop-color="#ff403a"/><stop offset=".715" stop-color="#ff1d25"/><stop offset=".998" stop-color="#ff0014"/><stop offset="1" stop-color="#ff0014"/></linearGradient>
<linearGradient id="b39" gradientUnits="userSpaceOnUse" x1="1537" x2="1955"><stop offset="0" stop-color="#0f9"/><stop offset=".012" stop-color="#06ff9a"/><stop offset=".11" stop-color="#69ffa2"/><stop offset=".194" stop-color="#d0ffab"/><stop offset=".227" stop-color="#fffeaf"/><stop offset=".273" stop-color="#ffc68d"/><stop offset=".333" stop-color="#ff956f"/><stop offset=".416" stop-color="#ff6754"/><stop offset=".536" stop-color="#ff3f3c"/><stop offset=".718" stop-color="#ff1c27"/><stop offset=".998" stop-color="#ff0016"/><stop offset="1" stop-color="#ff0016"/></linearGradient>
<linearGradient id="b40" gradientUnits="userSpaceOnUse" x1="1537" x2="1953"><stop offset="0" stop-color="#00ff9d"/><stop offset=".012" stop-color="#05ff9e"/><stop offset=".108" stop-color="#66ffa7"/><stop offset=".192" stop-color="#cdffb1"/><stop offset=".228" stop-color="#fffdb4"/><stop offset=".272" stop-color="#ffc893"/><stop offset=".332" stop-color="#ff9674"/><stop offset=".413" stop-color="#ff6958"/><stop offset=".531" stop-color="#ff4140"/><stop offset=".709" stop-color="#ff1e2a"/><stop offset=".993" stop-color="#ff0017"/><stop offset="1" stop-color="#ff0017"/></linearGradient>
<linearGradient id="b41" gradientUnits="userSpaceOnUse" x1="1537" x2="1951"><stop offset="0" stop-color="#00ffa2"/><stop offset=".012" stop-color="#05ffa3"/><stop offset=".109" stop-color="#66ffad"/><stop offset=".191" stop-color="#caffb6"/><stop offset=".229" stop-color="#fffdba"/><stop offset=".273" stop-color="#ffc798"/><stop offset=".333" stop-color="#ff9578"/><stop offset=".415" stop-color="#ff685b"/><stop offset=".534" stop-color="#ff4042"/><stop offset=".715" stop-color="#ff1d2b"/><stop offset=".998" stop-color="#ff0019"/><stop offset="1" stop-color="#ff0018"/></linearGradient>
<linearGradient id="b42" gradientUnits="userSpaceOnUse" x1="1538" x2="1949"><stop offset="0" stop-color="#00ffa7"/><stop offset=".012" stop-color="#06ffa8"/><stop offset=".109" stop-color="#68ffb2"/><stop offset=".192" stop-color="#ceffbd"/><stop offset=".226" stop-color="#feffc2"/><stop offset=".273" stop-color="#ffc79d"/><stop offset=".333" stop-color="#ff947c"/><stop offset=".416" stop-color="#ff675e"/><stop offset=".535" stop-color="#ff4044"/><stop offset=".718" stop-color="#ff1c2d"/><stop offset=".998" stop-color="#ff001a"/><stop offset="1" stop-color="#ff001a"/></linearGradient>
<linearGradient id="b43" gradientUnits="userSpaceOnUse" x1="1538" x2="1947"><stop offset="0" stop-color="#00ffac"/><stop offset=".012" stop-color="#05ffad"/><stop offset=".11" stop-color="#68ffb8"/><stop offset=".193" stop-color="#ceffc3"/><stop offset=".227" stop-color="#ffffc8"/><stop offset=".271" stop-color="#ffc8a3"/><stop offset=".33" stop-color="#ff9782"/><stop offset=".411" stop-color="#ff6a63"/><stop offset=".528" stop-color="#ff4248"/><stop offset=".704" stop-color="#ff1f30"/><stop offset=".99" stop-color="#ff001c"/><stop offset="1" stop-color="#ff001b"/></linearGradient>
<linearGradient id="b44" gradientUnits="userSpaceOnUse" x1="1538" x2="1945"><stop offset="0" stop-color="#00ffb1"/><stop offset=".012" stop-color="#05ffb2"/><stop offset=".108" stop-color="#65ffbd"/><stop offset=".192" stop-color="#cbffc9"/><stop offset=".229" stop-color="#fffece"/><stop offset=".273" stop-color="#ffc8a8"/><stop offset=".332" stop-color="#ff9686"/><stop offset=".413" stop-color="#ff6966"/><stop offset=".531" stop-color="#ff414a"/><stop offset=".71" stop-color="#ff1e32"/><stop offset=".995" stop-color="#ff001d"/><stop offset="1" stop-color="#ff001d"/></linearGradient>
<linearGradient id="b45" gradientUnits="userSpaceOnUse" x1="1539" x2="1943"><stop offset="0" stop-color="#00ffb6"/><stop offset=".012" stop-color="#06ffb8"/><stop offset=".109" stop-color="#67ffc3"/><stop offset=".193" stop-color="#cfffd0"/><stop offset=".228" stop-color="#fffed4"/><stop offset=".272" stop-color="#ffc7ad"/><stop offset=".332" stop-color="#ff958a"/><stop offset=".413" stop-color="#ff696a"/><stop offset=".532" stop-color="#ff404d"/><stop offset=".713" stop-color="#ff1d33"/><stop offset=".995" stop-color="#ff001e"/><stop offset="1" stop-color="#ff001e"/></linearGradient>
<linearGradient id="b46" gradientUnits="userSpaceOnUse" x1="1539" x2="1941"><stop offset="0" stop-color="#0fb"/><stop offset=".012" stop-color="#06ffbd"/><stop offset=".109" stop-color="#67ffc9"/><stop offset=".192" stop-color="#ccffd6"/><stop offset=".229" stop-color="#fffdda"/><stop offset=".274" stop-color="#ffc6b2"/><stop offset=".333" stop-color="#ff958e"/><stop offset=".415" stop-color="#ff686d"/><stop offset=".535" stop-color="#ff404f"/><stop offset=".716" stop-color="#ff1d35"/><stop offset=".998" stop-color="#ff0020"/><stop offset="1" stop-color="#ff0020"/></linearGradient>
<linearGradient id="b47" gradientUnits="userSpaceOnUse" x1="1539" x2="1939"><stop offset="0" stop-color="#00ffc0"/><stop offset=".013" stop-color="#05ffc2"/><stop offset=".11" stop-color="#67ffcf"/><stop offset=".193" stop-color="#ccffdc"/><stop offset=".228" stop-color="#feffe3"/><stop offset=".275" stop-color="#ffc5b7"/><stop offset=".335" stop-color="#ff9491"/><stop offset=".417" stop-color="#ff6770"/><stop offset=".537" stop-color="#ff3f51"/><stop offset=".72" stop-color="#ff1c37"/><stop offset="1" stop-color="#ff0021"/></linearGradient>
<linearGradient id="b48" gradientUnits="userSpaceOnUse" x1="1539" x2="1937"><stop offset="0" stop-color="#00ffc5"/><stop offset=".013" stop-color="#04ffc7"/><stop offset=".111" stop-color="#67ffd4"/><stop offset=".193" stop-color="#cdffe3"/><stop offset=".229" stop-color="#ffffe9"/><stop offset=".274" stop-color="#ffc7be"/><stop offset=".334" stop-color="#ff9597"/><stop offset=".417" stop-color="#ff6874"/><stop offset=".535" stop-color="#ff4055"/><stop offset=".716" stop-color="#ff1d39"/><stop offset=".997" stop-color="#ff0023"/><stop offset="1" stop-color="#ff0023"/></linearGradient>
<linearGradient id="b49" gradientUnits="userSpaceOnUse" x1="1540" x2="1935"><stop offset="0" stop-color="#00ffcb"/><stop offset=".013" stop-color="#06ffcd"/><stop offset=".109" stop-color="#66ffda"/><stop offset=".192" stop-color="#cdffe9"/><stop offset=".228" stop-color="#fffef0"/><stop offset=".271" stop-color="#ffc9c5"/><stop offset=".329" stop-color="#ff989e"/><stop offset=".41" stop-color="#ff6a7a"/><stop offset=".527" stop-color="#ff4259"/><stop offset=".704" stop-color="#ff1f3d"/><stop offset=".99" stop-color="#ff0025"/><stop offset="1" stop-color="#ff0024"/></linearGradient>
<linearGradient id="b50" gradientUnits="userSpaceOnUse" x1="1540" x2="1933"><stop offset="0" stop-color="#00ffd0"/><stop offset=".013" stop-color="#05ffd2"/><stop offset=".109" stop-color="#66ffe0"/><stop offset=".193" stop-color="#cefff0"/><stop offset=".229" stop-color="#fffef6"/><stop offset=".272" stop-color="#ffc8ca"/><stop offset=".331" stop-color="#ff97a2"/><stop offset=".412" stop-color="#ff6a7d"/><stop offset=".529" stop-color="#ff425c"/><stop offset=".707" stop-color="#ff1e3f"/><stop offset=".992" stop-color="#ff0026"/><stop offset="1" stop-color="#ff0026"/></linearGradient>
<linearGradient id="b51" gradientUnits="userSpaceOnUse" x1="1540" x2="1931"><stop offset="0" stop-color="#00ffd5"/><stop offset=".01" stop-color="#02ffd7"/><stop offset=".107" stop-color="#63ffe6"/><stop offset=".192" stop-color="#cafff6"/><stop offset=".23" stop-color="#fffdfd"/><stop offset=".274" stop-color="#ffc8d0"/><stop offset=".332" stop-color="#ff96a6"/><stop offset=".414" stop-color="#ff6980"/><stop offset=".532" stop-color="#ff415e"/><stop offset=".711" stop-color="#ff1e41"/><stop offset=".995" stop-color="#ff0028"/><stop offset="1" stop-color="#ff0027"/></linearGradient>
<linearGradient id="b52" gradientUnits="userSpaceOnUse" x1="1541" x2="1929"><stop offset="0" stop-color="#00ffdb"/><stop offset=".013" stop-color="#06ffdd"/><stop offset=".111" stop-color="#69ffed"/><stop offset=".193" stop-color="#cefffd"/><stop offset=".235" stop-color="#fff5fd"/><stop offset=".281" stop-color="#ffbfce"/><stop offset=".343" stop-color="#ff8ea4"/><stop offset=".43" stop-color="#ff627e"/><stop offset=".557" stop-color="#ff3a5c"/><stop offset=".75" stop-color="#ff183e"/><stop offset="1" stop-color="#ff0029"/></linearGradient>
<linearGradient id="b53" gradientUnits="userSpaceOnUse" x1="1541" x2="1927"><stop offset="0" stop-color="#00ffe1"/><stop offset=".013" stop-color="#05ffe2"/><stop offset=".109" stop-color="#65fff3"/><stop offset=".184" stop-color="#bffcff"/><stop offset=".241" stop-color="#ffedfd"/><stop offset=".29" stop-color="#ffb7cd"/><stop offset=".355" stop-color="#ff87a3"/><stop offset=".446" stop-color="#ff5c7c"/><stop offset=".578" stop-color="#ff365a"/><stop offset=".782" stop-color="#ff143d"/><stop offset="1" stop-color="#ff002b"/></linearGradient>
<linearGradient id="b54" gradientUnits="userSpaceOnUse" x1="1541" x2="1925"><stop offset="0" stop-color="#00ffe6"/><stop offset=".01" stop-color="#02ffe8"/><stop offset=".107" stop-color="#62fff8"/><stop offset=".159" stop-color="#9dfbff"/><stop offset=".247" stop-color="#ffe6fd"/><stop offset=".297" stop-color="#ffb2ce"/><stop offset=".365" stop-color="#ff82a2"/><stop offset=".461" stop-color="#ff577b"/><stop offset=".602" stop-color="#ff3159"/><stop offset=".82" stop-color="#ff103b"/><stop offset="1" stop-color="#ff002c"/></linearGradient>
<linearGradient id="b55" gradientUnits="userSpaceOnUse" x1="1542" x2="1923"><stop offset="0" stop-color="#00ffec"/><stop offset=".013" stop-color="#06ffee"/><stop offset=".121" stop-color="#72fcff"/><stop offset=".252" stop-color="#ffdefd"/><stop offset=".304" stop-color="#fac"/><stop offset=".375" stop-color="#ff7ba1"/><stop offset=".475" stop-color="#ff527a"/><stop offset=".625" stop-color="#ff2c57"/><stop offset=".858" stop-color="#ff0c39"/><stop offset="1" stop-color="#ff002e"/></linearGradient>
<linearGradient id="b56" gradientUnits="userSpaceOnUse" x1="1542" x2="1921"><stop offset="0" stop-color="#00fff2"/><stop offset=".013" stop-color="#05fff4"/><stop offset=".092" stop-color="#52fcff"/><stop offset=".259" stop-color="#ffd7fd"/><stop offset=".314" stop-color="#ffa3cb"/><stop offset=".388" stop-color="#ff759f"/><stop offset=".493" stop-color="#ff4c78"/><stop offset=".652" stop-color="#ff2755"/><stop offset=".902" stop-color="#ff0837"/><stop offset="1" stop-color="#ff002f"/></linearGradient>
<linearGradient id="b57" gradientUnits="userSpaceOnUse" x1="1542" x2="1919"><stop offset="0" stop-color="#00fff7"/><stop offset=".011" stop-color="#02fff9"/><stop offset=".069" stop-color="#39faff"/><stop offset=".244" stop-color="#ead7ff"/><stop offset=".265" stop-color="#ffd1fd"/><stop offset=".321" stop-color="#ff9ecc"/><stop offset=".398" stop-color="#ff719f"/><stop offset=".509" stop-color="#ff4777"/><stop offset=".674" stop-color="#ff2354"/><stop offset=".939" stop-color="#ff0436"/><stop offset="1" stop-color="#ff0031"/></linearGradient>
<linearGradient id="b58" gradientUnits="userSpaceOnUse" x1="1543" x2="1917"><stop offset="0" stop-color="#00fffd"/><stop offset=".013" stop-color="#06feff"/><stop offset=".198" stop-color="#b6dbff"/><stop offset=".27" stop-color="#ffcafd"/><stop offset=".329" stop-color="#ff98cb"/><stop offset=".409" stop-color="#ff6b9e"/><stop offset=".524" stop-color="#ff4376"/><stop offset=".698" stop-color="#ff2053"/><stop offset=".979" stop-color="#ff0134"/><stop offset="1" stop-color="#f03"/></linearGradient>
<linearGradient id="b59" gradientUnits="userSpaceOnUse" x1="1543" x2="1916"><stop offset="0" stop-color="#00fbff"/><stop offset=".013" stop-color="#05f9ff"/><stop offset=".201" stop-color="#b5d5ff"/><stop offset=".276" stop-color="#ffc4fd"/><stop offset=".335" stop-color="#ff93cc"/><stop offset=".418" stop-color="#ff679e"/><stop offset=".536" stop-color="#ff3f76"/><stop offset=".716" stop-color="#ff1d52"/><stop offset=".995" stop-color="#ff0035"/><stop offset="1" stop-color="#ff0034"/></linearGradient>
<linearGradient id="b60" gradientUnits="userSpaceOnUse" x1="1543" x2="1914"><stop offset="0" stop-color="#00f5ff"/><stop offset=".011" stop-color="#02f3ff"/><stop offset=".205" stop-color="#b3cfff"/><stop offset=".283" stop-color="#ffbefd"/><stop offset=".345" stop-color="#ff8dca"/><stop offset=".429" stop-color="#ff639e"/><stop offset=".55" stop-color="#ff3c76"/><stop offset=".733" stop-color="#ff1a52"/><stop offset="1" stop-color="#ff0036"/></linearGradient>
<linearGradient id="b61" gradientUnits="userSpaceOnUse" x1="1544" x2="1912"><stop offset="0" stop-color="#00f0ff"/><stop offset=".014" stop-color="#06edff"/><stop offset=".212" stop-color="#b7c9ff"/><stop offset=".288" stop-color="#ffb8fd"/><stop offset=".351" stop-color="#ff89cb"/><stop offset=".438" stop-color="#ff5f9e"/><stop offset=".562" stop-color="#ff3975"/><stop offset=".75" stop-color="#ff1852"/><stop offset="1" stop-color="#ff0038"/></linearGradient>
<linearGradient id="b62" gradientUnits="userSpaceOnUse" x1="1544" x2="1910"><stop offset="0" stop-color="#00eaff"/><stop offset=".014" stop-color="#05e8ff"/><stop offset=".216" stop-color="#b6c3ff"/><stop offset=".295" stop-color="#ffb2fd"/><stop offset=".358" stop-color="#ff85cc"/><stop offset=".445" stop-color="#ff5c9f"/><stop offset=".571" stop-color="#ff3776"/><stop offset=".762" stop-color="#ff1653"/><stop offset="1" stop-color="#ff003a"/></linearGradient>
<linearGradient id="b63" gradientUnits="userSpaceOnUse" x1="1544" x2="1908"><stop offset="0" stop-color="#00e5ff"/><stop offset=".011" stop-color="#02e4ff"/><stop offset=".217" stop-color="#b2bfff"/><stop offset=".302" stop-color="#ffadfd"/><stop offset=".368" stop-color="#ff80cb"/><stop offset=".459" stop-color="#ff579e"/><stop offset=".588" stop-color="#ff3376"/><stop offset=".783" stop-color="#ff1452"/><stop offset="1" stop-color="#ff003b"/></linearGradient>
<linearGradient id="b64" gradientUnits="userSpaceOnUse" x1="1545" x2="1906"><stop offset="0" stop-color="#00e0ff"/><stop offset=".014" stop-color="#06deff"/><stop offset=".224" stop-color="#b5b8ff"/><stop offset=".307" stop-color="#ffa7fd"/><stop offset=".374" stop-color="#ff7ccc"/><stop offset=".465" stop-color="#ff549f"/><stop offset=".598" stop-color="#ff3176"/><stop offset=".798" stop-color="#ff1253"/><stop offset="1" stop-color="#ff003d"/></linearGradient>
<linearGradient id="b65" gradientUnits="userSpaceOnUse" x1="1545" x2="1904"><stop offset="0" stop-color="#00dbff"/><stop offset=".014" stop-color="#05d9ff"/><stop offset=".228" stop-color="#b4b4ff"/><stop offset=".315" stop-color="#ffa2fd"/><stop offset=".384" stop-color="#ff77cb"/><stop offset=".479" stop-color="#ff509d"/><stop offset=".616" stop-color="#ff2e75"/><stop offset=".822" stop-color="#ff0f52"/><stop offset="1" stop-color="#ff003f"/></linearGradient>
<linearGradient id="b66" gradientUnits="userSpaceOnUse" x1="1545" x2="1902"><stop offset="0" stop-color="#00d7ff"/><stop offset=".014" stop-color="#04d5ff"/><stop offset=".235" stop-color="#b5aeff"/><stop offset=".322" stop-color="#ff9dfd"/><stop offset=".392" stop-color="#ff73cb"/><stop offset=".487" stop-color="#ff4e9e"/><stop offset=".625" stop-color="#ff2c76"/><stop offset=".832" stop-color="#ff0e53"/><stop offset="1" stop-color="#ff0041"/></linearGradient>
<linearGradient id="b67" gradientUnits="userSpaceOnUse" x1="1546" x2="1900"><stop offset="0" stop-color="#00d2ff"/><stop offset=".017" stop-color="#08cfff"/><stop offset=".243" stop-color="#b9a9ff"/><stop offset=".328" stop-color="#ff98fe"/><stop offset=".398" stop-color="#ff70cc"/><stop offset=".497" stop-color="#ff4a9e"/><stop offset=".638" stop-color="#ff2976"/><stop offset=".853" stop-color="#ff0c52"/><stop offset="1" stop-color="#ff0043"/></linearGradient>
<linearGradient id="b68" gradientUnits="userSpaceOnUse" x1="1546" x2="1898"><stop offset="0" stop-color="#00ceff"/><stop offset=".014" stop-color="#05cbff"/><stop offset=".244" stop-color="#b5a5ff"/><stop offset=".335" stop-color="#ff94fe"/><stop offset=".409" stop-color="#ff6bcb"/><stop offset=".511" stop-color="#ff469d"/><stop offset=".656" stop-color="#ff2675"/><stop offset=".875" stop-color="#ff0a52"/><stop offset="1" stop-color="#ff0045"/></linearGradient>
<linearGradient id="b69" gradientUnits="userSpaceOnUse" x1="1546" x2="1896"><stop offset="0" stop-color="#00c9ff"/><stop offset=".014" stop-color="#04c7ff"/><stop offset=".249" stop-color="#b4a1ff"/><stop offset=".343" stop-color="#ff8ffe"/><stop offset=".417" stop-color="#ff68cc"/><stop offset=".52" stop-color="#ff449e"/><stop offset=".669" stop-color="#ff2476"/><stop offset=".891" stop-color="#ff0852"/><stop offset="1" stop-color="#ff0047"/></linearGradient>
<linearGradient id="b70" gradientUnits="userSpaceOnUse" x1="1547" x2="1894"><stop offset="0" stop-color="#00c5ff"/><stop offset=".017" stop-color="#07c2ff"/><stop offset=".256" stop-color="#b79bff"/><stop offset=".349" stop-color="#ff8bfe"/><stop offset=".424" stop-color="#ff64cc"/><stop offset=".527" stop-color="#ff429f"/><stop offset=".677" stop-color="#ff2377"/><stop offset=".902" stop-color="#ff0753"/><stop offset="1" stop-color="#ff0049"/></linearGradient>
<linearGradient id="b71" gradientUnits="userSpaceOnUse" x1="1547" x2="1892"><stop offset="0" stop-color="#00c1ff"/><stop offset=".017" stop-color="#07beff"/><stop offset=".264" stop-color="#b897ff"/><stop offset=".357" stop-color="#ff86fe"/><stop offset=".435" stop-color="#ff60cb"/><stop offset=".542" stop-color="#ff3e9e"/><stop offset=".696" stop-color="#ff2076"/><stop offset=".928" stop-color="#ff0552"/><stop offset="1" stop-color="#ff004b"/></linearGradient>
<linearGradient id="b72" gradientUnits="userSpaceOnUse" x1="1547" x2="1890"><stop offset="0" stop-color="#00bdff"/><stop offset=".015" stop-color="#04bbff"/><stop offset=".265" stop-color="#b494ff"/><stop offset=".364" stop-color="#ff82fe"/><stop offset=".443" stop-color="#ff5dcc"/><stop offset=".551" stop-color="#ff3c9f"/><stop offset=".708" stop-color="#ff1e76"/><stop offset=".945" stop-color="#ff0453"/><stop offset="1" stop-color="#ff004d"/></linearGradient>
<linearGradient id="b73" gradientUnits="userSpaceOnUse" x1="1548" x2="1888"><stop offset="0" stop-color="#00b9ff"/><stop offset=".021" stop-color="#09b6ff"/><stop offset=".276" stop-color="#ba8eff"/><stop offset=".371" stop-color="#ff7efe"/><stop offset=".453" stop-color="#ff59cb"/><stop offset=".565" stop-color="#ff389e"/><stop offset=".726" stop-color="#ff1b75"/><stop offset=".971" stop-color="#ff0252"/><stop offset="1" stop-color="#ff004f"/></linearGradient>
<linearGradient id="b74" gradientUnits="userSpaceOnUse" x1="1548" x2="1886"><stop offset="0" stop-color="#00b6ff"/><stop offset=".018" stop-color="#06b3ff"/><stop offset=".278" stop-color="#b68bff"/><stop offset=".379" stop-color="#ff7afe"/><stop offset=".462" stop-color="#ff56cb"/><stop offset=".577" stop-color="#ff369e"/><stop offset=".743" stop-color="#ff1975"/><stop offset=".991" stop-color="#ff0052"/><stop offset="1" stop-color="#ff0051"/></linearGradient>
<linearGradient id="b75" gradientUnits="userSpaceOnUse" x1="1548" x2="1884"><stop offset="0" stop-color="#00b2ff"/><stop offset=".015" stop-color="#04b0ff"/><stop offset=".28" stop-color="#b388ff"/><stop offset=".387" stop-color="#ff76fe"/><stop offset=".47" stop-color="#ff53cc"/><stop offset=".586" stop-color="#ff349f"/><stop offset=".753" stop-color="#ff1876"/><stop offset="1" stop-color="#ff0053"/></linearGradient>
<linearGradient id="b76" gradientUnits="userSpaceOnUse" x1="1549" x2="1882"><stop offset="0" stop-color="#00aeff"/><stop offset=".021" stop-color="#09abff"/><stop offset=".291" stop-color="#b883ff"/><stop offset=".393" stop-color="#ff72fe"/><stop offset=".48" stop-color="#ff50cb"/><stop offset=".601" stop-color="#ff319e"/><stop offset=".772" stop-color="#ff1575"/><stop offset="1" stop-color="#f05"/></linearGradient>
<linearGradient id="b77" gradientUnits="userSpaceOnUse" x1="1549" x2="1880"><stop offset="0" stop-color="#00abff"/><stop offset=".018" stop-color="#06a8ff"/><stop offset=".296" stop-color="#b780ff"/><stop offset=".402" stop-color="#ff6efe"/><stop offset=".489" stop-color="#ff4dcc"/><stop offset=".61" stop-color="#ff2f9e"/><stop offset=".785" stop-color="#ff1476"/><stop offset="1" stop-color="#ff0057"/></linearGradient>
<linearGradient id="b78" gradientUnits="userSpaceOnUse" x1="1549" x2="1878"><stop offset="0" stop-color="#00a8ff"/><stop offset=".018" stop-color="#06a5ff"/><stop offset=".301" stop-color="#b67cff"/><stop offset=".41" stop-color="#ff6bfe"/><stop offset=".498" stop-color="#ff4acc"/><stop offset=".62" stop-color="#ff2d9f"/><stop offset=".796" stop-color="#ff1277"/><stop offset="1" stop-color="#ff005a"/></linearGradient>
<linearGradient id="b79" gradientUnits="userSpaceOnUse" x1="1549" x2="1876"><stop offset="0" stop-color="#00a5ff"/><stop offset=".018" stop-color="#05a2ff"/><stop offset=".306" stop-color="#b579ff"/><stop offset=".419" stop-color="#ff67fe"/><stop offset=".511" stop-color="#ff47cb"/><stop offset=".636" stop-color="#ff2a9e"/><stop offset=".817" stop-color="#ff1076"/><stop offset="1" stop-color="#ff005c"/></linearGradient>
<linearGradient id="b80" gradientUnits="userSpaceOnUse" x1="1550" x2="1874"><stop offset="0" stop-color="#00a1ff"/><stop offset=".022" stop-color="#089eff"/><stop offset=".315" stop-color="#b875ff"/><stop offset=".426" stop-color="#ff64fe"/><stop offset=".519" stop-color="#f4c"/><stop offset=".648" stop-color="#ff289e"/><stop offset=".833" stop-color="#ff0e76"/><stop offset="1" stop-color="#ff005e"/></linearGradient>
<linearGradient id="b81" gradientUnits="userSpaceOnUse" x1="1550" x2="1872"><stop offset="0" stop-color="#009eff"/><stop offset=".019" stop-color="#059cff"/><stop offset=".32" stop-color="#b772ff"/><stop offset=".435" stop-color="#ff61fe"/><stop offset=".531" stop-color="#ff41cb"/><stop offset=".661" stop-color="#ff259e"/><stop offset=".851" stop-color="#ff0c76"/><stop offset="1" stop-color="#ff0061"/></linearGradient>
<linearGradient id="b82" gradientUnits="userSpaceOnUse" x1="1550" x2="1870"><stop offset="0" stop-color="#009bff"/><stop offset=".019" stop-color="#0599ff"/><stop offset=".325" stop-color="#b56fff"/><stop offset=".444" stop-color="#ff5dfe"/><stop offset=".541" stop-color="#ff3fcc"/><stop offset=".675" stop-color="#ff239e"/><stop offset=".869" stop-color="#ff0b75"/><stop offset="1" stop-color="#ff0063"/></linearGradient>
<linearGradient id="b83" gradientUnits="userSpaceOnUse" x1="1551" x2="1868"><stop offset="0" stop-color="#0098ff"/><stop offset=".022" stop-color="#0895ff"/><stop offset=".334" stop-color="#b86bff"/><stop offset=".451" stop-color="#ff5afe"/><stop offset=".549" stop-color="#ff3ccc"/><stop offset=".685" stop-color="#ff229f"/><stop offset=".88" stop-color="#ff0a76"/><stop offset="1" stop-color="#ff0065"/></linearGradient>
<linearGradient id="b84" gradientUnits="userSpaceOnUse" x1="1551" x2="1867"><stop offset="0" stop-color="#0095ff"/><stop offset=".019" stop-color="#0593ff"/><stop offset=".335" stop-color="#b569ff"/><stop offset=".462" stop-color="#ff56fc"/><stop offset=".563" stop-color="#ff39ca"/><stop offset=".703" stop-color="#ff1f9d"/><stop offset=".905" stop-color="#ff0775"/><stop offset="1" stop-color="#ff0067"/></linearGradient>
<linearGradient id="b85" gradientUnits="userSpaceOnUse" x1="1551" x2="1865"><stop offset="0" stop-color="#0092ff"/><stop offset=".019" stop-color="#0590ff"/><stop offset=".341" stop-color="#b466ff"/><stop offset=".471" stop-color="#ff53fc"/><stop offset=".573" stop-color="#ff37cb"/><stop offset=".717" stop-color="#ff1d9d"/><stop offset=".92" stop-color="#ff0675"/><stop offset="1" stop-color="#ff006a"/></linearGradient>
<linearGradient id="b86" gradientUnits="userSpaceOnUse" x1="1552" x2="1863"><stop offset="0" stop-color="#008fff"/><stop offset=".026" stop-color="#098cff"/><stop offset=".354" stop-color="#b962ff"/><stop offset=".479" stop-color="#ff50fc"/><stop offset=".585" stop-color="#ff34ca"/><stop offset=".73" stop-color="#ff1b9d"/><stop offset=".939" stop-color="#ff0475"/><stop offset="1" stop-color="#ff006c"/></linearGradient>
<linearGradient id="b87" gradientUnits="userSpaceOnUse" x1="1552" x2="1861"><stop offset="0" stop-color="#008dff"/><stop offset=".023" stop-color="#078aff"/><stop offset=".359" stop-color="#b860ff"/><stop offset=".489" stop-color="#ff4dfc"/><stop offset=".595" stop-color="#ff32ca"/><stop offset=".744" stop-color="#ff199d"/><stop offset=".958" stop-color="#ff0375"/><stop offset="1" stop-color="#ff006f"/></linearGradient>
<linearGradient id="b88" gradientUnits="userSpaceOnUse" x1="1552" x2="1859"><stop offset="0" stop-color="#008aff"/><stop offset=".02" stop-color="#0588ff"/><stop offset=".362" stop-color="#b55dff"/><stop offset=".498" stop-color="#ff4afc"/><stop offset=".609" stop-color="#ff2fca"/><stop offset=".762" stop-color="#ff169c"/><stop offset=".98" stop-color="#ff0174"/><stop offset="1" stop-color="#ff0071"/></linearGradient>
<linearGradient id="b89" gradientUnits="userSpaceOnUse" x1="1553" x2="1857"><stop offset="0" stop-color="#08f"/><stop offset=".03" stop-color="#0a84ff"/><stop offset=".378" stop-color="#bb59ff"/><stop offset=".507" stop-color="#ff47fd"/><stop offset=".618" stop-color="#ff2dca"/><stop offset=".773" stop-color="#ff159d"/><stop offset=".997" stop-color="#ff0074"/><stop offset="1" stop-color="#ff0074"/></linearGradient>
<linearGradient id="b90" gradientUnits="userSpaceOnUse" x1="1553" x2="1855"><stop offset="0" stop-color="#0085ff"/><stop offset=".023" stop-color="#0783ff"/><stop offset=".377" stop-color="#b658ff"/><stop offset=".517" stop-color="#ff45fd"/><stop offset=".629" stop-color="#ff2bcb"/><stop offset=".785" stop-color="#ff149e"/><stop offset="1" stop-color="#f07"/></linearGradient>
<linearGradient id="b91" gradientUnits="userSpaceOnUse" x1="1553" x2="1853"><stop offset="0" stop-color="#0083ff"/><stop offset=".023" stop-color="#0680ff"/><stop offset=".387" stop-color="#b755ff"/><stop offset=".527" stop-color="#ff42fd"/><stop offset=".643" stop-color="#ff28ca"/><stop offset=".803" stop-color="#ff119d"/><stop offset="1" stop-color="#ff0079"/></linearGradient>
<linearGradient id="b92" gradientUnits="userSpaceOnUse" x1="1554" x2="1851"><stop offset="0" stop-color="#0080ff"/><stop offset=".034" stop-color="#0c7cff"/><stop offset=".401" stop-color="#bb51ff"/><stop offset=".535" stop-color="#ff40fd"/><stop offset=".653" stop-color="#ff27ca"/><stop offset=".815" stop-color="#ff109d"/><stop offset="1" stop-color="#ff007c"/></linearGradient>
<linearGradient id="b93" gradientUnits="userSpaceOnUse" x1="1554" x2="1849"><stop offset="0" stop-color="#007eff"/><stop offset=".027" stop-color="#087bff"/><stop offset=".403" stop-color="#b94fff"/><stop offset=".546" stop-color="#ff3dfd"/><stop offset=".664" stop-color="#ff25cb"/><stop offset=".831" stop-color="#ff0e9d"/><stop offset="1" stop-color="#ff007f"/></linearGradient>
<linearGradient id="b94" gradientUnits="userSpaceOnUse" x1="1554" x2="1847"><stop offset="0" stop-color="#007cff"/><stop offset=".024" stop-color="#0679ff"/><stop offset=".406" stop-color="#b64eff"/><stop offset=".556" stop-color="#ff3bfd"/><stop offset=".679" stop-color="#ff22ca"/><stop offset=".85" stop-color="#ff0c9d"/><stop offset="1" stop-color="#ff0081"/></linearGradient>
<linearGradient id="b95" gradientUnits="userSpaceOnUse" x1="1555" x2="1845"><stop offset="0" stop-color="#0079ff"/><stop offset=".038" stop-color="#0d75ff"/><stop offset=".428" stop-color="#bd49ff"/><stop offset=".566" stop-color="#ff38fd"/><stop offset=".69" stop-color="#ff21cb"/><stop offset=".862" stop-color="#ff0b9d"/><stop offset="1" stop-color="#ff0084"/></linearGradient>
<linearGradient id="b96" gradientUnits="userSpaceOnUse" x1="1555" x2="1843"><stop offset="0" stop-color="#07f"/><stop offset=".028" stop-color="#0874ff"/><stop offset=".424" stop-color="#b849ff"/><stop offset=".576" stop-color="#ff36fd"/><stop offset=".705" stop-color="#ff1eca"/><stop offset=".882" stop-color="#ff099d"/><stop offset="1" stop-color="#ff0087"/></linearGradient>
<linearGradient id="b97" gradientUnits="userSpaceOnUse" x1="1555" x2="1841"><stop offset="0" stop-color="#0075ff"/><stop offset=".024" stop-color="#0673ff"/><stop offset=".43" stop-color="#b747ff"/><stop offset=".587" stop-color="#ff34fd"/><stop offset=".717" stop-color="#ff1dcb"/><stop offset=".895" stop-color="#ff089d"/><stop offset="1" stop-color="#ff008a"/></linearGradient>
<linearGradient id="b98" gradientUnits="userSpaceOnUse" x1="1556" x2="1839"><stop offset="0" stop-color="#0073ff"/><stop offset=".046" stop-color="#0f6eff"/><stop offset=".456" stop-color="#bf42ff"/><stop offset=".597" stop-color="#ff31fd"/><stop offset=".728" stop-color="#ff1bcb"/><stop offset=".912" stop-color="#ff069d"/><stop offset="1" stop-color="#ff008d"/></linearGradient>
<linearGradient id="b99" gradientUnits="userSpaceOnUse" x1="1556" x2="1837"><stop offset="0" stop-color="#0071ff"/><stop offset=".032" stop-color="#096eff"/><stop offset=".452" stop-color="#ba41ff"/><stop offset=".609" stop-color="#ff2ffd"/><stop offset=".744" stop-color="#ff19ca"/><stop offset=".929" stop-color="#ff059d"/><stop offset="1" stop-color="#ff0090"/></linearGradient>
<linearGradient id="b100" gradientUnits="userSpaceOnUse" x1="1556" x2="1835"><stop offset="0" stop-color="#006fff"/><stop offset=".025" stop-color="#066cff"/><stop offset=".452" stop-color="#b640ff"/><stop offset=".62" stop-color="#ff2dfd"/><stop offset=".756" stop-color="#ff17cb"/><stop offset=".946" stop-color="#ff049d"/><stop offset="1" stop-color="#ff0093"/></linearGradient>
<linearGradient id="b101" gradientUnits="userSpaceOnUse" x1="1557" x2="1833"><stop offset="0" stop-color="#006dff"/><stop offset=".054" stop-color="#1267ff"/><stop offset=".489" stop-color="#c33bff"/><stop offset=".63" stop-color="#ff2bfd"/><stop offset=".768" stop-color="#ff16cb"/><stop offset=".96" stop-color="#ff029e"/><stop offset="1" stop-color="#ff0096"/></linearGradient>
<linearGradient id="b102" gradientUnits="userSpaceOnUse" x1="1557" x2="1831"><stop offset="0" stop-color="#006bff"/><stop offset=".036" stop-color="#0a67ff"/><stop offset=".478" stop-color="#ba3bff"/><stop offset=".642" stop-color="#ff29fd"/><stop offset=".785" stop-color="#ff14cb"/><stop offset=".982" stop-color="#ff019d"/><stop offset="1" stop-color="#ff009a"/></linearGradient>
<linearGradient id="b103" gradientUnits="userSpaceOnUse" x1="1557" x2="1829"><stop offset="0" stop-color="#0069ff"/><stop offset=".029" stop-color="#0766ff"/><stop offset=".482" stop-color="#b839ff"/><stop offset=".654" stop-color="#ff27fd"/><stop offset=".798" stop-color="#ff12cb"/><stop offset=".996" stop-color="#ff009e"/><stop offset="1" stop-color="#ff009d"/></linearGradient>
<linearGradient id="b104" gradientUnits="userSpaceOnUse" x1="1558" x2="1827"><stop offset="0" stop-color="#0067ff"/><stop offset=".067" stop-color="#1561ff"/><stop offset=".524" stop-color="#c634ff"/><stop offset=".665" stop-color="#ff25fd"/><stop offset=".814" stop-color="#ff10ca"/><stop offset="1" stop-color="#ff00a0"/></linearGradient>
<linearGradient id="b105" gradientUnits="userSpaceOnUse" x1="1558" x2="1825"><stop offset="0" stop-color="#0065ff"/><stop offset=".041" stop-color="#0b61ff"/><stop offset=".509" stop-color="#bc34ff"/><stop offset=".678" stop-color="#ff23fd"/><stop offset=".828" stop-color="#ff0fcb"/><stop offset="1" stop-color="#ff00a4"/></linearGradient>
<linearGradient id="b106" gradientUnits="userSpaceOnUse" x1="1558" x2="1823"><stop offset="0" stop-color="#0063ff"/><stop offset=".034" stop-color="#0860ff"/><stop offset=".509" stop-color="#b833ff"/><stop offset=".691" stop-color="#ff21fd"/><stop offset=".842" stop-color="#ff0dcb"/><stop offset="1" stop-color="#ff00a7"/></linearGradient>
<linearGradient id="b107" gradientUnits="userSpaceOnUse" x1="1559" x2="1821"><stop offset="0" stop-color="#0061ff"/><stop offset=".088" stop-color="#1b5aff"/><stop offset=".569" stop-color="#cc2cff"/><stop offset=".702" stop-color="#ff1ffd"/><stop offset=".859" stop-color="#ff0ccb"/><stop offset="1" stop-color="#ff00ab"/></linearGradient>
<linearGradient id="b108" gradientUnits="userSpaceOnUse" x1="1559" x2="1819"><stop offset="0" stop-color="#0060ff"/><stop offset=".05" stop-color="#0d5bff"/><stop offset=".542" stop-color="#be2eff"/><stop offset=".715" stop-color="#ff1dfd"/><stop offset=".873" stop-color="#ff0acb"/><stop offset="1" stop-color="#ff00ae"/></linearGradient>
<linearGradient id="b109" gradientUnits="userSpaceOnUse" x1="1559" x2="1818"><stop offset="0" stop-color="#005eff"/><stop offset=".035" stop-color="#085bff"/><stop offset=".537" stop-color="#b82eff"/><stop offset=".726" stop-color="#ff1bfd"/><stop offset=".884" stop-color="#ff09cb"/><stop offset="1" stop-color="#ff00b1"/></linearGradient>
<linearGradient id="b110" gradientUnits="userSpaceOnUse" x1="1560" x2="1816"><stop offset="0" stop-color="#005cff"/><stop offset=".121" stop-color="#2552ff"/><stop offset=".625" stop-color="#d624ff"/><stop offset=".738" stop-color="#ff19fd"/><stop offset=".902" stop-color="#ff07cb"/><stop offset="1" stop-color="#ff00b5"/></linearGradient>
<linearGradient id="b111" gradientUnits="userSpaceOnUse" x1="1560" x2="1814"><stop offset="0" stop-color="#005bff"/><stop offset=".059" stop-color="#1056ff"/><stop offset=".579" stop-color="#c128ff"/><stop offset=".752" stop-color="#ff17fd"/><stop offset=".917" stop-color="#ff06cb"/><stop offset="1" stop-color="#ff00b8"/></linearGradient>
<linearGradient id="b112" gradientUnits="userSpaceOnUse" x1="1560" x2="1812"><stop offset="0" stop-color="#0059ff"/><stop offset=".04" stop-color="#0956ff"/><stop offset=".567" stop-color="#b928ff"/><stop offset=".766" stop-color="#ff16fd"/><stop offset=".937" stop-color="#ff04cb"/><stop offset="1" stop-color="#ff00bc"/></linearGradient>
<linearGradient id="b113" gradientUnits="userSpaceOnUse" x1="1560" x2="1810"><stop offset="0" stop-color="#0058ff"/><stop offset=".04" stop-color="#0854ff"/><stop offset=".58" stop-color="#b927ff"/><stop offset=".78" stop-color="#ff14fd"/><stop offset=".952" stop-color="#ff03cb"/><stop offset="1" stop-color="#ff00c0"/></linearGradient>
<linearGradient id="b114" gradientUnits="userSpaceOnUse" x1="1561" x2="1808"><stop offset="0" stop-color="#0056ff"/><stop offset=".073" stop-color="#1350ff"/><stop offset=".619" stop-color="#c422ff"/><stop offset=".794" stop-color="#ff12fd"/><stop offset=".968" stop-color="#ff02cb"/><stop offset="1" stop-color="#ff00c4"/></linearGradient>
<linearGradient id="b115" gradientUnits="userSpaceOnUse" x1="1561" x2="1806"><stop offset="0" stop-color="#0054ff"/><stop offset=".049" stop-color="#0b51ff"/><stop offset=".608" stop-color="#bc23ff"/><stop offset=".808" stop-color="#ff11fe"/><stop offset=".988" stop-color="#ff00cb"/><stop offset="1" stop-color="#ff00c8"/></linearGradient>
<linearGradient id="b116" gradientUnits="userSpaceOnUse" x1="1561" x2="1804"><stop offset="0" stop-color="#0053ff"/><stop offset=".045" stop-color="#0950ff"/><stop offset=".613" stop-color="#ba22ff"/><stop offset=".823" stop-color="#ff0ffe"/><stop offset="1" stop-color="#f0c"/></linearGradient>
<linearGradient id="b117" gradientUnits="userSpaceOnUse" x1="1562" x2="1802"><stop offset="0" stop-color="#0051ff"/><stop offset=".092" stop-color="#174aff"/><stop offset=".667" stop-color="#c81cff"/><stop offset=".838" stop-color="#ff0dfe"/><stop offset="1" stop-color="#ff00d0"/></linearGradient>
<linearGradient id="b118" gradientUnits="userSpaceOnUse" x1="1562" x2="1800"><stop offset="0" stop-color="#0050ff"/><stop offset=".055" stop-color="#0c4cff"/><stop offset=".643" stop-color="#bc1eff"/><stop offset=".853" stop-color="#ff0cfe"/><stop offset="1" stop-color="#ff00d5"/></linearGradient>
<linearGradient id="b119" gradientUnits="userSpaceOnUse" x1="1562" x2="1798"><stop offset="0" stop-color="#004fff"/><stop offset=".051" stop-color="#0a4bff"/><stop offset=".653" stop-color="#bb1cff"/><stop offset=".869" stop-color="#ff0afe"/><stop offset="1" stop-color="#ff00d9"/></linearGradient>
<linearGradient id="b120" gradientUnits="userSpaceOnUse" x1="1563" x2="1796"><stop offset="0" stop-color="#004dff"/><stop offset=".12" stop-color="#1e44ff"/><stop offset=".73" stop-color="#d016ff"/><stop offset=".888" stop-color="#ff08fc"/><stop offset="1" stop-color="#f0d"/></linearGradient>
<linearGradient id="b121" gradientUnits="userSpaceOnUse" x1="1563" x2="1794"><stop offset="0" stop-color="#004cff"/><stop offset=".065" stop-color="#0e47ff"/><stop offset=".688" stop-color="#bf19ff"/><stop offset=".905" stop-color="#ff07fc"/><stop offset="1" stop-color="#ff00e2"/></linearGradient>
<linearGradient id="b122" gradientUnits="userSpaceOnUse" x1="1563" x2="1792"><stop offset="0" stop-color="#004aff"/><stop offset=".052" stop-color="#0a47ff"/><stop offset=".686" stop-color="#ba18ff"/><stop offset=".921" stop-color="#ff05fc"/><stop offset="1" stop-color="#ff00e7"/></linearGradient>
<linearGradient id="b123" gradientUnits="userSpaceOnUse" x1="1564" x2="1790"><stop offset="0" stop-color="#0049ff"/><stop offset=".173" stop-color="#2a3dff"/><stop offset=".81" stop-color="#db0eff"/><stop offset=".938" stop-color="#ff04fc"/><stop offset="1" stop-color="#ff00eb"/></linearGradient>
<linearGradient id="b124" gradientUnits="userSpaceOnUse" x1="1564" x2="1788"><stop offset="0" stop-color="#0048ff"/><stop offset=".076" stop-color="#1043ff"/><stop offset=".732" stop-color="#c114ff"/><stop offset=".955" stop-color="#ff03fc"/><stop offset="1" stop-color="#ff00f0"/></linearGradient>
<linearGradient id="b125" gradientUnits="userSpaceOnUse" x1="1564" x2="1786"><stop offset="0" stop-color="#0046ff"/><stop offset=".059" stop-color="#0b43ff"/><stop offset=".73" stop-color="#bc14ff"/><stop offset=".973" stop-color="#ff01fc"/><stop offset="1" stop-color="#ff00f5"/></linearGradient>
<linearGradient id="b126" gradientUnits="userSpaceOnUse" x1="1565" x2="1784"><stop offset="0" stop-color="#0045ff"/><stop offset=".265" stop-color="#3f34ff"/><stop offset=".932" stop-color="#f104ff"/><stop offset=".991" stop-color="#ff00fd"/><stop offset="1" stop-color="#ff00fa"/></linearGradient>
<linearGradient id="b127" gradientUnits="userSpaceOnUse" x1="1565" x2="1782"><stop offset="0" stop-color="#04f"/><stop offset=".097" stop-color="#143eff"/><stop offset=".793" stop-color="#c60eff"/><stop offset="1" stop-color="#f0f"/></linearGradient>
<linearGradient id="b128" gradientUnits="userSpaceOnUse" x1="1565" x2="1780"><stop offset="0" stop-color="#0043ff"/><stop offset=".065" stop-color="#0c3fff"/><stop offset=".772" stop-color="#bc10ff"/><stop offset="1" stop-color="#fa00ff"/></linearGradient>
<linearGradient id="b129" gradientUnits="userSpaceOnUse" x1="1566" x2="1778"><stop offset="0" stop-color="#0041ff"/><stop offset=".41" stop-color="#5e27ff"/><stop offset="1" stop-color="#f500ff"/></linearGradient>
<linearGradient id="b130" gradientUnits="userSpaceOnUse" x1="1566" x2="1776"><stop offset="0" stop-color="#0040ff"/><stop offset=".124" stop-color="#1939ff"/><stop offset=".857" stop-color="#cb09ff"/><stop offset="1" stop-color="#f000ff"/></linearGradient>
<linearGradient id="b131" gradientUnits="userSpaceOnUse" x1="1566" x2="1774"><stop offset="0" stop-color="#003fff"/><stop offset=".077" stop-color="#0e3aff"/><stop offset=".827" stop-color="#bf0bff"/><stop offset="1" stop-color="#eb00ff"/></linearGradient>
<linearGradient id="b132" gradientUnits="userSpaceOnUse" x1="1567" x2="1772"><stop offset="0" stop-color="#003eff"/><stop offset=".478" stop-color="#6821ff"/><stop offset="1" stop-color="#e600ff"/></linearGradient>
<linearGradient id="b133" gradientUnits="userSpaceOnUse" x1="1567" x2="1770"><stop offset="0" stop-color="#003dff"/><stop offset=".167" stop-color="#2133ff"/><stop offset=".941" stop-color="#d303ff"/><stop offset="1" stop-color="#e100ff"/></linearGradient>
<linearGradient id="b134" gradientUnits="userSpaceOnUse" x1="1567" x2="1769"><stop offset="0" stop-color="#003bff"/><stop offset=".084" stop-color="#0f37ff"/><stop offset=".871" stop-color="#bf07ff"/><stop offset="1" stop-color="#de00ff"/></linearGradient>
<linearGradient id="b135" gradientUnits="userSpaceOnUse" x1="1568" x2="1767"><stop offset="0" stop-color="#003aff"/><stop offset=".528" stop-color="#6e1cff"/><stop offset="1" stop-color="#d900ff"/></linearGradient>
<linearGradient id="b136" gradientUnits="userSpaceOnUse" x1="1568" x2="1765"><stop offset="0" stop-color="#0039ff"/><stop offset=".244" stop-color="#2f2cff"/><stop offset="1" stop-color="#d500ff"/></linearGradient>
<linearGradient id="b137" gradientUnits="userSpaceOnUse" x1="1568" x2="1763"><stop offset="0" stop-color="#0038ff"/><stop offset=".103" stop-color="#13f"/><stop offset=".938" stop-color="#c303ff"/><stop offset="1" stop-color="#d100ff"/></linearGradient>
<linearGradient id="b138" gradientUnits="userSpaceOnUse" x1="1569" x2="1761"><stop offset="0" stop-color="#0037ff"/><stop offset=".583" stop-color="#7317ff"/><stop offset="1" stop-color="#c0f"/></linearGradient>
<linearGradient id="b139" gradientUnits="userSpaceOnUse" x1="1569" x2="1759"><stop offset="0" stop-color="#0036ff"/><stop offset=".389" stop-color="#4921ff"/><stop offset="1" stop-color="#c800ff"/></linearGradient>
<linearGradient id="b140" gradientUnits="userSpaceOnUse" x1="1569" x2="1757"><stop offset="0" stop-color="#0035ff"/><stop offset=".128" stop-color="#152fff"/><stop offset="1" stop-color="#c400ff"/></linearGradient>
<linearGradient id="b141" gradientUnits="userSpaceOnUse" x1="1570" x2="1755"><stop offset="0" stop-color="#0034ff"/><stop offset=".638" stop-color="#7713ff"/><stop offset="1" stop-color="#c000ff"/></linearGradient>
<linearGradient id="b142" gradientUnits="userSpaceOnUse" x1="1570" x2="1753"><stop offset="0" stop-color="#03f"/><stop offset=".541" stop-color="#6118ff"/><stop offset="1" stop-color="#bc00ff"/></linearGradient>
<linearGradient id="b143" gradientUnits="userSpaceOnUse" x1="1570" x2="1751"><stop offset="0" stop-color="#0032ff"/><stop offset=".171" stop-color="#1c2aff"/><stop offset="1" stop-color="#b800ff"/></linearGradient>
<linearGradient id="b144" gradientUnits="userSpaceOnUse" x1="1570" x2="1749"><stop offset="0" stop-color="#0031ff"/><stop offset=".123" stop-color="#122bff"/><stop offset="1" stop-color="#b400ff"/></linearGradient>
<linearGradient id="b145" gradientUnits="userSpaceOnUse" x1="1571" x2="1747"><stop offset="0" stop-color="#0030ff"/><stop offset=".619" stop-color="#6a12ff"/><stop offset="1" stop-color="#b000ff"/></linearGradient>
<linearGradient id="b146" gradientUnits="userSpaceOnUse" x1="1571" x2="1745"><stop offset="0" stop-color="#002fff"/><stop offset=".236" stop-color="#2524ff"/><stop offset="1" stop-color="#ac00ff"/></linearGradient>
<linearGradient id="b147" gradientUnits="userSpaceOnUse" x1="1571" x2="1743"><stop offset="0" stop-color="#002eff"/><stop offset=".145" stop-color="#1528ff"/><stop offset="1" stop-color="#a900ff"/></linearGradient>
<linearGradient id="b148" gradientUnits="userSpaceOnUse" x1="1572" x2="1741"><stop offset="0" stop-color="#002dff"/><stop offset=".686" stop-color="#6f0eff"/><stop offset="1" stop-color="#a500ff"/></linearGradient>
<linearGradient id="b149" gradientUnits="userSpaceOnUse" x1="1572" x2="1739"><stop offset="0" stop-color="#002cff"/><stop offset=".359" stop-color="#361dff"/><stop offset="1" stop-color="#a200ff"/></linearGradient>
<linearGradient id="b150" gradientUnits="userSpaceOnUse" x1="1572" x2="1737"><stop offset="0" stop-color="#002bff"/><stop offset=".182" stop-color="#1924ff"/><stop offset="1" stop-color="#9e00ff"/></linearGradient>
<linearGradient id="b151" gradientUnits="userSpaceOnUse" x1="1573" x2="1735"><stop offset="0" stop-color="#002aff"/><stop offset=".753" stop-color="#720aff"/><stop offset="1" stop-color="#9b00ff"/></linearGradient>
<linearGradient id="b152" gradientUnits="userSpaceOnUse" x1="1573" x2="1733"><stop offset="0" stop-color="#002aff"/><stop offset=".588" stop-color="#5611ff"/><stop offset="1" stop-color="#9700ff"/></linearGradient>
<linearGradient id="b153" gradientUnits="userSpaceOnUse" x1="1573" x2="1731"><stop offset="0" stop-color="#0029ff"/><stop offset=".228" stop-color="#1e20ff"/><stop offset="1" stop-color="#9400ff"/></linearGradient>
<linearGradient id="b154" gradientUnits="userSpaceOnUse" x1="1574" x2="1729"><stop offset="0" stop-color="#0028ff"/><stop offset=".826" stop-color="#7607ff"/><stop offset="1" stop-color="#9000ff"/></linearGradient>
<linearGradient id="b155" gradientUnits="userSpaceOnUse" x1="1574" x2="1727"><stop offset="0" stop-color="#0027ff"/><stop offset=".725" stop-color="#640bff"/><stop offset="1" stop-color="#8d00ff"/></linearGradient>
<linearGradient id="b156" gradientUnits="userSpaceOnUse" x1="1574" x2="1725"><stop offset="0" stop-color="#0026ff"/><stop offset=".298" stop-color="#261bff"/><stop offset="1" stop-color="#8a00ff"/></linearGradient>
<linearGradient id="b157" gradientUnits="userSpaceOnUse" x1="1575" x2="1723"><stop offset="0" stop-color="#0025ff"/><stop offset=".905" stop-color="#7903ff"/><stop offset="1" stop-color="#8700ff"/></linearGradient>
<linearGradient id="b158" gradientUnits="userSpaceOnUse" x1="1575" x2="1722"><stop offset="0" stop-color="#0024ff"/><stop offset=".816" stop-color="#6b06ff"/><stop offset="1" stop-color="#8500ff"/></linearGradient>
<linearGradient id="b159" gradientUnits="userSpaceOnUse" x1="1575" x2="1720"><stop offset="0" stop-color="#0024ff"/><stop offset=".407" stop-color="#3215ff"/><stop offset="1" stop-color="#8200ff"/></linearGradient>
<linearGradient id="b160" gradientUnits="userSpaceOnUse" x1="1576" x2="1718"><stop offset="0" stop-color="#0023ff"/><stop offset=".979" stop-color="#7c00ff"/><stop offset="1" stop-color="#7e00ff"/></linearGradient>
<linearGradient id="b161" gradientUnits="userSpaceOnUse" x1="1576" x2="1716"><stop offset="0" stop-color="#02f"/><stop offset=".907" stop-color="#6f03ff"/><stop offset="1" stop-color="#7b00ff"/></linearGradient>
<linearGradient id="b162" gradientUnits="userSpaceOnUse" x1="1576" x2="1714"><stop offset="0" stop-color="#0021ff"/><stop offset=".594" stop-color="#450dff"/><stop offset="1" stop-color="#7900ff"/></linearGradient>
<linearGradient id="b163" gradientUnits="userSpaceOnUse" x1="1577" x2="1712"><stop offset="0" stop-color="#0020ff"/><stop offset="1" stop-color="#7600ff"/></linearGradient>
<linearGradient id="b164" gradientUnits="userSpaceOnUse" x1="1577" x2="1710"><stop offset="0" stop-color="#0020ff"/><stop offset="1" stop-color="#7300ff"/></linearGradient>
<linearGradient id="b165" gradientUnits="userSpaceOnUse" x1="1577" x2="1708"><stop offset="0" stop-color="#001fff"/><stop offset=".847" stop-color="#5e04ff"/><stop offset="1" stop-color="#7000ff"/></linearGradient>
<linearGradient id="b166" gradientUnits="userSpaceOnUse" x1="1578" x2="1706"><stop offset="0" stop-color="#001eff"/><stop offset="1" stop-color="#6d00ff"/></linearGradient>
<linearGradient id="b167" gradientUnits="userSpaceOnUse" x1="1578" x2="1704"><stop offset="0" stop-color="#001eff"/><stop offset="1" stop-color="#6a00ff"/></linearGradient>
<linearGradient id="b168" gradientUnits="userSpaceOnUse" x1="1578" x2="1702"><stop offset="0" stop-color="#001dff"/><stop offset=".984" stop-color="#60f"/><stop offset="1" stop-color="#6800ff"/></linearGradient>
<linearGradient id="b169" gradientUnits="userSpaceOnUse" x1="1579" x2="1700"><stop offset="0" stop-color="#001cff"/><stop offset="1" stop-color="#6500ff"/></linearGradient>
<linearGradient id="b170" gradientUnits="userSpaceOnUse" x1="1579" x2="1698"><stop offset="0" stop-color="#001bff"/><stop offset="1" stop-color="#6200ff"/></linearGradient>
<linearGradient id="b171" gradientUnits="userSpaceOnUse" x1="1579" x2="1696"><stop offset="0" stop-color="#001bff"/><stop offset="1" stop-color="#6000ff"/></linearGradient>
<linearGradient id="b172" gradientUnits="userSpaceOnUse" x1="1580" x2="1694"><stop offset="0" stop-color="#001aff"/><stop offset="1" stop-color="#5d00ff"/></linearGradient>
<linearGradient id="b173" gradientUnits="userSpaceOnUse" x1="1580" x2="1692"><stop offset="0" stop-color="#0019ff"/><stop offset="1" stop-color="#5b00ff"/></linearGradient>
<linearGradient id="b174" gradientUnits="userSpaceOnUse" x1="1580" x2="1690"><stop offset="0" stop-color="#0019ff"/><stop offset="1" stop-color="#5800ff"/></linearGradient>
<linearGradient id="b175" gradientUnits="userSpaceOnUse" x1="1580" x2="1688"><stop offset="0" stop-color="#0018ff"/><stop offset=".917" stop-color="#4e02ff"/><stop offset="1" stop-color="#5600ff"/></linearGradient>
<linearGradient id="b176" gradientUnits="userSpaceOnUse" x1="1581" x2="1686"><stop offset="0" stop-color="#0017ff"/><stop offset="1" stop-color="#5300ff"/></linearGradient>
<linearGradient id="b177" gradientUnits="userSpaceOnUse" x1="1581" x2="1684"><stop offset="0" stop-color="#0017ff"/><stop offset="1" stop-color="#5100ff"/></linearGradient>
<linearGradient id="b178" gradientUnits="userSpaceOnUse" x1="1581" x2="1682"><stop offset="0" stop-color="#0016ff"/><stop offset="1" stop-color="#4e00ff"/></linearGradient>
<linearGradient id="b179" gradientUnits="userSpaceOnUse" x1="1582" x2="1680"><stop offset="0" stop-color="#0015ff"/><stop offset="1" stop-color="#4c00ff"/></linearGradient>
<linearGradient id="b180" gradientUnits="userSpaceOnUse" x1="1582" x2="1678"><stop offset="0" stop-color="#0015ff"/><stop offset="1" stop-color="#4a00ff"/></linearGradient>
<linearGradient id="b181" gradientUnits="userSpaceOnUse" x1="1582" x2="1676"><stop offset="0" stop-color="#0014ff"/><stop offset="1" stop-color="#4700ff"/></linearGradient>
<linearGradient id="b182" gradientUnits="userSpaceOnUse" x1="1583" x2="1674"><stop offset="0" stop-color="#0014ff"/><stop offset="1" stop-color="#4500ff"/></linearGradient>
<linearGradient id="b183" gradientUnits="userSpaceOnUse" x1="1583" x2="1673"><stop offset="0" stop-color="#0013ff"/><stop offset="1" stop-color="#40f"/></linearGradient>
<linearGradient id="b184" gradientUnits="userSpaceOnUse" x1="1583" x2="1671"><stop offset="0" stop-color="#0012ff"/><stop offset="1" stop-color="#4100ff"/></linearGradient>
<linearGradient id="b185" gradientUnits="userSpaceOnUse" x1="1584" x2="1669"><stop offset="0" stop-color="#0012ff"/><stop offset="1" stop-color="#3f00ff"/></linearGradient>
<linearGradient id="b186" gradientUnits="userSpaceOnUse" x1="1584" x2="1667"><stop offset="0" stop-color="#01f"/><stop offset="1" stop-color="#3d00ff"/></linearGradient>
<linearGradient id="b187" gradientUnits="userSpaceOnUse" x1="1584" x2="1665"><stop offset="0" stop-color="#01f"/><stop offset="1" stop-color="#3b00ff"/></linearGradient>
<linearGradient id="b188" gradientUnits="userSpaceOnUse" x1="1585" x2="1663"><stop offset="0" stop-color="#0010ff"/><stop offset="1" stop-color="#3900ff"/></linearGradient>
<linearGradient id="b189" gradientUnits="userSpaceOnUse" x1="1585" x2="1661"><stop offset="0" stop-color="#000fff"/><stop offset="1" stop-color="#3700ff"/></linearGradient>
<linearGradient id="b190" gradientUnits="userSpaceOnUse" x1="1585" x2="1659"><stop offset="0" stop-color="#000fff"/><stop offset="1" stop-color="#3500ff"/></linearGradient>
<linearGradient id="b191" gradientUnits="userSpaceOnUse" x1="1586" x2="1657"><stop offset="0" stop-color="#000eff"/><stop offset="1" stop-color="#30f"/></linearGradient>
<linearGradient id="b192" gradientUnits="userSpaceOnUse" x1="1586" x2="1655"><stop offset="0" stop-color="#000eff"/><stop offset="1" stop-color="#3100ff"/></linearGradient>
<linearGradient id="b193" gradientUnits="userSpaceOnUse" x1="1586" x2="1653"><stop offset="0" stop-color="#000dff"/><stop offset="1" stop-color="#2f00ff"/></linearGradient>
<linearGradient id="b194" gradientUnits="userSpaceOnUse" x1="1587" x2="1651"><stop offset="0" stop-color="#000dff"/><stop offset="1" stop-color="#2d00ff"/></linearGradient>
<linearGradient id="b195" gradientUnits="userSpaceOnUse" x1="1587" x2="1649"><stop offset="0" stop-color="#000cff"/><stop offset="1" stop-color="#2b00ff"/></linearGradient>
<linearGradient id="b196" gradientUnits="userSpaceOnUse" x1="1587" x2="1647"><stop offset="0" stop-color="#000cff"/><stop offset="1" stop-color="#2900ff"/></linearGradient>
<linearGradient id="b197" gradientUnits="userSpaceOnUse" x1="1588" x2="1645"><stop offset="0" stop-color="#000bff"/><stop offset="1" stop-color="#2700ff"/></linearGradient>
<linearGradient id="b198" gradientUnits="userSpaceOnUse" x1="1588" x2="1643"><stop offset="0" stop-color="#000bff"/><stop offset="1" stop-color="#2500ff"/></linearGradient>
<linearGradient id="b199" gradientUnits="userSpaceOnUse" x1="1588" x2="1641"><stop offset="0" stop-color="#000aff"/><stop offset="1" stop-color="#2300ff"/></linearGradient>
<linearGradient id="b200" gradientUnits="userSpaceOnUse" x1="1589" x2="1639"><stop offset="0" stop-color="#000aff"/><stop offset="1" stop-color="#2100ff"/></linearGradient>
<linearGradient id="b201" gradientUnits="userSpaceOnUse" x1="1589" x2="1637"><stop offset="0" stop-color="#0009ff"/><stop offset="1" stop-color="#2000ff"/></linearGradient>
<linearGradient id="b202" gradientUnits="userSpaceOnUse" x1="1589" x2="1635"><stop offset="0" stop-color="#0009ff"/><stop offset="1" stop-color="#1e00ff"/></linearGradient>
<linearGradient id="b203" gradientUnits="userSpaceOnUse" x1="1590" x2="1633"><stop offset="0" stop-color="#0008ff"/><stop offset="1" stop-color="#1c00ff"/></linearGradient>
<linearGradient id="b204" gradientUnits="userSpaceOnUse" x1="1590" x2="1631"><stop offset="0" stop-color="#0008ff"/><stop offset="1" stop-color="#1a00ff"/></linearGradient>
<linearGradient id="b205" gradientUnits="userSpaceOnUse" x1="1590" x2="1629"><stop offset="0" stop-color="#0007ff"/><stop offset="1" stop-color="#1900ff"/></linearGradient>
<linearGradient id="b206" gradientUnits="userSpaceOnUse" x1="1590" x2="1627"><stop offset="0" stop-color="#0007ff"/><stop offset="1" stop-color="#1700ff"/></linearGradient>
<linearGradient id="b207" gradientUnits="userSpaceOnUse" x1="1591" x2="1625"><stop offset="0" stop-color="#0006ff"/><stop offset="1" stop-color="#1500ff"/></linearGradient>
<linearGradient id="b208" gradientUnits="userSpaceOnUse" x1="1591" x2="1624"><stop offset="0" stop-color="#0006ff"/><stop offset="1" stop-color="#1400ff"/></linearGradient>
<linearGradient id="b209" gradientUnits="userSpaceOnUse" x1="1591" x2="1622"><stop offset="0" stop-color="#0005ff"/><stop offset="1" stop-color="#1300ff"/></linearGradient>
<linearGradient id="b210" gradientUnits="userSpaceOnUse" x1="1592" x2="1620"><stop offset="0" stop-color="#0005ff"/><stop offset="1" stop-color="#10f"/></linearGradient>
<linearGradient id="b211" gradientUnits="userSpaceOnUse" x1="1592" x2="1618"><stop offset="0" stop-color="#0004ff"/><stop offset="1" stop-color="#0f00ff"/></linearGradient>
<linearGradient id="b212" gradientUnits="userSpaceOnUse" x1="1592" x2="1616"><stop offset="0" stop-color="#0004ff"/><stop offset="1" stop-color="#0e00ff"/></linearGradient>
<linearGradient id="b213" gradientUnits="userSpaceOnUse" x1="1593" x2="1614"><stop offset="0" stop-color="#0003ff"/><stop offset="1" stop-color="#0c00ff"/></linearGradient>
<linearGradient id="b214" gradientUnits="userSpaceOnUse" x1="1593" x2="1612"><stop offset="0" stop-color="#0003ff"/><stop offset="1" stop-color="#0a00ff"/></linearGradient>
<linearGradient id="b215" gradientUnits="userSpaceOnUse" x1="1593" x2="1610"><stop offset="0" stop-color="#0003ff"/><stop offset="1" stop-color="#0900ff"/></linearGradient>
<linearGradient id="b216" gradientUnits="userSpaceOnUse" x1="1594" x2="1608"><stop offset="0" stop-color="#0002ff"/><stop offset="1" stop-color="#0700ff"/></linearGradient>
<linearGradient id="b217" gradientUnits="userSpaceOnUse" x1="1594" x2="1606"><stop offset="0" stop-color="#0002ff"/><stop offset="1" stop-color="#0600ff"/></linearGradient>
<linearGradient id="b218" gradientUnits="userSpaceOnUse" x1="1594" x2="1604"><stop offset="0" stop-color="#0001ff"/><stop offset="1" stop-color="#0400ff"/></linearGradient>
<linearGradient id="b219" gradientUnits="userSpaceOnUse" x1="1595" x2="1602"><stop offset="0" stop-color="#0001ff"/><stop offset="1" stop-color="#0300ff"/></linearGradient>
<linearGradient id="b220" gradientUnits="userSpaceOnUse" x1="1595" x2="1600"><stop offset="0" stop-color="#0001ff"/><stop offset="1" stop-color="#0100ff"/></linearGradient>
</defs>
<g clip-path="url(#clo)" shape-rendering="crispEdges"><rect x="1391" y="53" width="75" height="2.6" fill="url(#a0)"/><rect x="1381" y="55" width="112" height="2.6" fill="url(#a1)"/><rect x="1375" y="57" width="139" height="2.6" fill="url(#a2)"/><rect x="1372" y="59" width="162" height="2.6" fill="url(#a3)"/><rect x="1368" y="61" width="185" height="2.6" fill="url(#a4)"/><rect x="1366" y="63" width="205" height="2.6" fill="url(#a5)"/><rect x="1364" y="65" width="224" height="2.6" fill="url(#a6)"/><rect x="1362" y="67" width="246" height="2.6" fill="url(#a7)"/><rect x="1360" y="69" width="263" height="2.6" fill="url(#a8)"/><rect x="1358" y="71" width="284" height="2.6" fill="url(#a9)"/><rect x="1358" y="73" width="300" height="2.6" fill="url(#a10)"/><rect x="1356" y="75" width="320" height="2.6" fill="url(#a11)"/><rect x="1356" y="77" width="337" height="2.6" fill="url(#a12)"/><rect x="1355" y="79" width="357" height="2.6" fill="url(#a13)"/><rect x="1354" y="81" width="373" height="2.6" fill="url(#a14)"/><rect x="1353" y="83" width="393" height="2.6" fill="url(#a15)"/><rect x="1353" y="85" width="409" height="2.6" fill="url(#a16)"/><rect x="1352" y="87" width="427" height="2.6" fill="url(#a17)"/><rect x="1352" y="89" width="448" height="2.6" fill="url(#a18)"/><rect x="1352" y="91" width="465" height="2.6" fill="url(#a19)"/><rect x="1351" y="93" width="483" height="2.6" fill="url(#a20)"/><rect x="1351" y="95" width="500" height="2.6" fill="url(#a21)"/><rect x="1351" y="97" width="517" height="2.6" fill="url(#a22)"/><rect x="1351" y="99" width="534" height="2.6" fill="url(#a23)"/><rect x="1351" y="101" width="551" height="2.6" fill="url(#a24)"/><rect x="1351" y="103" width="567" height="2.6" fill="url(#a25)"/><rect x="1351" y="105" width="588" height="2.6" fill="url(#a26)"/><rect x="1351" y="107" width="604" height="2.6" fill="url(#a27)"/><rect x="1352" y="109" width="619" height="2.6" fill="url(#a28)"/><rect x="1352" y="111" width="636" height="2.6" fill="url(#a29)"/><rect x="1352" y="113" width="654" height="2.6" fill="url(#a30)"/><rect x="1352" y="115" width="674" height="2.6" fill="url(#a31)"/><rect x="1353" y="117" width="685" height="2.6" fill="url(#a32)"/><rect x="1353" y="119" width="704" height="2.6" fill="url(#a33)"/><rect x="1353" y="121" width="723" height="2.6" fill="url(#a34)"/><rect x="1354" y="123" width="738" height="2.6" fill="url(#a35)"/><rect x="1354" y="125" width="757" height="2.6" fill="url(#a36)"/><rect x="1354" y="127" width="773" height="2.6" fill="url(#a37)"/><rect x="1355" y="129" width="791" height="2.6" fill="url(#a38)"/><rect x="1355" y="131" width="810" height="2.6" fill="url(#a39)"/><rect x="1355" y="133" width="826" height="2.6" fill="url(#a40)"/><rect x="1356" y="135" width="842" height="2.6" fill="url(#a41)"/><rect x="1356" y="137" width="842" height="2.6" fill="url(#a42)"/><rect x="1357" y="139" width="841" height="2.6" fill="url(#a43)"/><rect x="1357" y="141" width="841" height="2.6" fill="url(#a44)"/><rect x="1358" y="143" width="840" height="2.6" fill="url(#a45)"/><rect x="1359" y="145" width="839" height="2.6" fill="url(#a46)"/><rect x="1359" y="147" width="839" height="2.6" fill="url(#a47)"/><rect x="1360" y="149" width="838" height="2.6" fill="url(#a48)"/><rect x="1360" y="151" width="838" height="2.6" fill="url(#a49)"/><rect x="1361" y="153" width="837" height="2.6" fill="url(#a50)"/><rect x="1361" y="155" width="837" height="2.6" fill="url(#a51)"/><rect x="1362" y="157" width="836" height="2.6" fill="url(#a52)"/><rect x="1362" y="159" width="836" height="2.6" fill="url(#a53)"/><rect x="1363" y="161" width="835" height="2.6" fill="url(#a54)"/><rect x="1363" y="163" width="835" height="2.6" fill="url(#a55)"/><rect x="1364" y="165" width="834" height="2.6" fill="url(#a56)"/><rect x="1364" y="167" width="834" height="2.6" fill="url(#a57)"/><rect x="1365" y="169" width="833" height="2.6" fill="url(#a58)"/><rect x="1365" y="171" width="833" height="2.6" fill="url(#a59)"/><rect x="1366" y="173" width="832" height="2.6" fill="url(#a60)"/><rect x="1367" y="175" width="831" height="2.6" fill="url(#a61)"/><rect x="1367" y="177" width="830" height="2.6" fill="url(#a62)"/><rect x="1368" y="179" width="827" height="2.6" fill="url(#a63)"/><rect x="1368" y="181" width="825" height="2.6" fill="url(#a64)"/><rect x="1369" y="183" width="822" height="2.6" fill="url(#a65)"/><rect x="1370" y="185" width="819" height="2.6" fill="url(#a66)"/><rect x="1370" y="187" width="817" height="2.6" fill="url(#a67)"/><rect x="1371" y="189" width="814" height="2.6" fill="url(#a68)"/><rect x="1372" y="191" width="811" height="2.6" fill="url(#a69)"/><rect x="1373" y="193" width="808" height="2.6" fill="url(#a70)"/><rect x="1373" y="195" width="806" height="2.6" fill="url(#a71)"/><rect x="1374" y="197" width="803" height="2.6" fill="url(#a72)"/><rect x="1375" y="199" width="801" height="2.6" fill="url(#a73)"/><rect x="1375" y="201" width="799" height="2.6" fill="url(#a74)"/><rect x="1376" y="203" width="796" height="2.6" fill="url(#a75)"/><rect x="1377" y="205" width="793" height="2.6" fill="url(#a76)"/><rect x="1378" y="207" width="790" height="2.6" fill="url(#a77)"/><rect x="1379" y="209" width="787" height="2.6" fill="url(#a78)"/><rect x="1379" y="211" width="785" height="2.6" fill="url(#a79)"/><rect x="1380" y="213" width="782" height="2.6" fill="url(#a80)"/><rect x="1381" y="215" width="779" height="2.6" fill="url(#a81)"/><rect x="1382" y="217" width="776" height="2.6" fill="url(#a82)"/><rect x="1382" y="219" width="774" height="2.6" fill="url(#a83)"/><rect x="1383" y="221" width="771" height="2.6" fill="url(#a84)"/><rect x="1384" y="223" width="768" height="2.6" fill="url(#a85)"/><rect x="1385" y="225" width="765" height="2.6" fill="url(#a86)"/><rect x="1385" y="227" width="763" height="2.6" fill="url(#a87)"/><rect x="1386" y="229" width="760" height="2.6" fill="url(#a88)"/><rect x="1387" y="231" width="757" height="2.6" fill="url(#a89)"/><rect x="1387" y="233" width="755" height="2.6" fill="url(#a90)"/><rect x="1388" y="235" width="752" height="2.6" fill="url(#a91)"/><rect x="1389" y="237" width="750" height="2.6" fill="url(#a92)"/><rect x="1390" y="239" width="747" height="2.6" fill="url(#a93)"/><rect x="1391" y="241" width="744" height="2.6" fill="url(#a94)"/><rect x="1392" y="243" width="741" height="2.6" fill="url(#a95)"/><rect x="1393" y="245" width="738" height="2.6" fill="url(#a96)"/><rect x="1393" y="247" width="736" height="2.6" fill="url(#a97)"/><rect x="1394" y="249" width="733" height="2.6" fill="url(#a98)"/><rect x="1395" y="251" width="730" height="2.6" fill="url(#a99)"/><rect x="1396" y="253" width="727" height="2.6" fill="url(#a100)"/><rect x="1397" y="255" width="724" height="2.6" fill="url(#a101)"/><rect x="1398" y="257" width="721" height="2.6" fill="url(#a102)"/><rect x="1398" y="259" width="719" height="2.6" fill="url(#a103)"/><rect x="1399" y="261" width="716" height="2.6" fill="url(#a104)"/><rect x="1400" y="263" width="713" height="2.6" fill="url(#a105)"/><rect x="1401" y="265" width="710" height="2.6" fill="url(#a106)"/><rect x="1402" y="267" width="707" height="2.6" fill="url(#a107)"/><rect x="1403" y="269" width="704" height="2.6" fill="url(#a108)"/><rect x="1404" y="271" width="701" height="2.6" fill="url(#a109)"/><rect x="1405" y="273" width="698" height="2.6" fill="url(#a110)"/><rect x="1405" y="275" width="697" height="2.6" fill="url(#a111)"/><rect x="1406" y="277" width="694" height="2.6" fill="url(#a112)"/><rect x="1407" y="279" width="691" height="2.6" fill="url(#a113)"/><rect x="1408" y="281" width="688" height="2.6" fill="url(#a114)"/><rect x="1409" y="283" width="685" height="2.6" fill="url(#a115)"/><rect x="1410" y="285" width="682" height="2.6" fill="url(#a116)"/><rect x="1410" y="287" width="680" height="2.6" fill="url(#a117)"/><rect x="1411" y="289" width="677" height="2.6" fill="url(#a118)"/><rect x="1412" y="291" width="674" height="2.6" fill="url(#a119)"/><rect x="1413" y="293" width="671" height="2.6" fill="url(#a120)"/><rect x="1414" y="295" width="668" height="2.6" fill="url(#a121)"/><rect x="1415" y="297" width="665" height="2.6" fill="url(#a122)"/><rect x="1416" y="299" width="662" height="2.6" fill="url(#a123)"/><rect x="1417" y="301" width="659" height="2.6" fill="url(#a124)"/><rect x="1418" y="303" width="656" height="2.6" fill="url(#a125)"/><rect x="1419" y="305" width="653" height="2.6" fill="url(#a126)"/><rect x="1420" y="307" width="650" height="2.6" fill="url(#a127)"/><rect x="1421" y="309" width="647" height="2.6" fill="url(#a128)"/><rect x="1422" y="311" width="644" height="2.6" fill="url(#a129)"/><rect x="1423" y="313" width="642" height="2.6" fill="url(#a130)"/><rect x="1424" y="315" width="639" height="2.6" fill="url(#a131)"/><rect x="1425" y="317" width="636" height="2.6" fill="url(#a132)"/><rect x="1426" y="319" width="633" height="2.6" fill="url(#a133)"/><rect x="1427" y="321" width="630" height="2.6" fill="url(#a134)"/><rect x="1428" y="323" width="627" height="2.6" fill="url(#a135)"/><rect x="1429" y="325" width="624" height="2.6" fill="url(#a136)"/><rect x="1430" y="327" width="621" height="2.6" fill="url(#a137)"/><rect x="1431" y="329" width="618" height="2.6" fill="url(#a138)"/><rect x="1432" y="331" width="615" height="2.6" fill="url(#a139)"/><rect x="1433" y="333" width="612" height="2.6" fill="url(#a140)"/><rect x="1434" y="335" width="609" height="2.6" fill="url(#a141)"/><rect x="1435" y="337" width="606" height="2.6" fill="url(#a142)"/><rect x="1437" y="339" width="602" height="2.6" fill="url(#a143)"/><rect x="1438" y="341" width="599" height="2.6" fill="url(#a144)"/><rect x="1439" y="343" width="596" height="2.6" fill="url(#a145)"/><rect x="1440" y="345" width="593" height="2.6" fill="url(#a146)"/><rect x="1441" y="347" width="590" height="2.6" fill="url(#a147)"/><rect x="1442" y="349" width="587" height="2.6" fill="url(#a148)"/><rect x="1443" y="351" width="585" height="2.6" fill="url(#a149)"/><rect x="1444" y="353" width="582" height="2.6" fill="url(#a150)"/><rect x="1445" y="355" width="579" height="2.6" fill="url(#a151)"/><rect x="1446" y="357" width="576" height="2.6" fill="url(#a152)"/><rect x="1447" y="359" width="573" height="2.6" fill="url(#a153)"/><rect x="1448" y="361" width="570" height="2.6" fill="url(#a154)"/><rect x="1449" y="363" width="567" height="2.6" fill="url(#a155)"/><rect x="1451" y="365" width="563" height="2.6" fill="url(#a156)"/><rect x="1452" y="367" width="560" height="2.6" fill="url(#a157)"/><rect x="1453" y="369" width="557" height="2.6" fill="url(#a158)"/><rect x="1454" y="371" width="554" height="2.6" fill="url(#a159)"/><rect x="1455" y="373" width="551" height="2.6" fill="url(#a160)"/><rect x="1456" y="375" width="548" height="2.6" fill="url(#a161)"/><rect x="1457" y="377" width="545" height="2.6" fill="url(#a162)"/><rect x="1458" y="379" width="542" height="2.6" fill="url(#a163)"/><rect x="1459" y="381" width="539" height="2.6" fill="url(#a164)"/><rect x="1460" y="383" width="536" height="2.6" fill="url(#a165)"/><rect x="1462" y="385" width="532" height="2.6" fill="url(#a166)"/><rect x="1463" y="387" width="529" height="2.6" fill="url(#a167)"/><rect x="1464" y="389" width="527" height="2.6" fill="url(#a168)"/><rect x="1466" y="391" width="523" height="2.6" fill="url(#a169)"/><rect x="1467" y="393" width="520" height="2.6" fill="url(#a170)"/><rect x="1468" y="395" width="517" height="2.6" fill="url(#a171)"/><rect x="1469" y="397" width="514" height="2.6" fill="url(#a172)"/><rect x="1470" y="399" width="511" height="2.6" fill="url(#a173)"/><rect x="1471" y="401" width="508" height="2.6" fill="url(#a174)"/><rect x="1472" y="403" width="505" height="2.6" fill="url(#a175)"/><rect x="1473" y="405" width="502" height="2.6" fill="url(#a176)"/><rect x="1475" y="407" width="498" height="2.6" fill="url(#a177)"/><rect x="1476" y="409" width="495" height="2.6" fill="url(#a178)"/><rect x="1477" y="411" width="492" height="2.6" fill="url(#a179)"/><rect x="1479" y="413" width="488" height="2.6" fill="url(#a180)"/><rect x="1480" y="415" width="485" height="2.6" fill="url(#a181)"/><rect x="1481" y="417" width="482" height="2.6" fill="url(#a182)"/><rect x="1482" y="419" width="479" height="2.6" fill="url(#a183)"/><rect x="1483" y="421" width="476" height="2.6" fill="url(#a184)"/><rect x="1484" y="423" width="473" height="2.6" fill="url(#a185)"/><rect x="1485" y="425" width="470" height="2.6" fill="url(#a186)"/><rect x="1486" y="427" width="468" height="2.6" fill="url(#a187)"/><rect x="1488" y="429" width="464" height="2.6" fill="url(#a188)"/><rect x="1489" y="431" width="461" height="2.6" fill="url(#a189)"/><rect x="1490" y="433" width="458" height="2.6" fill="url(#a190)"/><rect x="1492" y="435" width="454" height="2.6" fill="url(#a191)"/><rect x="1493" y="437" width="451" height="2.6" fill="url(#a192)"/><rect x="1494" y="439" width="448" height="2.6" fill="url(#a193)"/><rect x="1496" y="441" width="444" height="2.6" fill="url(#a194)"/><rect x="1497" y="443" width="441" height="2.6" fill="url(#a195)"/><rect x="1498" y="445" width="438" height="2.6" fill="url(#a196)"/><rect x="1499" y="447" width="435" height="2.6" fill="url(#a197)"/><rect x="1500" y="449" width="432" height="2.6" fill="url(#a198)"/><rect x="1501" y="451" width="429" height="2.6" fill="url(#a199)"/><rect x="1503" y="453" width="425" height="2.6" fill="url(#a200)"/><rect x="1504" y="455" width="422" height="2.6" fill="url(#a201)"/><rect x="1506" y="457" width="418" height="2.6" fill="url(#a202)"/><rect x="1507" y="459" width="415" height="2.6" fill="url(#a203)"/><rect x="1508" y="461" width="412" height="2.6" fill="url(#a204)"/><rect x="1509" y="463" width="409" height="2.6" fill="url(#a205)"/><rect x="1511" y="465" width="406" height="2.6" fill="url(#a206)"/><rect x="1512" y="467" width="403" height="2.6" fill="url(#a207)"/><rect x="1514" y="469" width="399" height="2.6" fill="url(#a208)"/><rect x="1515" y="471" width="396" height="2.6" fill="url(#a209)"/><rect x="1516" y="473" width="393" height="2.6" fill="url(#a210)"/><rect x="1518" y="475" width="389" height="2.6" fill="url(#a211)"/><rect x="1519" y="477" width="386" height="2.6" fill="url(#a212)"/><rect x="1520" y="479" width="383" height="2.6" fill="url(#a213)"/><rect x="1522" y="481" width="379" height="2.6" fill="url(#a214)"/><rect x="1523" y="483" width="376" height="2.6" fill="url(#a215)"/><rect x="1525" y="485" width="372" height="2.6" fill="url(#a216)"/><rect x="1526" y="487" width="369" height="2.6" fill="url(#a217)"/><rect x="1527" y="489" width="366" height="2.6" fill="url(#a218)"/><rect x="1529" y="491" width="362" height="2.6" fill="url(#a219)"/><rect x="1530" y="493" width="359" height="2.6" fill="url(#a220)"/><rect x="1532" y="495" width="355" height="2.6" fill="url(#a221)"/><rect x="1533" y="497" width="352" height="2.6" fill="url(#a222)"/><rect x="1534" y="499" width="349" height="2.6" fill="url(#a223)"/><rect x="1536" y="501" width="345" height="2.6" fill="url(#a224)"/><rect x="1537" y="503" width="343" height="2.6" fill="url(#a225)"/><rect x="1539" y="505" width="339" height="2.6" fill="url(#a226)"/><rect x="1540" y="507" width="336" height="2.6" fill="url(#a227)"/><rect x="1541" y="509" width="333" height="2.6" fill="url(#a228)"/><rect x="1543" y="511" width="329" height="2.6" fill="url(#a229)"/><rect x="1544" y="513" width="326" height="2.6" fill="url(#a230)"/><rect x="1546" y="515" width="322" height="2.6" fill="url(#a231)"/><rect x="1547" y="517" width="319" height="2.6" fill="url(#a232)"/><rect x="1549" y="519" width="315" height="2.6" fill="url(#a233)"/><rect x="1550" y="521" width="312" height="2.6" fill="url(#a234)"/><rect x="1552" y="523" width="308" height="2.6" fill="url(#a235)"/><rect x="1553" y="525" width="305" height="2.6" fill="url(#a236)"/><rect x="1555" y="527" width="301" height="2.6" fill="url(#a237)"/><rect x="1556" y="529" width="298" height="2.6" fill="url(#a238)"/><rect x="1557" y="531" width="295" height="2.6" fill="url(#a239)"/><rect x="1559" y="533" width="291" height="2.6" fill="url(#a240)"/><rect x="1560" y="535" width="288" height="2.6" fill="url(#a241)"/><rect x="1562" y="537" width="284" height="2.6" fill="url(#a242)"/><rect x="1563" y="539" width="281" height="2.6" fill="url(#a243)"/><rect x="1565" y="541" width="278" height="2.6" fill="url(#a244)"/><rect x="1567" y="543" width="274" height="2.6" fill="url(#a245)"/><rect x="1568" y="545" width="271" height="2.6" fill="url(#a246)"/><rect x="1570" y="547" width="267" height="2.6" fill="url(#a247)"/><rect x="1571" y="549" width="264" height="2.6" fill="url(#a248)"/><rect x="1573" y="551" width="260" height="2.6" fill="url(#a249)"/><rect x="1575" y="553" width="256" height="2.6" fill="url(#a250)"/><rect x="1577" y="555" width="252" height="2.6" fill="url(#a251)"/><rect x="1579" y="557" width="248" height="2.6" fill="url(#a252)"/><rect x="1580" y="559" width="245" height="2.6" fill="url(#a253)"/><rect x="1581" y="561" width="242" height="2.6" fill="url(#a254)"/><rect x="1583" y="563" width="238" height="2.6" fill="url(#a255)"/><rect x="1585" y="565" width="234" height="2.6" fill="url(#a256)"/><rect x="1587" y="567" width="230" height="2.6" fill="url(#a257)"/><rect x="1588" y="569" width="227" height="2.6" fill="url(#a258)"/><rect x="1590" y="571" width="223" height="2.6" fill="url(#a259)"/><rect x="1592" y="573" width="219" height="2.6" fill="url(#a260)"/><rect x="1594" y="575" width="215" height="2.6" fill="url(#a261)"/><rect x="1595" y="577" width="212" height="2.6" fill="url(#a262)"/><rect x="1597" y="579" width="209" height="2.6" fill="url(#a263)"/><rect x="1599" y="581" width="205" height="2.6" fill="url(#a264)"/><rect x="1601" y="583" width="201" height="2.6" fill="url(#a265)"/><rect x="1603" y="585" width="197" height="2.6" fill="url(#a266)"/><rect x="1605" y="587" width="193" height="2.6" fill="url(#a267)"/><rect x="1607" y="589" width="189" height="2.6" fill="url(#a268)"/><rect x="1609" y="591" width="185" height="2.6" fill="url(#a269)"/><rect x="1611" y="593" width="181" height="2.6" fill="url(#a270)"/><rect x="1613" y="595" width="177" height="2.6" fill="url(#a271)"/><rect x="1615" y="597" width="173" height="2.6" fill="url(#a272)"/><rect x="1617" y="599" width="169" height="2.6" fill="url(#a273)"/><rect x="1619" y="601" width="165" height="2.6" fill="url(#a274)"/><rect x="1621" y="603" width="161" height="2.6" fill="url(#a275)"/><rect x="1623" y="605" width="157" height="2.6" fill="url(#a276)"/><rect x="1625" y="607" width="153" height="2.6" fill="url(#a277)"/><rect x="1628" y="609" width="148" height="2.6" fill="url(#a278)"/><rect x="1630" y="611" width="144" height="2.6" fill="url(#a279)"/><rect x="1632" y="613" width="140" height="2.6" fill="url(#a280)"/><rect x="1635" y="615" width="135" height="2.6" fill="url(#a281)"/><rect x="1637" y="617" width="132" height="2.6" fill="url(#a282)"/><rect x="1638" y="619" width="129" height="2.6" fill="url(#a283)"/><rect x="1641" y="621" width="124" height="2.6" fill="url(#a284)"/><rect x="1643" y="623" width="120" height="2.6" fill="url(#a285)"/><rect x="1646" y="625" width="115" height="2.6" fill="url(#a286)"/><rect x="1649" y="627" width="110" height="2.6" fill="url(#a287)"/><rect x="1650" y="629" width="107" height="2.6" fill="url(#a288)"/><rect x="1653" y="631" width="102" height="2.6" fill="url(#a289)"/><rect x="1655" y="633" width="98" height="2.6" fill="url(#a290)"/><rect x="1658" y="635" width="93" height="2.6" fill="url(#a291)"/><rect x="1661" y="637" width="88" height="2.6" fill="url(#a292)"/><rect x="1663" y="639" width="84" height="2.6" fill="url(#a293)"/><rect x="1665" y="641" width="80" height="2.6" fill="url(#a294)"/><rect x="1668" y="643" width="75" height="2.6" fill="url(#a295)"/><rect x="1670" y="645" width="71" height="2.6" fill="url(#a296)"/><rect x="1673" y="647" width="66" height="2.6" fill="url(#a297)"/><rect x="1675" y="649" width="62" height="2.6" fill="url(#a298)"/><rect x="1677" y="651" width="58" height="2.6" fill="url(#a299)"/><rect x="1680" y="653" width="53" height="2.6" fill="url(#a300)"/><rect x="1681" y="655" width="51" height="2.6" fill="url(#a301)"/><rect x="1684" y="657" width="46" height="2.6" fill="url(#a302)"/><rect x="1687" y="659" width="41" height="2.6" fill="url(#a303)"/><rect x="1689" y="661" width="37" height="2.6" fill="url(#a304)"/><rect x="1691" y="663" width="33" height="2.6" fill="url(#a305)"/><rect x="1694" y="665" width="28" height="2.6" fill="url(#a306)"/><rect x="1697" y="667" width="23" height="2.6" fill="url(#a307)"/><rect x="1699" y="669" width="19" height="2.6" fill="url(#a308)"/><rect x="1702" y="671" width="14" height="2.6" fill="url(#a309)"/><rect x="1705" y="673" width="10" height="1.6" fill="url(#a310)"/></g>
<g clip-path="url(#ctr)" shape-rendering="crispEdges"><rect x="1524" y="79" width="16" height="2.6" fill="url(#b0)"/><rect x="1524" y="81" width="37" height="2.6" fill="url(#b1)"/><rect x="1525" y="83" width="57" height="2.6" fill="url(#b2)"/><rect x="1525" y="85" width="79" height="2.6" fill="url(#b3)"/><rect x="1525" y="87" width="100" height="2.6" fill="url(#b4)"/><rect x="1526" y="89" width="121" height="2.6" fill="url(#b5)"/><rect x="1526" y="91" width="142" height="2.6" fill="url(#b6)"/><rect x="1526" y="93" width="163" height="2.6" fill="url(#b7)"/><rect x="1527" y="95" width="184" height="2.6" fill="url(#b8)"/><rect x="1527" y="97" width="205" height="2.6" fill="url(#b9)"/><rect x="1527" y="99" width="227" height="2.6" fill="url(#b10)"/><rect x="1528" y="101" width="247" height="2.6" fill="url(#b11)"/><rect x="1528" y="103" width="268" height="2.6" fill="url(#b12)"/><rect x="1528" y="105" width="290" height="2.6" fill="url(#b13)"/><rect x="1529" y="107" width="310" height="2.6" fill="url(#b14)"/><rect x="1529" y="109" width="332" height="2.6" fill="url(#b15)"/><rect x="1529" y="111" width="353" height="2.6" fill="url(#b16)"/><rect x="1529" y="113" width="374" height="2.6" fill="url(#b17)"/><rect x="1530" y="115" width="395" height="2.6" fill="url(#b18)"/><rect x="1530" y="117" width="416" height="2.6" fill="url(#b19)"/><rect x="1530" y="119" width="438" height="2.6" fill="url(#b20)"/><rect x="1531" y="121" width="458" height="2.6" fill="url(#b21)"/><rect x="1531" y="123" width="457" height="2.6" fill="url(#b22)"/><rect x="1531" y="125" width="455" height="2.6" fill="url(#b23)"/><rect x="1532" y="127" width="452" height="2.6" fill="url(#b24)"/><rect x="1532" y="129" width="450" height="2.6" fill="url(#b25)"/><rect x="1532" y="131" width="448" height="2.6" fill="url(#b26)"/><rect x="1533" y="133" width="445" height="2.6" fill="url(#b27)"/><rect x="1533" y="135" width="443" height="2.6" fill="url(#b28)"/><rect x="1533" y="137" width="441" height="2.6" fill="url(#b29)"/><rect x="1534" y="139" width="438" height="2.6" fill="url(#b30)"/><rect x="1534" y="141" width="436" height="2.6" fill="url(#b31)"/><rect x="1534" y="143" width="434" height="2.6" fill="url(#b32)"/><rect x="1535" y="145" width="431" height="2.6" fill="url(#b33)"/><rect x="1535" y="147" width="430" height="2.6" fill="url(#b34)"/><rect x="1535" y="149" width="428" height="2.6" fill="url(#b35)"/><rect x="1536" y="151" width="425" height="2.6" fill="url(#b36)"/><rect x="1536" y="153" width="423" height="2.6" fill="url(#b37)"/><rect x="1536" y="155" width="421" height="2.6" fill="url(#b38)"/><rect x="1537" y="157" width="418" height="2.6" fill="url(#b39)"/><rect x="1537" y="159" width="416" height="2.6" fill="url(#b40)"/><rect x="1537" y="161" width="414" height="2.6" fill="url(#b41)"/><rect x="1538" y="163" width="411" height="2.6" fill="url(#b42)"/><rect x="1538" y="165" width="409" height="2.6" fill="url(#b43)"/><rect x="1538" y="167" width="407" height="2.6" fill="url(#b44)"/><rect x="1539" y="169" width="404" height="2.6" fill="url(#b45)"/><rect x="1539" y="171" width="402" height="2.6" fill="url(#b46)"/><rect x="1539" y="173" width="400" height="2.6" fill="url(#b47)"/><rect x="1539" y="175" width="398" height="2.6" fill="url(#b48)"/><rect x="1540" y="177" width="395" height="2.6" fill="url(#b49)"/><rect x="1540" y="179" width="393" height="2.6" fill="url(#b50)"/><rect x="1540" y="181" width="391" height="2.6" fill="url(#b51)"/><rect x="1541" y="183" width="388" height="2.6" fill="url(#b52)"/><rect x="1541" y="185" width="386" height="2.6" fill="url(#b53)"/><rect x="1541" y="187" width="384" height="2.6" fill="url(#b54)"/><rect x="1542" y="189" width="381" height="2.6" fill="url(#b55)"/><rect x="1542" y="191" width="379" height="2.6" fill="url(#b56)"/><rect x="1542" y="193" width="377" height="2.6" fill="url(#b57)"/><rect x="1543" y="195" width="374" height="2.6" fill="url(#b58)"/><rect x="1543" y="197" width="373" height="2.6" fill="url(#b59)"/><rect x="1543" y="199" width="371" height="2.6" fill="url(#b60)"/><rect x="1544" y="201" width="368" height="2.6" fill="url(#b61)"/><rect x="1544" y="203" width="366" height="2.6" fill="url(#b62)"/><rect x="1544" y="205" width="364" height="2.6" fill="url(#b63)"/><rect x="1545" y="207" width="361" height="2.6" fill="url(#b64)"/><rect x="1545" y="209" width="359" height="2.6" fill="url(#b65)"/><rect x="1545" y="211" width="357" height="2.6" fill="url(#b66)"/><rect x="1546" y="213" width="354" height="2.6" fill="url(#b67)"/><rect x="1546" y="215" width="352" height="2.6" fill="url(#b68)"/><rect x="1546" y="217" width="350" height="2.6" fill="url(#b69)"/><rect x="1547" y="219" width="347" height="2.6" fill="url(#b70)"/><rect x="1547" y="221" width="345" height="2.6" fill="url(#b71)"/><rect x="1547" y="223" width="343" height="2.6" fill="url(#b72)"/><rect x="1548" y="225" width="340" height="2.6" fill="url(#b73)"/><rect x="1548" y="227" width="338" height="2.6" fill="url(#b74)"/><rect x="1548" y="229" width="336" height="2.6" fill="url(#b75)"/><rect x="1549" y="231" width="333" height="2.6" fill="url(#b76)"/><rect x="1549" y="233" width="331" height="2.6" fill="url(#b77)"/><rect x="1549" y="235" width="329" height="2.6" fill="url(#b78)"/><rect x="1549" y="237" width="327" height="2.6" fill="url(#b79)"/><rect x="1550" y="239" width="324" height="2.6" fill="url(#b80)"/><rect x="1550" y="241" width="322" height="2.6" fill="url(#b81)"/><rect x="1550" y="243" width="320" height="2.6" fill="url(#b82)"/><rect x="1551" y="245" width="317" height="2.6" fill="url(#b83)"/><rect x="1551" y="247" width="316" height="2.6" fill="url(#b84)"/><rect x="1551" y="249" width="314" height="2.6" fill="url(#b85)"/><rect x="1552" y="251" width="311" height="2.6" fill="url(#b86)"/><rect x="1552" y="253" width="309" height="2.6" fill="url(#b87)"/><rect x="1552" y="255" width="307" height="2.6" fill="url(#b88)"/><rect x="1553" y="257" width="304" height="2.6" fill="url(#b89)"/><rect x="1553" y="259" width="302" height="2.6" fill="url(#b90)"/><rect x="1553" y="261" width="300" height="2.6" fill="url(#b91)"/><rect x="1554" y="263" width="297" height="2.6" fill="url(#b92)"/><rect x="1554" y="265" width="295" height="2.6" fill="url(#b93)"/><rect x="1554" y="267" width="293" height="2.6" fill="url(#b94)"/><rect x="1555" y="269" width="290" height="2.6" fill="url(#b95)"/><rect x="1555" y="271" width="288" height="2.6" fill="url(#b96)"/><rect x="1555" y="273" width="286" height="2.6" fill="url(#b97)"/><rect x="1556" y="275" width="283" height="2.6" fill="url(#b98)"/><rect x="1556" y="277" width="281" height="2.6" fill="url(#b99)"/><rect x="1556" y="279" width="279" height="2.6" fill="url(#b100)"/><rect x="1557" y="281" width="276" height="2.6" fill="url(#b101)"/><rect x="1557" y="283" width="274" height="2.6" fill="url(#b102)"/><rect x="1557" y="285" width="272" height="2.6" fill="url(#b103)"/><rect x="1558" y="287" width="269" height="2.6" fill="url(#b104)"/><rect x="1558" y="289" width="267" height="2.6" fill="url(#b105)"/><rect x="1558" y="291" width="265" height="2.6" fill="url(#b106)"/><rect x="1559" y="293" width="262" height="2.6" fill="url(#b107)"/><rect x="1559" y="295" width="260" height="2.6" fill="url(#b108)"/><rect x="1559" y="297" width="259" height="2.6" fill="url(#b109)"/><rect x="1560" y="299" width="256" height="2.6" fill="url(#b110)"/><rect x="1560" y="301" width="254" height="2.6" fill="url(#b111)"/><rect x="1560" y="303" width="252" height="2.6" fill="url(#b112)"/><rect x="1560" y="305" width="250" height="2.6" fill="url(#b113)"/><rect x="1561" y="307" width="247" height="2.6" fill="url(#b114)"/><rect x="1561" y="309" width="245" height="2.6" fill="url(#b115)"/><rect x="1561" y="311" width="243" height="2.6" fill="url(#b116)"/><rect x="1562" y="313" width="240" height="2.6" fill="url(#b117)"/><rect x="1562" y="315" width="238" height="2.6" fill="url(#b118)"/><rect x="1562" y="317" width="236" height="2.6" fill="url(#b119)"/><rect x="1563" y="319" width="233" height="2.6" fill="url(#b120)"/><rect x="1563" y="321" width="231" height="2.6" fill="url(#b121)"/><rect x="1563" y="323" width="229" height="2.6" fill="url(#b122)"/><rect x="1564" y="325" width="226" height="2.6" fill="url(#b123)"/><rect x="1564" y="327" width="224" height="2.6" fill="url(#b124)"/><rect x="1564" y="329" width="222" height="2.6" fill="url(#b125)"/><rect x="1565" y="331" width="219" height="2.6" fill="url(#b126)"/><rect x="1565" y="333" width="217" height="2.6" fill="url(#b127)"/><rect x="1565" y="335" width="215" height="2.6" fill="url(#b128)"/><rect x="1566" y="337" width="212" height="2.6" fill="url(#b129)"/><rect x="1566" y="339" width="210" height="2.6" fill="url(#b130)"/><rect x="1566" y="341" width="208" height="2.6" fill="url(#b131)"/><rect x="1567" y="343" width="205" height="2.6" fill="url(#b132)"/><rect x="1567" y="345" width="203" height="2.6" fill="url(#b133)"/><rect x="1567" y="347" width="202" height="2.6" fill="url(#b134)"/><rect x="1568" y="349" width="199" height="2.6" fill="url(#b135)"/><rect x="1568" y="351" width="197" height="2.6" fill="url(#b136)"/><rect x="1568" y="353" width="195" height="2.6" fill="url(#b137)"/><rect x="1569" y="355" width="192" height="2.6" fill="url(#b138)"/><rect x="1569" y="357" width="190" height="2.6" fill="url(#b139)"/><rect x="1569" y="359" width="188" height="2.6" fill="url(#b140)"/><rect x="1570" y="361" width="185" height="2.6" fill="url(#b141)"/><rect x="1570" y="363" width="183" height="2.6" fill="url(#b142)"/><rect x="1570" y="365" width="181" height="2.6" fill="url(#b143)"/><rect x="1570" y="367" width="179" height="2.6" fill="url(#b144)"/><rect x="1571" y="369" width="176" height="2.6" fill="url(#b145)"/><rect x="1571" y="371" width="174" height="2.6" fill="url(#b146)"/><rect x="1571" y="373" width="172" height="2.6" fill="url(#b147)"/><rect x="1572" y="375" width="169" height="2.6" fill="url(#b148)"/><rect x="1572" y="377" width="167" height="2.6" fill="url(#b149)"/><rect x="1572" y="379" width="165" height="2.6" fill="url(#b150)"/><rect x="1573" y="381" width="162" height="2.6" fill="url(#b151)"/><rect x="1573" y="383" width="160" height="2.6" fill="url(#b152)"/><rect x="1573" y="385" width="158" height="2.6" fill="url(#b153)"/><rect x="1574" y="387" width="155" height="2.6" fill="url(#b154)"/><rect x="1574" y="389" width="153" height="2.6" fill="url(#b155)"/><rect x="1574" y="391" width="151" height="2.6" fill="url(#b156)"/><rect x="1575" y="393" width="148" height="2.6" fill="url(#b157)"/><rect x="1575" y="395" width="147" height="2.6" fill="url(#b158)"/><rect x="1575" y="397" width="145" height="2.6" fill="url(#b159)"/><rect x="1576" y="399" width="142" height="2.6" fill="url(#b160)"/><rect x="1576" y="401" width="140" height="2.6" fill="url(#b161)"/><rect x="1576" y="403" width="138" height="2.6" fill="url(#b162)"/><rect x="1577" y="405" width="135" height="2.6" fill="url(#b163)"/><rect x="1577" y="407" width="133" height="2.6" fill="url(#b164)"/><rect x="1577" y="409" width="131" height="2.6" fill="url(#b165)"/><rect x="1578" y="411" width="128" height="2.6" fill="url(#b166)"/><rect x="1578" y="413" width="126" height="2.6" fill="url(#b167)"/><rect x="1578" y="415" width="124" height="2.6" fill="url(#b168)"/><rect x="1579" y="417" width="121" height="2.6" fill="url(#b169)"/><rect x="1579" y="419" width="119" height="2.6" fill="url(#b170)"/><rect x="1579" y="421" width="117" height="2.6" fill="url(#b171)"/><rect x="1580" y="423" width="114" height="2.6" fill="url(#b172)"/><rect x="1580" y="425" width="112" height="2.6" fill="url(#b173)"/><rect x="1580" y="427" width="110" height="2.6" fill="url(#b174)"/><rect x="1580" y="429" width="108" height="2.6" fill="url(#b175)"/><rect x="1581" y="431" width="105" height="2.6" fill="url(#b176)"/><rect x="1581" y="433" width="103" height="2.6" fill="url(#b177)"/><rect x="1581" y="435" width="101" height="2.6" fill="url(#b178)"/><rect x="1582" y="437" width="98" height="2.6" fill="url(#b179)"/><rect x="1582" y="439" width="96" height="2.6" fill="url(#b180)"/><rect x="1582" y="441" width="94" height="2.6" fill="url(#b181)"/><rect x="1583" y="443" width="91" height="2.6" fill="url(#b182)"/><rect x="1583" y="445" width="90" height="2.6" fill="url(#b183)"/><rect x="1583" y="447" width="88" height="2.6" fill="url(#b184)"/><rect x="1584" y="449" width="85" height="2.6" fill="url(#b185)"/><rect x="1584" y="451" width="83" height="2.6" fill="url(#b186)"/><rect x="1584" y="453" width="81" height="2.6" fill="url(#b187)"/><rect x="1585" y="455" width="78" height="2.6" fill="url(#b188)"/><rect x="1585" y="457" width="76" height="2.6" fill="url(#b189)"/><rect x="1585" y="459" width="74" height="2.6" fill="url(#b190)"/><rect x="1586" y="461" width="71" height="2.6" fill="url(#b191)"/><rect x="1586" y="463" width="69" height="2.6" fill="url(#b192)"/><rect x="1586" y="465" width="67" height="2.6" fill="url(#b193)"/><rect x="1587" y="467" width="64" height="2.6" fill="url(#b194)"/><rect x="1587" y="469" width="62" height="2.6" fill="url(#b195)"/><rect x="1587" y="471" width="60" height="2.6" fill="url(#b196)"/><rect x="1588" y="473" width="57" height="2.6" fill="url(#b197)"/><rect x="1588" y="475" width="55" height="2.6" fill="url(#b198)"/><rect x="1588" y="477" width="53" height="2.6" fill="url(#b199)"/><rect x="1589" y="479" width="50" height="2.6" fill="url(#b200)"/><rect x="1589" y="481" width="48" height="2.6" fill="url(#b201)"/><rect x="1589" y="483" width="46" height="2.6" fill="url(#b202)"/><rect x="1590" y="485" width="43" height="2.6" fill="url(#b203)"/><rect x="1590" y="487" width="41" height="2.6" fill="url(#b204)"/><rect x="1590" y="489" width="39" height="2.6" fill="url(#b205)"/><rect x="1590" y="491" width="37" height="2.6" fill="url(#b206)"/><rect x="1591" y="493" width="34" height="2.6" fill="url(#b207)"/><rect x="1591" y="495" width="33" height="2.6" fill="url(#b208)"/><rect x="1591" y="497" width="31" height="2.6" fill="url(#b209)"/><rect x="1592" y="499" width="28" height="2.6" fill="url(#b210)"/><rect x="1592" y="501" width="26" height="2.6" fill="url(#b211)"/><rect x="1592" y="503" width="24" height="2.6" fill="url(#b212)"/><rect x="1593" y="505" width="21" height="2.6" fill="url(#b213)"/><rect x="1593" y="507" width="19" height="2.6" fill="url(#b214)"/><rect x="1593" y="509" width="17" height="2.6" fill="url(#b215)"/><rect x="1594" y="511" width="14" height="2.6" fill="url(#b216)"/><rect x="1594" y="513" width="12" height="2.6" fill="url(#b217)"/><rect x="1594" y="515" width="10" height="2.6" fill="url(#b218)"/><rect x="1595" y="517" width="7" height="2.6" fill="url(#b219)"/><rect x="1595" y="519" width="5" height="1.6" fill="url(#b220)"/></g>
<path d="M1351 41h6a6 6 0 0 1 -6 6z" fill="#000"/>
<rect x="1548.9" y="102.0" width="18" height="18" fill="none" stroke="#fff" stroke-width="2"/>
<rect x="1601.0" y="91.0" width="18" height="18" fill="none" stroke="#fff" stroke-width="2"/>
<rect x="1664.5" y="85.9" width="18" height="18" fill="none" stroke="#fff" stroke-width="2"/>
<rect x="1706.0" y="95.0" width="18" height="18" fill="none" stroke="#fff" stroke-width="2"/>
<rect x="1763.9" y="99.9" width="18" height="18" fill="none" stroke="#fff" stroke-width="2"/>
<rect x="1597.9" y="120.0" width="18" height="18" fill="none" stroke="#fff" stroke-width="2"/>
<rect x="1684.0" y="138.0" width="18" height="18" fill="none" stroke="#fff" stroke-width="2"/>
<rect x="1669.9" y="147.0" width="18" height="18" fill="none" stroke="#fff" stroke-width="2"/>
<rect x="1789.0" y="155.8" width="18" height="18" fill="none" stroke="#fff" stroke-width="2"/>
<rect x="1558.0" y="161.9" width="18" height="18" fill="none" stroke="#fff" stroke-width="2"/>
<rect x="1745.9" y="217.9" width="18" height="18" fill="none" stroke="#fff" stroke-width="2"/>
<rect x="1543.3" y="228.3" width="18" height="18" fill="none" stroke="#fff" stroke-width="2"/>
<rect x="1588.9" y="224.7" width="18" height="18" fill="none" stroke="#fff" stroke-width="2"/>
<rect x="1615.8" y="231.8" width="18" height="18" fill="none" stroke="#fff" stroke-width="2"/>
<rect x="1869.8" y="139.8" width="18" height="18" fill="none" stroke="#fff" stroke-width="2"/>
<rect x="1662.9" y="255.2" width="18" height="18" fill="none" stroke="#fff" stroke-width="2"/>
<rect x="1591.8" y="294.7" width="18" height="18" fill="none" stroke="#fff" stroke-width="2"/>
<rect x="1591.8" y="361.5" width="18" height="18" fill="none" stroke="#fff" stroke-width="2"/>
<rect x="1619.0" y="172.3" width="18" height="18" fill="none" stroke="#000" stroke-width="2"/>
<circle cx="1552.4" cy="113.0" r="5.6" fill="#469449" stroke="#000" stroke-width="1.4"/>
<circle cx="1602.9" cy="100.6" r="5.6" fill="#9dbc40" stroke="#000" stroke-width="1.4"/>
<circle cx="1671.6" cy="94.5" r="5.6" fill="#e7c71f" stroke="#000" stroke-width="1.4"/>
<circle cx="1715.0" cy="104.0" r="5.6" fill="#e0a32e" stroke="#000" stroke-width="1.4"/>
<circle cx="1772.3" cy="109.5" r="5.6" fill="#d67e2c" stroke="#000" stroke-width="1.4"/>
<circle cx="1602.9" cy="129.0" r="5.6" fill="#576c43" stroke="#000" stroke-width="1.4"/>
<circle cx="1686.0" cy="147.6" r="5.6" fill="#735244" stroke="#000" stroke-width="1.4"/>
<circle cx="1673.5" cy="156.5" r="5.6" fill="#c29682" stroke="#000" stroke-width="1.4"/>
<circle cx="1792.4" cy="163.3" r="5.6" fill="#c15a63" stroke="#000" stroke-width="1.4"/>
<circle cx="1559.5" cy="172.4" r="5.6" fill="#67bdaa" stroke="#000" stroke-width="1.4"/>
<circle cx="1745.4" cy="226.5" r="5.6" fill="#bb5695" stroke="#000" stroke-width="1.4"/>
<circle cx="1545.5" cy="235.2" r="5.6" fill="#0885a1" stroke="#000" stroke-width="1.4"/>
<circle cx="1590.4" cy="233.9" r="5.6" fill="#627a9d" stroke="#000" stroke-width="1.4"/>
<circle cx="1617.5" cy="240.7" r="5.6" fill="#8580b1" stroke="#000" stroke-width="1.4"/>
<circle cx="1875.6" cy="147.2" r="5.6" fill="#af363c" stroke="#000" stroke-width="1.4"/>
<circle cx="1664.4" cy="262.3" r="5.6" fill="#5e3c6c" stroke="#000" stroke-width="1.4"/>
<circle cx="1592.3" cy="304.3" r="5.6" fill="#505ba6" stroke="#000" stroke-width="1.4"/>
<circle cx="1594.1" cy="372.7" r="5.6" fill="#383d96" stroke="#000" stroke-width="1.4"/>
<circle cx="1626.0" cy="183.4" r="5.6" fill="#e8e8e8" stroke="#000" stroke-width="1.4"/>
<circle cx="1624.0" cy="183.4" r="5.6" fill="#c8c8c8" stroke="#000" stroke-width="1.4"/>
<circle cx="1620.8" cy="183.4" r="5.6" fill="#a0a0a0" stroke="#000" stroke-width="1.4"/>
<rect x="1923" y="459.1" width="270.6" height="180.6" fill="#323232"/>
<rect x="1928" y="463.8" width="261" height="171" fill="url(#inV)"/>
<rect x="1928" y="463.8" width="261" height="171" fill="url(#inS)"/>
<rect x="1928" y="463.8" width="261.2" height="171" fill="none" stroke="#969696" stroke-width="1.8"/>
<rect x="2049.1" y="540.1" width="18" height="18" fill="none" stroke="#fff" stroke-width="2"/>
<circle cx="2030.6" cy="541.5" r="5.8" fill="#008296" stroke="#000" stroke-width="1.6"/>
<rect x="1860" y="648.7" width="334.2" height="36.3" fill="#323232"/>
<text x="1860.5" y="677.4" font-size="27" fill="#f4f4f4" textLength="280.0" lengthAdjust="spacingAndGlyphs">RGB Triplet: 0, 133, 163</text>
<rect x="1350" y="39" width="848.2" height="653" fill="none" stroke="#8c8c8c" stroke-width="2"/>
<line x1="1350" y1="693" x2="1350" y2="700" stroke="#dcdcdc" stroke-width="2"/>
<text x="1344.6" y="721.0" font-size="19" fill="#d2d2d2" textLength="10.9" lengthAdjust="spacingAndGlyphs">0</text>
<line x1="1342" y1="692" x2="1349" y2="692" stroke="#dcdcdc" stroke-width="2"/>
<text x="1331.6" y="700.2" font-size="19" fill="#d2d2d2" textLength="10.9" lengthAdjust="spacingAndGlyphs">0</text>
<line x1="1421" y1="693" x2="1421" y2="700" stroke="#dcdcdc" stroke-width="2"/>
<text x="1401.6" y="721.0" font-size="19" fill="#d2d2d2" textLength="38.1" lengthAdjust="spacingAndGlyphs">0.05</text>
<line x1="1342" y1="637.7" x2="1349" y2="637.7" stroke="#dcdcdc" stroke-width="2"/>
<text x="1304.4" y="645.9" font-size="19" fill="#d2d2d2" textLength="38.1" lengthAdjust="spacingAndGlyphs">0.05</text>
<line x1="1491" y1="693" x2="1491" y2="700" stroke="#dcdcdc" stroke-width="2"/>
<text x="1477.6" y="721.0" font-size="19" fill="#d2d2d2" textLength="27.2" lengthAdjust="spacingAndGlyphs">0.1</text>
<line x1="1342" y1="583.3" x2="1349" y2="583.3" stroke="#dcdcdc" stroke-width="2"/>
<text x="1315.3" y="591.5" font-size="19" fill="#d2d2d2" textLength="27.2" lengthAdjust="spacingAndGlyphs">0.1</text>
<line x1="1562" y1="693" x2="1562" y2="700" stroke="#dcdcdc" stroke-width="2"/>
<text x="1542.8" y="721.0" font-size="19" fill="#d2d2d2" textLength="38.1" lengthAdjust="spacingAndGlyphs">0.15</text>
<line x1="1342" y1="529" x2="1349" y2="529" stroke="#dcdcdc" stroke-width="2"/>
<text x="1304.4" y="537.2" font-size="19" fill="#d2d2d2" textLength="38.1" lengthAdjust="spacingAndGlyphs">0.15</text>
<line x1="1632" y1="693" x2="1632" y2="700" stroke="#dcdcdc" stroke-width="2"/>
<text x="1618.9" y="721.0" font-size="19" fill="#d2d2d2" textLength="27.2" lengthAdjust="spacingAndGlyphs">0.2</text>
<line x1="1342" y1="474.7" x2="1349" y2="474.7" stroke="#dcdcdc" stroke-width="2"/>
<text x="1315.3" y="482.9" font-size="19" fill="#d2d2d2" textLength="27.2" lengthAdjust="spacingAndGlyphs">0.2</text>
<line x1="1703" y1="693" x2="1703" y2="700" stroke="#dcdcdc" stroke-width="2"/>
<text x="1684.1" y="721.0" font-size="19" fill="#d2d2d2" textLength="38.1" lengthAdjust="spacingAndGlyphs">0.25</text>
<line x1="1342" y1="420.4" x2="1349" y2="420.4" stroke="#dcdcdc" stroke-width="2"/>
<text x="1304.4" y="428.6" font-size="19" fill="#d2d2d2" textLength="38.1" lengthAdjust="spacingAndGlyphs">0.25</text>
<line x1="1774" y1="693" x2="1774" y2="700" stroke="#dcdcdc" stroke-width="2"/>
<text x="1760.1" y="721.0" font-size="19" fill="#d2d2d2" textLength="27.2" lengthAdjust="spacingAndGlyphs">0.3</text>
<line x1="1342" y1="366" x2="1349" y2="366" stroke="#dcdcdc" stroke-width="2"/>
<text x="1315.3" y="374.2" font-size="19" fill="#d2d2d2" textLength="27.2" lengthAdjust="spacingAndGlyphs">0.3</text>
<line x1="1844" y1="693" x2="1844" y2="700" stroke="#dcdcdc" stroke-width="2"/>
<text x="1825.3" y="721.0" font-size="19" fill="#d2d2d2" textLength="38.1" lengthAdjust="spacingAndGlyphs">0.35</text>
<line x1="1342" y1="311.7" x2="1349" y2="311.7" stroke="#dcdcdc" stroke-width="2"/>
<text x="1304.4" y="319.9" font-size="19" fill="#d2d2d2" textLength="38.1" lengthAdjust="spacingAndGlyphs">0.35</text>
<line x1="1915" y1="693" x2="1915" y2="700" stroke="#dcdcdc" stroke-width="2"/>
<text x="1901.4" y="721.0" font-size="19" fill="#d2d2d2" textLength="27.2" lengthAdjust="spacingAndGlyphs">0.4</text>
<line x1="1342" y1="257.4" x2="1349" y2="257.4" stroke="#dcdcdc" stroke-width="2"/>
<text x="1315.3" y="265.6" font-size="19" fill="#d2d2d2" textLength="27.2" lengthAdjust="spacingAndGlyphs">0.4</text>
<line x1="1986" y1="693" x2="1986" y2="700" stroke="#dcdcdc" stroke-width="2"/>
<text x="1966.5" y="721.0" font-size="19" fill="#d2d2d2" textLength="38.1" lengthAdjust="spacingAndGlyphs">0.45</text>
<line x1="1342" y1="203" x2="1349" y2="203" stroke="#dcdcdc" stroke-width="2"/>
<text x="1304.4" y="211.2" font-size="19" fill="#d2d2d2" textLength="38.1" lengthAdjust="spacingAndGlyphs">0.45</text>
<line x1="2056" y1="693" x2="2056" y2="700" stroke="#dcdcdc" stroke-width="2"/>
<text x="2042.6" y="721.0" font-size="19" fill="#d2d2d2" textLength="27.2" lengthAdjust="spacingAndGlyphs">0.5</text>
<line x1="1342" y1="148.7" x2="1349" y2="148.7" stroke="#dcdcdc" stroke-width="2"/>
<text x="1315.3" y="156.9" font-size="19" fill="#d2d2d2" textLength="27.2" lengthAdjust="spacingAndGlyphs">0.5</text>
<line x1="2127" y1="693" x2="2127" y2="700" stroke="#dcdcdc" stroke-width="2"/>
<text x="2107.8" y="721.0" font-size="19" fill="#d2d2d2" textLength="38.1" lengthAdjust="spacingAndGlyphs">0.55</text>
<line x1="1342" y1="94.37" x2="1349" y2="94.37" stroke="#dcdcdc" stroke-width="2"/>
<text x="1304.4" y="102.6" font-size="19" fill="#d2d2d2" textLength="38.1" lengthAdjust="spacingAndGlyphs">0.55</text>
<rect x="425" y="757" width="1790" height="300.5" fill="#000"/>
<rect x="427" y="759" width="1784" height="33" fill="url(#th)"/>
<g clip-path="url(#tbc)"><text x="673.8" y="782.1" font-size="18.5" fill="#f0f0f0" textLength="63.5" lengthAdjust="spacingAndGlyphs" stroke="#f0f0f0" stroke-width=".3">White</text><text x="788.2" y="782.1" font-size="18.5" fill="#f0f0f0" textLength="81.5" lengthAdjust="spacingAndGlyphs" stroke="#f0f0f0" stroke-width=".3">Gray 80</text><text x="904.9" y="782.1" font-size="18.5" fill="#f0f0f0" textLength="81.5" lengthAdjust="spacingAndGlyphs" stroke="#f0f0f0" stroke-width=".3">Gray 65</text><text x="1021.5" y="782.1" font-size="18.5" fill="#f0f0f0" textLength="82.1" lengthAdjust="spacingAndGlyphs" stroke="#f0f0f0" stroke-width=".3">Gray 50</text><text x="1138.5" y="782.1" font-size="18.5" fill="#f0f0f0" textLength="81.0" lengthAdjust="spacingAndGlyphs" stroke="#f0f0f0" stroke-width=".3">Gray 35</text><text x="1261.7" y="782.1" font-size="18.5" fill="#f0f0f0" textLength="55.5" lengthAdjust="spacingAndGlyphs" stroke="#f0f0f0" stroke-width=".3">Black</text><text x="1349.8" y="782.1" font-size="18.5" fill="#f0f0f0" textLength="98.5" lengthAdjust="spacingAndGlyphs" stroke="#f0f0f0" stroke-width=".3">Dark Skin</text><text x="1465.0" y="782.1" font-size="18.5" fill="#f0f0f0" textLength="100.5" lengthAdjust="spacingAndGlyphs" stroke="#f0f0f0" stroke-width=".3">Light Skin</text><text x="1588.2" y="782.1" font-size="18.5" fill="#f0f0f0" textLength="88.9" lengthAdjust="spacingAndGlyphs" stroke="#f0f0f0" stroke-width=".3">Blue Sky</text><text x="1711.8" y="782.1" font-size="18.5" fill="#f0f0f0" textLength="74.9" lengthAdjust="spacingAndGlyphs" stroke="#f0f0f0" stroke-width=".3">Foliage</text><text x="1813.9" y="782.1" font-size="18.5" fill="#f0f0f0" textLength="125.1" lengthAdjust="spacingAndGlyphs" stroke="#f0f0f0" stroke-width=".3">Blue Flower</text><text x="1951.5" y="782.1" font-size="18.5" fill="#f0f0f0" textLength="134.2" lengthAdjust="spacingAndGlyphs" stroke="#f0f0f0" stroke-width=".3">Bluish Green</text><text x="2111.9" y="782.1" font-size="18.5" fill="#f0f0f0" textLength="77.9" lengthAdjust="spacingAndGlyphs" stroke="#f0f0f0" stroke-width=".3">Orange</text><rect x="427" y="792" width="1784" height="30.9" fill="url(#rd)"/><text x="446.0" y="814.5" font-size="18.5" fill="#f4f4f4" font-weight="bold" textLength="96.0" lengthAdjust="spacingAndGlyphs" stroke="#f4f4f4" stroke-width=".45">x: CIE31</text><text x="646.5" y="814.5" font-size="18.5" fill="#f4f4f4" textLength="76.1" lengthAdjust="spacingAndGlyphs" stroke="#f4f4f4" stroke-width=".3">0.3062</text><text x="777.1" y="814.5" font-size="18.5" fill="#f4f4f4" textLength="76.1" lengthAdjust="spacingAndGlyphs" stroke="#f4f4f4" stroke-width=".3">0.3053</text><text x="894.0" y="814.5" font-size="18.5" fill="#f4f4f4" textLength="76.1" lengthAdjust="spacingAndGlyphs" stroke="#f4f4f4" stroke-width=".3">0.3058</text><text x="1010.7" y="814.5" font-size="18.5" fill="#f4f4f4" textLength="76.1" lengthAdjust="spacingAndGlyphs" stroke="#f4f4f4" stroke-width=".3">0.3050</text><text x="1127.6" y="814.5" font-size="18.5" fill="#f4f4f4" textLength="76.1" lengthAdjust="spacingAndGlyphs" stroke="#f4f4f4" stroke-width=".3">0.3051</text><text x="1244.3" y="814.5" font-size="18.5" fill="#f4f4f4" textLength="76.1" lengthAdjust="spacingAndGlyphs" stroke="#f4f4f4" stroke-width=".3">0.0000</text><text x="1347.2" y="814.5" font-size="18.5" fill="#f4f4f4" textLength="76.1" lengthAdjust="spacingAndGlyphs" stroke="#f4f4f4" stroke-width=".3">0.3939</text><text x="1463.8" y="814.5" font-size="18.5" fill="#f4f4f4" textLength="76.1" lengthAdjust="spacingAndGlyphs" stroke="#f4f4f4" stroke-width=".3">0.3738</text><text x="1580.5" y="814.5" font-size="18.5" fill="#f4f4f4" textLength="76.1" lengthAdjust="spacingAndGlyphs" stroke="#f4f4f4" stroke-width=".3">0.2438</text><text x="1697.5" y="814.5" font-size="18.5" fill="#f4f4f4" textLength="76.1" lengthAdjust="spacingAndGlyphs" stroke="#f4f4f4" stroke-width=".3">0.3342</text><text x="1814.1" y="814.5" font-size="18.5" fill="#f4f4f4" textLength="76.1" lengthAdjust="spacingAndGlyphs" stroke="#f4f4f4" stroke-width=".3">0.2621</text><text x="1951.8" y="814.5" font-size="18.5" fill="#f4f4f4" textLength="76.1" lengthAdjust="spacingAndGlyphs" stroke="#f4f4f4" stroke-width=".3">0.2549</text><text x="2098.5" y="814.5" font-size="18.5" fill="#f4f4f4" textLength="76.1" lengthAdjust="spacingAndGlyphs" stroke="#f4f4f4" stroke-width=".3">0.5139</text><rect x="427" y="822.9" width="1784" height="30.9" fill="url(#rl)"/><text x="446.0" y="845.4" font-size="18.5" fill="#efefef" font-weight="bold" textLength="96.0" lengthAdjust="spacingAndGlyphs" stroke="#efefef" stroke-width=".45">y: CIE31</text><text x="646.5" y="845.4" font-size="18.5" fill="#efefef" textLength="76.1" lengthAdjust="spacingAndGlyphs" stroke="#efefef" stroke-width=".3">0.3262</text><text x="777.1" y="845.4" font-size="18.5" fill="#efefef" textLength="76.1" lengthAdjust="spacingAndGlyphs" stroke="#efefef" stroke-width=".3">0.3258</text><text x="894.0" y="845.4" font-size="18.5" fill="#efefef" textLength="76.1" lengthAdjust="spacingAndGlyphs" stroke="#efefef" stroke-width=".3">0.3257</text><text x="1010.7" y="845.4" font-size="18.5" fill="#efefef" textLength="76.1" lengthAdjust="spacingAndGlyphs" stroke="#efefef" stroke-width=".3">0.3283</text><text x="1127.6" y="845.4" font-size="18.5" fill="#efefef" textLength="76.1" lengthAdjust="spacingAndGlyphs" stroke="#efefef" stroke-width=".3">0.3285</text><text x="1243.7" y="845.4" font-size="18.5" fill="#efefef" textLength="76.1" lengthAdjust="spacingAndGlyphs" stroke="#efefef" stroke-width=".3">1.0000</text><text x="1347.2" y="845.4" font-size="18.5" fill="#efefef" textLength="76.1" lengthAdjust="spacingAndGlyphs" stroke="#efefef" stroke-width=".3">0.3663</text><text x="1463.8" y="845.4" font-size="18.5" fill="#efefef" textLength="76.1" lengthAdjust="spacingAndGlyphs" stroke="#efefef" stroke-width=".3">0.3567</text><text x="1580.5" y="845.4" font-size="18.5" fill="#efefef" textLength="76.1" lengthAdjust="spacingAndGlyphs" stroke="#efefef" stroke-width=".3">0.2669</text><text x="1697.5" y="845.4" font-size="18.5" fill="#efefef" textLength="76.1" lengthAdjust="spacingAndGlyphs" stroke="#efefef" stroke-width=".3">0.4276</text><text x="1814.1" y="845.4" font-size="18.5" fill="#efefef" textLength="76.1" lengthAdjust="spacingAndGlyphs" stroke="#efefef" stroke-width=".3">0.2542</text><text x="1951.8" y="845.4" font-size="18.5" fill="#efefef" textLength="76.1" lengthAdjust="spacingAndGlyphs" stroke="#efefef" stroke-width=".3">0.3625</text><text x="2098.5" y="845.4" font-size="18.5" fill="#efefef" textLength="76.1" lengthAdjust="spacingAndGlyphs" stroke="#efefef" stroke-width=".3">0.4068</text><rect x="427" y="853.7" width="1784" height="30.9" fill="url(#rd)"/><text x="446.0" y="876.2" font-size="18.5" fill="#f4f4f4" font-weight="bold" textLength="16.0" lengthAdjust="spacingAndGlyphs" stroke="#f4f4f4" stroke-width=".45">Y</text><text x="645.9" y="876.2" font-size="18.5" fill="#f4f4f4" textLength="117.6" lengthAdjust="spacingAndGlyphs" stroke="#f4f4f4" stroke-width=".3">1243.9787</text><text x="777.1" y="876.2" font-size="18.5" fill="#f4f4f4" textLength="103.8" lengthAdjust="spacingAndGlyphs" stroke="#f4f4f4" stroke-width=".3">972.1562</text><text x="894.0" y="876.2" font-size="18.5" fill="#f4f4f4" textLength="103.8" lengthAdjust="spacingAndGlyphs" stroke="#f4f4f4" stroke-width=".3">781.6377</text><text x="1010.7" y="876.2" font-size="18.5" fill="#f4f4f4" textLength="103.8" lengthAdjust="spacingAndGlyphs" stroke="#f4f4f4" stroke-width=".3">605.6315</text><text x="1127.6" y="876.2" font-size="18.5" fill="#f4f4f4" textLength="103.8" lengthAdjust="spacingAndGlyphs" stroke="#f4f4f4" stroke-width=".3">422.1838</text><text x="1244.3" y="876.2" font-size="18.5" fill="#f4f4f4" textLength="76.1" lengthAdjust="spacingAndGlyphs" stroke="#f4f4f4" stroke-width=".3">0.0045</text><text x="1346.6" y="876.2" font-size="18.5" fill="#f4f4f4" textLength="103.8" lengthAdjust="spacingAndGlyphs" stroke="#f4f4f4" stroke-width=".3">123.7180</text><text x="1463.8" y="876.2" font-size="18.5" fill="#f4f4f4" textLength="103.8" lengthAdjust="spacingAndGlyphs" stroke="#f4f4f4" stroke-width=".3">425.7528</text><text x="1580.5" y="876.2" font-size="18.5" fill="#f4f4f4" textLength="103.8" lengthAdjust="spacingAndGlyphs" stroke="#f4f4f4" stroke-width=".3">230.7099</text><text x="1696.9" y="876.2" font-size="18.5" fill="#f4f4f4" textLength="103.8" lengthAdjust="spacingAndGlyphs" stroke="#f4f4f4" stroke-width=".3">157.4987</text><text x="1814.1" y="876.2" font-size="18.5" fill="#f4f4f4" textLength="103.8" lengthAdjust="spacingAndGlyphs" stroke="#f4f4f4" stroke-width=".3">287.7541</text><text x="1951.8" y="876.2" font-size="18.5" fill="#f4f4f4" textLength="103.8" lengthAdjust="spacingAndGlyphs" stroke="#f4f4f4" stroke-width=".3">520.0332</text><text x="2098.5" y="876.2" font-size="18.5" fill="#f4f4f4" textLength="103.8" lengthAdjust="spacingAndGlyphs" stroke="#f4f4f4" stroke-width=".3">340.5036</text><rect x="427" y="884.5" width="1784" height="30.9" fill="url(#rl)"/><text x="446.0" y="907.0" font-size="18.5" fill="#efefef" font-weight="bold" textLength="173.1" lengthAdjust="spacingAndGlyphs" stroke="#efefef" stroke-width=".45">Target x:CIE31</text><text x="646.5" y="907.0" font-size="18.5" fill="#efefef" textLength="76.1" lengthAdjust="spacingAndGlyphs" stroke="#efefef" stroke-width=".3">0.3127</text><text x="777.1" y="907.0" font-size="18.5" fill="#efefef" textLength="76.1" lengthAdjust="spacingAndGlyphs" stroke="#efefef" stroke-width=".3">0.3127</text><text x="894.0" y="907.0" font-size="18.5" fill="#efefef" textLength="76.1" lengthAdjust="spacingAndGlyphs" stroke="#efefef" stroke-width=".3">0.3127</text><text x="1010.7" y="907.0" font-size="18.5" fill="#efefef" textLength="76.1" lengthAdjust="spacingAndGlyphs" stroke="#efefef" stroke-width=".3">0.3127</text><text x="1127.6" y="907.0" font-size="18.5" fill="#efefef" textLength="76.1" lengthAdjust="spacingAndGlyphs" stroke="#efefef" stroke-width=".3">0.3127</text><text x="1244.3" y="907.0" font-size="18.5" fill="#efefef" textLength="76.1" lengthAdjust="spacingAndGlyphs" stroke="#efefef" stroke-width=".3">0.3127</text><text x="1347.2" y="907.0" font-size="18.5" fill="#efefef" textLength="76.1" lengthAdjust="spacingAndGlyphs" stroke="#efefef" stroke-width=".3">0.4003</text><text x="1463.8" y="907.0" font-size="18.5" fill="#efefef" textLength="76.1" lengthAdjust="spacingAndGlyphs" stroke="#efefef" stroke-width=".3">0.3795</text><text x="1580.5" y="907.0" font-size="18.5" fill="#efefef" textLength="76.1" lengthAdjust="spacingAndGlyphs" stroke="#efefef" stroke-width=".3">0.2496</text><text x="1697.5" y="907.0" font-size="18.5" fill="#efefef" textLength="76.1" lengthAdjust="spacingAndGlyphs" stroke="#efefef" stroke-width=".3">0.3395</text><text x="1814.1" y="907.0" font-size="18.5" fill="#efefef" textLength="76.1" lengthAdjust="spacingAndGlyphs" stroke="#efefef" stroke-width=".3">0.2681</text><text x="1951.8" y="907.0" font-size="18.5" fill="#efefef" textLength="76.1" lengthAdjust="spacingAndGlyphs" stroke="#efefef" stroke-width=".3">0.2626</text><text x="2098.5" y="907.0" font-size="18.5" fill="#efefef" textLength="76.1" lengthAdjust="spacingAndGlyphs" stroke="#efefef" stroke-width=".3">0.5122</text><rect x="427" y="915.4" width="1784" height="30.9" fill="url(#rd)"/><text x="446.0" y="937.9" font-size="18.5" fill="#f4f4f4" font-weight="bold" textLength="173.1" lengthAdjust="spacingAndGlyphs" stroke="#f4f4f4" stroke-width=".45">Target y:CIE31</text><text x="646.5" y="937.9" font-size="18.5" fill="#f4f4f4" textLength="76.1" lengthAdjust="spacingAndGlyphs" stroke="#f4f4f4" stroke-width=".3">0.3290</text><text x="777.1" y="937.9" font-size="18.5" fill="#f4f4f4" textLength="76.1" lengthAdjust="spacingAndGlyphs" stroke="#f4f4f4" stroke-width=".3">0.3290</text><text x="894.0" y="937.9" font-size="18.5" fill="#f4f4f4" textLength="76.1" lengthAdjust="spacingAndGlyphs" stroke="#f4f4f4" stroke-width=".3">0.3290</text><text x="1010.7" y="937.9" font-size="18.5" fill="#f4f4f4" textLength="76.1" lengthAdjust="spacingAndGlyphs" stroke="#f4f4f4" stroke-width=".3">0.3290</text><text x="1127.6" y="937.9" font-size="18.5" fill="#f4f4f4" textLength="76.1" lengthAdjust="spacingAndGlyphs" stroke="#f4f4f4" stroke-width=".3">0.3290</text><text x="1244.3" y="937.9" font-size="18.5" fill="#f4f4f4" textLength="76.1" lengthAdjust="spacingAndGlyphs" stroke="#f4f4f4" stroke-width=".3">0.3290</text><text x="1347.2" y="937.9" font-size="18.5" fill="#f4f4f4" textLength="76.1" lengthAdjust="spacingAndGlyphs" stroke="#f4f4f4" stroke-width=".3">0.3642</text><text x="1463.8" y="937.9" font-size="18.5" fill="#f4f4f4" textLength="76.1" lengthAdjust="spacingAndGlyphs" stroke="#f4f4f4" stroke-width=".3">0.3562</text><text x="1580.5" y="937.9" font-size="18.5" fill="#f4f4f4" textLength="76.1" lengthAdjust="spacingAndGlyphs" stroke="#f4f4f4" stroke-width=".3">0.2656</text><text x="1697.5" y="937.9" font-size="18.5" fill="#f4f4f4" textLength="76.1" lengthAdjust="spacingAndGlyphs" stroke="#f4f4f4" stroke-width=".3">0.4271</text><text x="1814.1" y="937.9" font-size="18.5" fill="#f4f4f4" textLength="76.1" lengthAdjust="spacingAndGlyphs" stroke="#f4f4f4" stroke-width=".3">0.2525</text><text x="1951.8" y="937.9" font-size="18.5" fill="#f4f4f4" textLength="76.1" lengthAdjust="spacingAndGlyphs" stroke="#f4f4f4" stroke-width=".3">0.3616</text><text x="2098.5" y="937.9" font-size="18.5" fill="#f4f4f4" textLength="76.1" lengthAdjust="spacingAndGlyphs" stroke="#f4f4f4" stroke-width=".3">0.4063</text><rect x="427" y="946.2" width="1784" height="30.9" fill="url(#rl)"/><text x="446.0" y="968.8" font-size="18.5" fill="#efefef" font-weight="bold" textLength="101.0" lengthAdjust="spacingAndGlyphs" stroke="#efefef" stroke-width=".45">Target Y</text><text x="645.9" y="968.8" font-size="18.5" fill="#efefef" textLength="117.6" lengthAdjust="spacingAndGlyphs" stroke="#efefef" stroke-width=".3">1243.9787</text><text x="777.1" y="968.8" font-size="18.5" fill="#efefef" textLength="103.8" lengthAdjust="spacingAndGlyphs" stroke="#efefef" stroke-width=".3">984.3578</text><text x="894.0" y="968.8" font-size="18.5" fill="#efefef" textLength="103.8" lengthAdjust="spacingAndGlyphs" stroke="#efefef" stroke-width=".3">793.1569</text><text x="1010.7" y="968.8" font-size="18.5" fill="#efefef" textLength="103.8" lengthAdjust="spacingAndGlyphs" stroke="#efefef" stroke-width=".3">610.8195</text><text x="1127.6" y="968.8" font-size="18.5" fill="#efefef" textLength="103.8" lengthAdjust="spacingAndGlyphs" stroke="#efefef" stroke-width=".3">425.3343</text><text x="1244.3" y="968.8" font-size="18.5" fill="#efefef" textLength="76.1" lengthAdjust="spacingAndGlyphs" stroke="#efefef" stroke-width=".3">0.0000</text><text x="1346.6" y="968.8" font-size="18.5" fill="#efefef" textLength="103.8" lengthAdjust="spacingAndGlyphs" stroke="#efefef" stroke-width=".3">125.3097</text><text x="1463.8" y="968.8" font-size="18.5" fill="#efefef" textLength="103.8" lengthAdjust="spacingAndGlyphs" stroke="#efefef" stroke-width=".3">434.0884</text><text x="1580.5" y="968.8" font-size="18.5" fill="#efefef" textLength="103.8" lengthAdjust="spacingAndGlyphs" stroke="#efefef" stroke-width=".3">232.6040</text><text x="1696.9" y="968.8" font-size="18.5" fill="#efefef" textLength="103.8" lengthAdjust="spacingAndGlyphs" stroke="#efefef" stroke-width=".3">162.1210</text><text x="1814.1" y="968.8" font-size="18.5" fill="#efefef" textLength="103.8" lengthAdjust="spacingAndGlyphs" stroke="#efefef" stroke-width=".3">290.0770</text><text x="1951.8" y="968.8" font-size="18.5" fill="#efefef" textLength="103.8" lengthAdjust="spacingAndGlyphs" stroke="#efefef" stroke-width=".3">520.8914</text><text x="2098.5" y="968.8" font-size="18.5" fill="#efefef" textLength="103.8" lengthAdjust="spacingAndGlyphs" stroke="#efefef" stroke-width=".3">352.6408</text><rect x="427" y="977.1" width="1784" height="30.9" fill="url(#rd)"/><text x="446.0" y="999.6" font-size="18.5" fill="#f4f4f4" font-weight="bold" textLength="100.0" lengthAdjust="spacingAndGlyphs" stroke="#f4f4f4" stroke-width=".45">ΔE 2000</text><text x="646.5" y="999.6" font-size="18.5" fill="#f4f4f4" textLength="76.1" lengthAdjust="spacingAndGlyphs" stroke="#f4f4f4" stroke-width=".3">3.5699</text><text x="777.1" y="999.6" font-size="18.5" fill="#f4f4f4" textLength="76.1" lengthAdjust="spacingAndGlyphs" stroke="#f4f4f4" stroke-width=".3">3.7346</text><text x="894.0" y="999.6" font-size="18.5" fill="#f4f4f4" textLength="76.1" lengthAdjust="spacingAndGlyphs" stroke="#f4f4f4" stroke-width=".3">3.1998</text><text x="1010.7" y="999.6" font-size="18.5" fill="#f4f4f4" textLength="76.1" lengthAdjust="spacingAndGlyphs" stroke="#f4f4f4" stroke-width=".3">4.2484</text><text x="1127.6" y="999.6" font-size="18.5" fill="#f4f4f4" textLength="76.1" lengthAdjust="spacingAndGlyphs" stroke="#f4f4f4" stroke-width=".3">3.7865</text><text x="1244.3" y="999.6" font-size="18.5" fill="#f4f4f4" textLength="76.1" lengthAdjust="spacingAndGlyphs" stroke="#f4f4f4" stroke-width=".3">0.0220</text><text x="1346.6" y="999.6" font-size="18.5" fill="#f4f4f4" textLength="76.1" lengthAdjust="spacingAndGlyphs" stroke="#f4f4f4" stroke-width=".3">1.6097</text><text x="1463.2" y="999.6" font-size="18.5" fill="#f4f4f4" textLength="76.1" lengthAdjust="spacingAndGlyphs" stroke="#f4f4f4" stroke-width=".3">1.6789</text><text x="1580.5" y="999.6" font-size="18.5" fill="#f4f4f4" textLength="76.1" lengthAdjust="spacingAndGlyphs" stroke="#f4f4f4" stroke-width=".3">2.6154</text><text x="1696.9" y="999.6" font-size="18.5" fill="#f4f4f4" textLength="76.1" lengthAdjust="spacingAndGlyphs" stroke="#f4f4f4" stroke-width=".3">1.1226</text><text x="1814.1" y="999.6" font-size="18.5" fill="#f4f4f4" textLength="76.1" lengthAdjust="spacingAndGlyphs" stroke="#f4f4f4" stroke-width=".3">2.5448</text><text x="1951.2" y="999.6" font-size="18.5" fill="#f4f4f4" textLength="76.1" lengthAdjust="spacingAndGlyphs" stroke="#f4f4f4" stroke-width=".3">1.5766</text><text x="2098.5" y="999.6" font-size="18.5" fill="#f4f4f4" textLength="76.1" lengthAdjust="spacingAndGlyphs" stroke="#f4f4f4" stroke-width=".3">0.7852</text><rect x="427" y="1008" width="1784" height="30.9" fill="url(#rl)"/><text x="446.0" y="1030.5" font-size="18.5" fill="#efefef" font-weight="bold" textLength="80.1" lengthAdjust="spacingAndGlyphs" stroke="#efefef" stroke-width=".45">ΔE ITP</text><text x="646.5" y="1030.5" font-size="18.5" fill="#efefef" textLength="74.3" lengthAdjust="spacingAndGlyphs" stroke="#efefef" stroke-width=".3">4.1138</text><text x="777.1" y="1030.5" font-size="18.5" fill="#efefef" textLength="76.1" lengthAdjust="spacingAndGlyphs" stroke="#efefef" stroke-width=".3">4.7933</text><text x="894.0" y="1030.5" font-size="18.5" fill="#efefef" textLength="76.1" lengthAdjust="spacingAndGlyphs" stroke="#efefef" stroke-width=".3">4.4767</text><text x="1010.7" y="1030.5" font-size="18.5" fill="#efefef" textLength="76.1" lengthAdjust="spacingAndGlyphs" stroke="#efefef" stroke-width=".3">5.3722</text><text x="1127.6" y="1030.5" font-size="18.5" fill="#efefef" textLength="76.1" lengthAdjust="spacingAndGlyphs" stroke="#efefef" stroke-width=".3">5.2283</text><text x="1243.7" y="1030.5" font-size="18.5" fill="#efefef" textLength="89.9" lengthAdjust="spacingAndGlyphs" stroke="#efefef" stroke-width=".3">15.9964</text><text x="1347.2" y="1030.5" font-size="18.5" fill="#efefef" textLength="76.1" lengthAdjust="spacingAndGlyphs" stroke="#efefef" stroke-width=".3">4.6361</text><text x="1463.8" y="1030.5" font-size="18.5" fill="#efefef" textLength="76.1" lengthAdjust="spacingAndGlyphs" stroke="#efefef" stroke-width=".3">4.2182</text><text x="1580.5" y="1030.5" font-size="18.5" fill="#efefef" textLength="76.1" lengthAdjust="spacingAndGlyphs" stroke="#efefef" stroke-width=".3">5.2638</text><text x="1697.5" y="1030.5" font-size="18.5" fill="#efefef" textLength="76.1" lengthAdjust="spacingAndGlyphs" stroke="#efefef" stroke-width=".3">3.7227</text><text x="1814.1" y="1030.5" font-size="18.5" fill="#efefef" textLength="76.1" lengthAdjust="spacingAndGlyphs" stroke="#efefef" stroke-width=".3">5.8900</text><text x="1951.8" y="1030.5" font-size="18.5" fill="#efefef" textLength="76.1" lengthAdjust="spacingAndGlyphs" stroke="#efefef" stroke-width=".3">5.2637</text><text x="2098.5" y="1030.5" font-size="18.5" fill="#efefef" textLength="76.1" lengthAdjust="spacingAndGlyphs" stroke="#efefef" stroke-width=".3">2.9294</text></g>
<rect x="427" y="1039" width="1784" height="18.5" fill="#606060"/>
<rect x="455" y="1041" width="959" height="14.5" fill="#404040" rx="7"/>
<rect x="429" y="1041" width="21" height="15.5" fill="#727272" rx="4" stroke="#8a8a8a" stroke-width="1"/>
<path d="M444 1042.3v12l-9-6z" fill="#383838"/>
<rect x="2188" y="1041" width="21" height="15.5" fill="#727272" rx="4" stroke="#8a8a8a" stroke-width="1"/>
<path d="M2193.5 1042.3v12l9-6z" fill="#383838"/>
<rect x="0" y="1283" width="2211" height="2" fill="#4a2c2c"/>
<path d="M0.2 1283V1227a5 5 0 0 1 5-5h66.5a5 5 0 0 1 5 5V1283z" fill="url(#bt)"/>
<rect x="5.2" y="1227" width="67.4" height="36.3" fill="#ffffff" rx="3.5" stroke="#000" stroke-opacity=".22" stroke-width="1"/>
<text x="23.4" y="1277.5" font-size="10.5" fill="#262626" font-weight="bold" textLength="30.4" lengthAdjust="spacingAndGlyphs">White</text>
<path d="M78.9 1283V1227a5 5 0 0 1 5-5h66.5a5 5 0 0 1 5 5V1283z" fill="url(#bt)"/>
<rect x="83.9" y="1227" width="67.4" height="36.3" fill="#e6e6e6" rx="3.5" stroke="#000" stroke-opacity=".22" stroke-width="1"/>
<text x="98.1" y="1277.5" font-size="10.5" fill="#262626" font-weight="bold">Gray 80</text>
<path d="M157.6 1283V1227a5 5 0 0 1 5-5h66.5a5 5 0 0 1 5 5V1283z" fill="url(#bt)"/>
<rect x="162.6" y="1227" width="67.4" height="36.3" fill="#d1d1d1" rx="3.5" stroke="#000" stroke-opacity=".22" stroke-width="1"/>
<text x="176.8" y="1277.5" font-size="10.5" fill="#262626" font-weight="bold">Gray 65</text>
<path d="M236.3 1283V1227a5 5 0 0 1 5-5h66.5a5 5 0 0 1 5 5V1283z" fill="url(#bt)"/>
<rect x="241.3" y="1227" width="67.4" height="36.3" fill="#bababa" rx="3.5" stroke="#000" stroke-opacity=".22" stroke-width="1"/>
<text x="255.4" y="1277.5" font-size="10.5" fill="#262626" font-weight="bold">Gray 50</text>
<path d="M315.0 1283V1227a5 5 0 0 1 5-5h66.5a5 5 0 0 1 5 5V1283z" fill="url(#bt)"/>
<rect x="320" y="1227" width="67.4" height="36.3" fill="#9e9e9e" rx="3.5" stroke="#000" stroke-opacity=".22" stroke-width="1"/>
<text x="334.1" y="1277.5" font-size="10.5" fill="#262626" font-weight="bold">Gray 35</text>
<path d="M393.7 1283V1227a5 5 0 0 1 5-5h66.5a5 5 0 0 1 5 5V1283z" fill="url(#bt)"/>
<rect x="398.7" y="1227" width="67.4" height="36.3" fill="#000000" rx="3.5" stroke="#000" stroke-opacity=".22" stroke-width="1"/>
<text x="418.6" y="1277.5" font-size="10.5" fill="#262626" font-weight="bold" textLength="26.9" lengthAdjust="spacingAndGlyphs">Black</text>
<path d="M472.4 1283V1227a5 5 0 0 1 5-5h66.5a5 5 0 0 1 5 5V1283z" fill="url(#bt)"/>
<rect x="477.4" y="1227" width="67.4" height="36.3" fill="#735244" rx="3.5" stroke="#000" stroke-opacity=".22" stroke-width="1"/>
<text x="487.3" y="1277.5" font-size="10.5" fill="#262626" font-weight="bold" textLength="47.0" lengthAdjust="spacingAndGlyphs">Dark Skin</text>
<path d="M551.1 1283V1227a5 5 0 0 1 5-5h66.5a5 5 0 0 1 5 5V1283z" fill="url(#bt)"/>
<rect x="556.1" y="1227" width="67.4" height="36.3" fill="#c29682" rx="3.5" stroke="#000" stroke-opacity=".22" stroke-width="1"/>
<text x="565.5" y="1277.5" font-size="10.5" fill="#262626" font-weight="bold" textLength="48.0" lengthAdjust="spacingAndGlyphs">Light Skin</text>
<path d="M629.8 1283V1227a5 5 0 0 1 5-5h66.5a5 5 0 0 1 5 5V1283z" fill="url(#bt)"/>
<rect x="634.8" y="1227" width="67.4" height="36.3" fill="#627a9d" rx="3.5" stroke="#000" stroke-opacity=".22" stroke-width="1"/>
<text x="647.5" y="1277.5" font-size="10.5" fill="#262626" font-weight="bold" textLength="41.5" lengthAdjust="spacingAndGlyphs">Blue Sky</text>
<path d="M708.5 1283V1227a5 5 0 0 1 5-5h66.5a5 5 0 0 1 5 5V1283z" fill="url(#bt)"/>
<rect x="713.5" y="1227" width="67.4" height="36.3" fill="#576c43" rx="3.5" stroke="#000" stroke-opacity=".22" stroke-width="1"/>
<text x="728.9" y="1277.5" font-size="10.5" fill="#262626" font-weight="bold" textLength="36.0" lengthAdjust="spacingAndGlyphs">Foliage</text>
<path d="M787.2 1283V1227a5 5 0 0 1 5-5h66.5a5 5 0 0 1 5 5V1283z" fill="url(#bt)"/>
<rect x="792.2" y="1227" width="67.4" height="36.3" fill="#8580b1" rx="3.5" stroke="#000" stroke-opacity=".22" stroke-width="1"/>
<text x="796.1" y="1277.5" font-size="10.5" fill="#262626" font-weight="bold" textLength="59.1" lengthAdjust="spacingAndGlyphs">Blue Flower</text>
<path d="M865.9 1283V1227a5 5 0 0 1 5-5h66.5a5 5 0 0 1 5 5V1283z" fill="url(#bt)"/>
<rect x="870.9" y="1227" width="67.4" height="36.3" fill="#67bdaa" rx="3.5" stroke="#000" stroke-opacity=".22" stroke-width="1"/>
<text x="872.5" y="1277.5" font-size="10.5" fill="#262626" font-weight="bold" textLength="63.6" lengthAdjust="spacingAndGlyphs">Bluish Green</text>
<path d="M944.6 1283V1227a5 5 0 0 1 5-5h66.5a5 5 0 0 1 5 5V1283z" fill="url(#bt)"/>
<rect x="949.6" y="1227" width="67.4" height="36.3" fill="#d67e2c" rx="3.5" stroke="#000" stroke-opacity=".22" stroke-width="1"/>
<text x="965.0" y="1277.5" font-size="10.5" fill="#262626" font-weight="bold" textLength="36.0" lengthAdjust="spacingAndGlyphs">Orange</text>
<path d="M1023.3 1283V1227a5 5 0 0 1 5-5h66.5a5 5 0 0 1 5 5V1283z" fill="url(#bt)"/>
<rect x="1028" y="1227" width="67.4" height="36.3" fill="#505ba6" rx="3.5" stroke="#000" stroke-opacity=".22" stroke-width="1"/>
<text x="1028.9" y="1277.5" font-size="10.5" fill="#262626" font-weight="bold" textLength="65.6" lengthAdjust="spacingAndGlyphs">Purplish Blue</text>
<path d="M1102.0 1283V1227a5 5 0 0 1 5-5h66.5a5 5 0 0 1 5 5V1283z" fill="url(#bt)"/>
<rect x="1107" y="1227" width="67.4" height="36.3" fill="#c15a63" rx="3.5" stroke="#000" stroke-opacity=".22" stroke-width="1"/>
<text x="1104.8" y="1277.5" font-size="10.5" fill="#262626" font-weight="bold" textLength="71.2" lengthAdjust="spacingAndGlyphs">Moderate Red</text>
<path d="M1180.7 1283V1227a5 5 0 0 1 5-5h66.5a5 5 0 0 1 5 5V1283z" fill="url(#bt)"/>
<rect x="1186" y="1227" width="67.4" height="36.3" fill="#5e3c6c" rx="3.5" stroke="#000" stroke-opacity=".22" stroke-width="1"/>
<text x="1202.9" y="1277.5" font-size="10.5" fill="#262626" font-weight="bold">Purple</text>
<path d="M1259.4 1283V1227a5 5 0 0 1 5-5h66.5a5 5 0 0 1 5 5V1283z" fill="url(#bt)"/>
<rect x="1264" y="1227" width="67.4" height="36.3" fill="#9dbc40" rx="3.5" stroke="#000" stroke-opacity=".22" stroke-width="1"/>
<text x="1265.0" y="1277.5" font-size="10.5" fill="#262626" font-weight="bold" textLength="65.6" lengthAdjust="spacingAndGlyphs">Yellow Green</text>
<path d="M1338.1 1283V1227a5 5 0 0 1 5-5h66.5a5 5 0 0 1 5 5V1283z" fill="url(#bt)"/>
<rect x="1343" y="1227" width="67.4" height="36.3" fill="#e0a32e" rx="3.5" stroke="#000" stroke-opacity=".22" stroke-width="1"/>
<text x="1340.7" y="1277.5" font-size="10.5" fill="#262626" font-weight="bold" textLength="71.7" lengthAdjust="spacingAndGlyphs">Orange Yellow</text>
<path d="M1416.8 1283V1227a5 5 0 0 1 5-5h66.5a5 5 0 0 1 5 5V1283z" fill="url(#bt)"/>
<rect x="1422" y="1227" width="67.4" height="36.3" fill="#383d96" rx="3.5" stroke="#000" stroke-opacity=".22" stroke-width="1"/>
<text x="1444.0" y="1277.5" font-size="10.5" fill="#262626" font-weight="bold" textLength="22.4" lengthAdjust="spacingAndGlyphs">Blue</text>
<path d="M1495.5 1283V1227a5 5 0 0 1 5-5h66.5a5 5 0 0 1 5 5V1283z" fill="url(#bt)"/>
<rect x="1500" y="1227" width="67.4" height="36.3" fill="#469449" rx="3.5" stroke="#000" stroke-opacity=".22" stroke-width="1"/>
<text x="1519.2" y="1277.5" font-size="10.5" fill="#262626" font-weight="bold" textLength="29.4" lengthAdjust="spacingAndGlyphs">Green</text>
<path d="M1574.2 1283V1227a5 5 0 0 1 5-5h66.5a5 5 0 0 1 5 5V1283z" fill="url(#bt)"/>
<rect x="1579" y="1227" width="67.4" height="36.3" fill="#af363c" rx="3.5" stroke="#000" stroke-opacity=".22" stroke-width="1"/>
<text x="1603.7" y="1277.5" font-size="10.5" fill="#262626" font-weight="bold" textLength="17.9" lengthAdjust="spacingAndGlyphs">Red</text>
<path d="M1652.9 1283V1227a5 5 0 0 1 5-5h66.5a5 5 0 0 1 5 5V1283z" fill="url(#bt)"/>
<rect x="1658" y="1227" width="67.4" height="36.3" fill="#e7c71f" rx="3.5" stroke="#000" stroke-opacity=".22" stroke-width="1"/>
<text x="1675.1" y="1277.5" font-size="10.5" fill="#262626" font-weight="bold">Yellow</text>
<path d="M1731.6 1283V1227a5 5 0 0 1 5-5h66.5a5 5 0 0 1 5 5V1283z" fill="url(#bt)"/>
<rect x="1737" y="1227" width="67.4" height="36.3" fill="#bb5695" rx="3.5" stroke="#000" stroke-opacity=".22" stroke-width="1"/>
<text x="1748.5" y="1277.5" font-size="10.5" fill="#262626" font-weight="bold" textLength="43.0" lengthAdjust="spacingAndGlyphs">Magenta</text>
<path d="M1810.3 1283V1227a5 5 0 0 1 5-5h66.5a5 5 0 0 1 5 5V1283z" fill="#262626"/>
<rect x="1815" y="1227" width="67.4" height="36.3" fill="#008eac" rx="3.5" stroke="#000" stroke-opacity=".22" stroke-width="1"/>
<text x="1836.6" y="1277.5" font-size="10.5" fill="#fff" font-weight="bold" textLength="24.3" lengthAdjust="spacingAndGlyphs">Cyan</text>
<path d="M1890 1283V1227a5 5 0 0 1 5-5h37.3a5 5 0 0 1 5 5V1283z" fill="url(#bt)"/>
<rect x="1899" y="1248" width="28.5" height="27.7" fill="#9c9c9c" rx="4" stroke="#222" stroke-width="2.3"/>
<rect x="1907" y="1255" width="13.3" height="13.3" fill="#000"/>
<path d="M1939.9 1251.5V1226a4 4 0 0 1 4-4h36.5a4 4 0 0 1 4 4v25.5z" fill="url(#sm)"/>
<circle cx="1962.2" cy="1237" r="9" fill="#7e7e7e"/>
<path d="M1985.6 1251.5V1226a4 4 0 0 1 4-4h36.3a4 4 0 0 1 4 4v25.5z" fill="url(#sm)"/>
<circle cx="2007.8" cy="1237" r="9" fill="#7e7e7e"/>
<path d="M2031.1 1251.5V1226a4 4 0 0 1 4-4h35.3a4 4 0 0 1 4 4v25.5z" fill="url(#sm)"/>
<circle cx="2052.8" cy="1237" r="9" fill="#7e7e7e"/>
<path d="M2075.6 1251.5V1226a4 4 0 0 1 4-4h35.5a4 4 0 0 1 4 4v25.5z" fill="url(#sm)"/>
<circle cx="2097.3" cy="1237" r="9" fill="#7e7e7e"/>
<path d="M2120.3 1251.5V1226a4 4 0 0 1 4-4h36.3a4 4 0 0 1 4 4v25.5z" fill="#2a2a2a"/>
<circle cx="2142.4" cy="1237" r="9" fill="#3c3c3c"/>
<path d="M2165.8 1251.5V1226a4 4 0 0 1 4-4h37.1a4 4 0 0 1 4 4v25.5z" fill="url(#sm)"/>
<circle cx="2188.3" cy="1237" r="9" fill="#7e7e7e"/>
<rect x="1940" y="1253" width="135.5" height="30" fill="url(#nv)" rx="4"/>
<rect x="2076" y="1253" width="136" height="30" fill="url(#nv)" rx="4"/>
<circle cx="1970.0" cy="1267.7" r="9.6" fill="#8c8c8c" stroke="#a8a8a8" stroke-width="1"/>
<text x="1964.7" y="1273.5" font-size="19" fill="#2e2e2e">«</text>
<circle cx="2183.0" cy="1267.7" r="9.6" fill="#8c8c8c" stroke="#a8a8a8" stroke-width="1"/>
<text x="2177.7" y="1273.5" font-size="19" fill="#2e2e2e">»</text>
<text x="1997.0" y="1276.0" font-size="22.5" fill="#2c2c2c" textLength="51.0" lengthAdjust="spacingAndGlyphs">Back</text>
<text x="2103.5" y="1276.0" font-size="22.5" fill="#2c2c2c" textLength="52.0" lengthAdjust="spacingAndGlyphs">Next</text>
<g><path d="M1827.7 1204.8L1875.8 1214.4L1878.0 1241.7M1827.7 1204.8L1829.6 1251.3L1859.5 1267.6L1913.5 1251.3L1883.9 1245.1M1878.0 1241.7L1838.8 1246.9" fill="none" stroke="#e8e8e8" stroke-opacity=".42" stroke-width="8.2" stroke-linejoin="round" stroke-linecap="round"/><path d="M1827.7 1204.8L1875.8 1214.4L1878.0 1241.7M1827.7 1204.8L1829.6 1251.3L1859.5 1267.6L1913.5 1251.3L1883.9 1245.1" fill="none" stroke="#a5191e" stroke-opacity=".6" stroke-width="5.4" stroke-linejoin="round" stroke-linecap="round"/><path d="M1878.0 1241.7L1838.8 1246.9" fill="none" stroke="#5a4a58" stroke-opacity=".75" stroke-width="3.6" stroke-linecap="round"/><path d="M1840.3 1220.3L1848.4 1216.6L1858.0 1227.0L1883.2 1201.1L1884.6 1203.3L1861.7 1235.8L1855.1 1240.3L1844.7 1222.5Z" fill="#2c2c2c" fill-opacity=".8" stroke="#e8e8e8" stroke-opacity=".5" stroke-width="1.7" stroke-linejoin="round"/><text x="1883.6" y="1241" font-size="37.6" font-weight="bold" letter-spacing="-1.6" textLength="200" lengthAdjust="spacingAndGlyphs" fill="#a5191e" fill-opacity=".6" stroke="#e0e0e0" stroke-opacity=".42" stroke-width="3.2" paint-order="stroke">NOTEBOOK</text><text x="2083" y="1241" font-size="37.6" font-weight="bold" letter-spacing="-1.6" textLength="117.5" lengthAdjust="spacingAndGlyphs" fill="#262626" fill-opacity=".62" stroke="#e8e8e8" stroke-opacity=".5" stroke-width="3.2" paint-order="stroke">CHECK</text></g>
</svg>
</body></html>
